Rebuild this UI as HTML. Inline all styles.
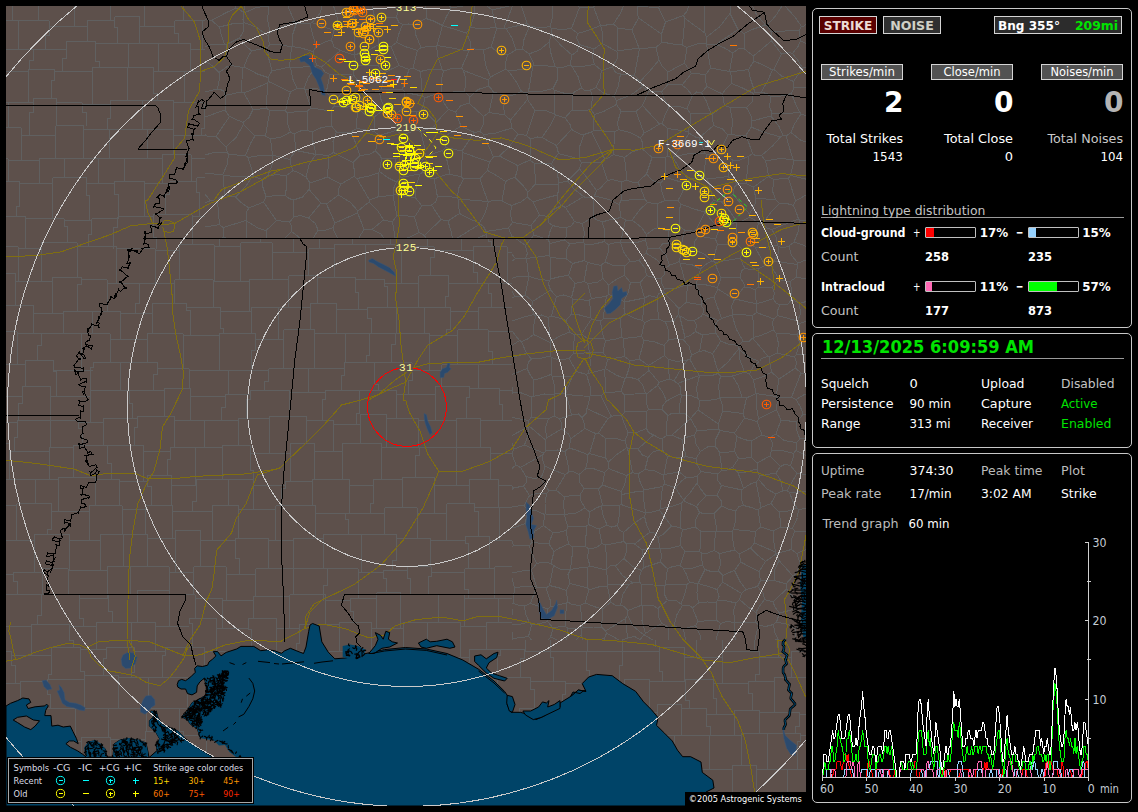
<!DOCTYPE html><html lang="en"><head><meta charset="utf-8"><title>Lightning Monitor</title><style>

html,body{margin:0;padding:0;background:#000;}
body{width:1138px;height:812px;position:relative;overflow:hidden;font-family:"DejaVu Sans","Liberation Sans",sans-serif;}
.map{position:absolute;left:6px;top:6px;display:block;}
.panel{position:absolute;border:1px solid #c8c8c8;border-radius:5px;box-sizing:content-box;}
.box{position:absolute;border:1px solid #d4d4d4;}
.bar{position:absolute;width:49px;height:9px;border:1px solid #c0c0c0;border-radius:1px;background:#000;}
.bar i{display:block;height:9px;}
.rule{position:absolute;height:1px;background:#9a9a9a;}
.legend{position:absolute;left:8px;top:758px;width:243px;height:43px;background:#000;border:1px solid #a8a8a8;box-shadow:0 0 0 1px #000;}
svg.txt{position:absolute;left:0;top:0;pointer-events:none;}
text{font-family:"DejaVu Sans","Liberation Sans",sans-serif;font-size:13px;}
text.r{font-size:13px;}
text.b{font-family:"DejaVu Sans Condensed","DejaVu Sans","Liberation Sans",sans-serif;font-weight:bold;font-size:13px;}
text.big{font-family:"DejaVu Sans Condensed","DejaVu Sans",sans-serif;font-weight:bold;font-size:28px;}
text.date{font-family:"DejaVu Sans Condensed","DejaVu Sans",sans-serif;font-weight:bold;font-size:17px;}
text.sm{font-size:9.5px;}
text.mono{font-family:"Liberation Mono","DejaVu Sans Mono",monospace;font-size:11px;}

</style></head><body>
<svg class="map" width="800" height="800" viewBox="6 6 800 800" fill="#fff"><rect x="6" y="6" width="800" height="800" fill="#5d504b"/><path d="M243.5,12L245,6M243.5,12L236,8M236,8L235,6M205,18.5L205,19.5M236,8L225.5,13L211.5,20.5M211.5,20.5L205,19.5M800,220L798,232L794,242M800,220L806,220.5M794,242L803,245L806,246.5M800,220L798.5,219M789,246L794,242M789,246L783,248L778.5,246.5M798.5,219L772,229.5M772,229.5L776,237L777.5,245.5M778.5,246.5L777.5,245.5M689,133L681,147L673.5,157M689,133L695.5,137L699,138M699,138L705,153M673.5,157L691,153L705,153M796.5,354L799.5,344.5L798.5,337.5M796.5,354L806,354M798.5,337.5L806,337.5M757,303.5L755,296L755,290M757,303.5L765,301.5L773,298.5M755,290L758.5,287M758.5,287L764,288L772.5,287M772.5,287L774.5,293.5L773,298.5M797,334.5L798.5,337.5M797,334.5L800,329.5L799,323.5M806,321.5L805.5,321.5L799,323.5M554.5,416L559.5,419M554.5,416L548.5,418.5M546.5,438L545.5,428L548.5,418.5M546.5,438L561.5,429M561.5,429L562,424L559.5,419M806,474.5L797,473.5M806,491.5L789.5,492.5M789.5,492.5L787,490.5M787,490.5L797,473.5M243.5,12L244,13M268.5,6L256.5,7.5L244,13M205,61L212,65.5L219,72.5M205,92L217.5,89M219,72.5L219,81L217.5,89M219.5,27L221.5,36L224.5,44M219.5,27L233.5,23.5L243,23.5M243,23.5L243,32L239.5,38M239.5,38L231.5,42L226.5,44.5M224.5,44L226.5,44.5M205,47L211,44.5L224.5,44M211.5,20.5L219.5,27M244,13L243,19.5L244,22.5M244,22.5L243,23.5M231.5,65.5L226.5,67L219,72.5M231.5,65.5L227,56L226.5,44.5M229.5,116.5L243,122.5M229.5,116.5L216,136.5M216,136.5L226,147M243,122.5L243.5,124.5M243.5,124.5L236,137.5L226,147M306,177L309.5,163.5L316,154.5M306,177L298,172.5L293,170.5M293,170.5L290.5,163.5L290,159.5M316,154.5L296,150.5M290,159.5L291,157L296,150.5M758.5,287L758,279L759,268.5M759,268.5L765,265.5M765,265.5L771,265.5M772.5,287L775.5,282.5L779,279.5M779,279.5L771,265.5M765,265.5L755,247M755,247L765.5,247.5L777.5,245.5M778.5,246.5L778.5,253L774,261M774,261L771,265.5M806,278.5L796,277.5M796,277.5L797.5,264.5M806,260L798,263M798,263L797.5,264.5M790,281.5L786,281L779,279.5M790,281.5L796,277.5M774,261L797.5,264.5M789,246L791.5,255.5L798,263M744,48.5L739,48.5L733,53M744,48.5L745,40.5L744,33.5M738,29.5L744,33.5M738,29.5L716,44.5M716,44.5L723.5,47.5L733,53M774,319L756.5,312.5M774,319L772.5,322.5L773.5,330M773.5,330L761,335.5L753,337.5M756.5,312.5L752.5,315.5M753,337.5L754,328.5L752.5,315.5M798.5,219L796.5,213L793.5,205.5M762.5,223.5L767,228L772,229.5M762.5,223.5L771.5,211.5L779.5,203.5M793.5,205.5L788.5,204L779.5,203.5M729.5,71.5L733,53M729.5,71.5L730.5,72M744,48.5L748,52L753.5,56M754,61L753.5,56M754,61L748.5,69.5M730.5,72L737.5,71L748.5,69.5M754,61L764,65.5L772.5,70M772.5,70L768,80L761.5,92M748.5,69.5L750.5,79L755,92.5M761.5,92L755,92.5M730.5,72L731.5,77.5L731.5,83.5M731.5,83.5L741.5,87.5L753.5,93.5M755,92.5L753.5,93.5M699,138L713.5,125.5M720.5,150.5L728,135M720.5,150.5L714.5,154.5L707,155M707,155L705,153M728,135L722.5,129L713.5,125.5M792,299L788,304L780,305M792,299L799.5,303.5M799.5,303.5L800.5,314L797.5,321M797.5,321L777.5,315.5M777.5,315.5L778,309.5L780,305M773,298.5L776.5,303.5L780,305M790,281.5L791.5,289.5L792,299M806,301.5L803,302.5L799.5,303.5M799,323.5L797.5,321M774,319L777.5,315.5M773.5,330L776,333M776,333L797,334.5M757,303.5L757,304M757,304L756.5,312.5M289.5,222L294,217M289.5,222L292,227L291.5,231.5M318,230L315.5,223.5L308.5,218M318,230L314,237L312.5,238.5M294,217L300,215.5L308.5,218M291.5,231.5L300,238L301,238.5M660.5,548.5L661.5,557L660.5,562M660.5,548.5L671.5,548L680.5,545.5M680.5,545.5L685,551.5M660.5,562L665,566.5L667.5,568.5M667.5,568.5L673,566.5L680,565.5M685,551.5L680,565.5M698,583.5L705,569.5M698,583.5L689.5,582.5M689.5,582.5L686,573.5L683,568M705,569.5L702.5,565M683,568L691.5,568.5L702.5,565M687,584.5L665.5,584.5M687,584.5L684.5,595L681,604M681,604L676,600.5L667.5,600.5M667.5,600.5L664.5,594.5L665,585.5M665,585.5L665.5,584.5M689.5,582.5L687,584.5M667.5,568.5L665.5,584.5M680,565.5L683,568M640,582L641.5,584.5M640,582L639,578L641.5,570.5M641.5,584.5L665,585.5M641.5,570.5L644,567.5M644,567.5L660.5,562M634.5,544L642,549.5M634.5,544L650,532M642,549.5L660,548M650,532L655.5,533.5L658,537.5M658,537.5L660,548M660.5,548.5L660,548M644,567.5L643,560L642,549.5M641.5,570.5L632,566L624,558.5M634.5,544L626,543.5M624,558.5L626.5,552L626,543.5M806,455.5L796,450.5M797,473.5L790.5,465.5M796,450.5L793.5,453.5M790.5,465.5L793,458L793.5,453.5M680.5,545.5L681,537.5L682.5,529.5M682.5,529.5L680,527.5M658,537.5L663.5,534L671.5,526M671.5,526L680,527.5M487,6L492,10M509,6L492,10M414,25L408.5,24L402.5,24.5M414,25L426,18.5M426,18.5L426.5,9.5L425,6M398.5,6L398.5,9L396.5,17.5M396.5,17.5L399,22.5L402.5,24.5M372,6L373,10L375.5,21M353,6L354,13.5L357,26M357,26L363.5,24L372.5,24.5M372.5,24.5L375.5,21M225,110L226,102L225,95.5M225,110L205,117M217.5,89L223.5,90.5L225,95.5M229.5,116.5L225,110M216,136.5L207,136L205,134.5M205,155L212,153L227.5,152.5M227.5,152.5L226,147M286,176L277.5,174.5L267.5,176M286,176L293,170.5M267.5,176L272,165.5L272.5,155.5M290,159.5L272.5,155M243.5,124.5L249.5,130.5L255,136M227.5,152.5L228.5,154.5M255,136L250.5,143.5L245.5,155.5M228.5,154.5L245.5,155.5M205,173L222.5,175M228.5,154.5L227,165L222.5,175M255,136L260,135L265.5,136M272.5,155.5L259.5,155.5L248,157.5M272.5,155L270.5,139M270.5,139L265.5,136M248,157.5L245.5,155.5M296,150.5L294,134M270.5,139L281,137L290.5,132M294,134L290.5,132M205,194.5L210.5,200.5M210.5,200.5L217.5,201.5M223,175L223.5,183L225,194.5M217.5,201.5L219.5,197.5L225,194.5M210.5,200.5L205,203M217.5,201.5L219.5,224.5M219.5,224.5L205,227M573,93.5L572,110M573,93.5L575,91.5L581.5,88M572,110L581,111L591,109.5M581.5,88L584.5,90.5L590.5,90M591,109.5L592.5,97.5L590.5,90M572,66.5L585.5,66L594.5,64.5M572,66.5L578,76.5L581.5,88M601.5,70.5L594.5,64.5M601.5,70.5L600,79L596,87.5M596,87.5L590.5,90M765.5,25L753.5,29L744,33.5M765.5,25L756.5,14.5L752.5,6M738,29.5L730,13.5M730,13.5L730,6M704,6L704.5,19.5L705,33M730,13.5L719.5,27L706.5,37M706.5,37L705,33M753.5,56L771.5,41M772.5,70L774,69.5M774,69.5L781.5,54M781.5,54L771.5,41M795.5,201L788.5,178M795.5,201L806,195M806,179L805.5,179L790.5,175.5M790.5,175.5L788.5,178M793.5,205.5L795.5,201M775.5,199.5L772.5,191L774,179.5M775.5,199.5L756,198.5M756,198.5L755,194.5L753.5,187M753.5,187L768.5,176.5M768.5,176.5L774,179.5M779.5,203.5L775.5,199.5M788.5,178L774,179.5M794,87.5L791.5,93.5M794,87.5L806,87.5M791.5,93.5L794.5,101.5L799.5,112M806,115L805.5,115.5L801,114M801,114L799.5,112M793.5,81.5L781.5,76L774,69.5M793.5,81.5L794,87.5M771,97L767.5,94L761.5,92M771,97L781.5,96L791.5,93.5M772,113L769.5,106.5L771,97M772,113L787.5,114L799.5,112M746.5,107.5L751,116L752,121M746.5,107.5L730,107.5M730,107.5L732.5,121L731.5,134M752,121L751,127M751,127L750,129L746,135M731.5,134L738,136L746,135M771,116L772,113M771,116L752,121M753.5,93.5L752,102L746.5,107.5M720.5,150.5L733,160.5M733,160.5L740,160L749,156M749,156L752.5,153.5M728,135L731.5,134M752.5,153.5L746,135M762.5,223.5L758.5,223M755,247L753,245.5M753,245.5L758.5,223M749.5,214L755,204.5L756,198.5M749.5,214L749.5,217M758.5,223L756,221L749.5,217M755,290L749,287L744,287M757,304L735,299M744,287L735,299M752.5,315.5L733,314M733,314L731.5,306L734.5,299.5M734.5,299.5L735,299M436.5,46L437,45.5M436.5,46L429,46.5L421,47.5M421,47.5L416,35.5L414,25M426,18.5L433.5,21L442.5,25.5M437,45.5L439.5,36.5L442.5,25.5M286,176L287,186L285,195M285,195L289,198.5L293.5,200M306,177L310,183M293.5,200L302.5,197L309,189.5M310,183L309,189.5M294,217L293.5,200M308.5,218L321,203M309,189.5L321,203M605.5,458L589.5,453.5M605.5,458L605,438M598.5,433L605,438M598.5,433L595.5,433.5M589.5,453.5L595.5,433.5M561.5,429L568,433.5L571,438.5M559.5,419L563.5,417.5L571.5,415M582,417.5L578.5,414L571.5,415M582,417.5L584.5,424.5L585,428.5M571,438.5L585,428.5M587,408.5L586.5,413L582,417.5M587,408.5L608,418.5M598.5,433L608,418.5M595.5,433.5L585,428.5M587,408.5L589,401L589,396.5M571.5,415L566.5,394.5M589,396.5L566.5,394.5M685,551.5L699.5,551.5M702.5,565L701.5,557.5L702,553.5M699.5,551.5L702,553.5M650,532L646.5,524.5L644.5,516.5M671.5,526L666,519L659.5,510M645.5,512.5L652.5,512L659.5,510M645.5,513L644.5,516.5M626,543.5L624,541.5M644.5,516.5L634.5,523L623.5,532.5M624,541.5L623.5,532.5M643.5,491.5L644,502L645.5,512.5M643.5,491.5L634.5,492L622,494.5M645.5,513L621,504.5M622,494.5L621,504.5M617.5,525.5L619.5,530L623.5,532.5M617.5,525.5L619,517L619.5,505.5M621,504.5L619.5,505.5M787,490.5L782.5,491M780.5,466.5L784.5,464.5L790.5,465.5M780.5,466.5L776,473M776,473L781.5,482L782.5,491M776,473L759.5,476M782.5,491L776,494M776,494L767,489L758.5,479.5M759.5,476L758.5,479.5M806,394L803.5,395L796,399.5M796,399.5L791.5,397.5M791.5,397.5L801,373M806,374.5L806,374.5L801,373M806,414.5L803,414M803,414L800.5,407L796,399.5M794.5,357L777,353M794.5,357L796.5,362L795.5,368M795.5,368L779,379M777,353L769,357M769,357L770,363L771.5,372M779,379L771.5,372M796.5,354L794.5,357M776,333L778.5,343.5L777,353M801,373L795.5,368M769,357L768,356.5M768,356.5L762,349L752.5,338M733,314L732,315M732,315L736.5,329.5L743,341M752.5,338L749.5,341L743,341M718,371L728,362L739,348.5M718,371L712.5,353.5M712.5,353.5L716,349L720.5,341M720.5,341L728,344L738.5,345.5M739,348.5L738.5,345.5M396.5,17.5L386,17L375.5,21M550.5,637L551.5,634L553,628M550.5,637L557,640M553,628L558,627L565,626.5M566.5,640L567.5,635.5L568,628M565,626.5L568,628M681,604L682.5,605.5M667.5,600.5L662,605L658,608.5M669,627.5L662,623.5M669,627.5L674,626M682.5,605.5L677,614.5L674,626M658,608.5L658,616.5L662,623.5M581,629L568,628M581,629L581,635M576,640L581,635M223,175L237,177L252.5,176M225,194.5L232,196.5L235.5,197M235.5,197L246,186L252.5,176M267.5,176L262.5,179.5M285,195L266,196.5M266,196.5L263,187.5L262.5,179.5M248,157.5L251.5,168.5L253.5,176M262.5,179.5L256.5,177.5L253.5,176M253.5,176L252.5,176M221,238.5L224,237M219.5,224.5L223,227.5M223,227.5L224,237M223.5,238.5L224,237M224,237L226.5,238.5M636,111.5L642.5,105.5M636,111.5L639.5,121L644,133M642.5,105.5L659.5,124M644,133L650,130L659.5,124M729.5,71.5L710.5,68M716,44.5L706.5,44M710.5,68L706.5,44M706.5,37L706,44M591,109.5L594.5,114.5M594.5,114.5L604.5,111L616.5,104.5M596,87.5L603.5,93L614,96.5M616.5,104.5L616.5,100.5M614,96.5L616.5,100.5M601.5,70.5L612.5,67M612.5,67L615.5,72.5L620.5,74M614,96.5L618,87L620.5,74M594.5,64.5L592.5,57L594,49M612.5,67L617,59L617,51.5M617,51.5L602,43.5M594,49L602,43.5M593.5,7L594.5,6M593.5,7L585,8L579.5,7.5M579.5,7.5L578.5,6M639.5,48.5L634.5,75.5M639.5,48.5L639,48M620.5,74L634.5,75.5M639,48L617,51M555,66.5L551,53.5L549,42M555,66.5L533.5,65M533.5,65L533,61.5L529,54M549,42L540.5,49.5L529,54M685,18.5L705,33M685,18.5L683.5,15.5M683.5,15.5L687.5,10.5L688.5,6M683.5,15.5L665.5,22M665.5,22L658.5,7.5M658.5,7.5L659.5,6M749,156L746,183.5M746,183.5L753.5,187M752.5,153.5L756,156L761.5,155.5M768.5,176.5L767.5,169L765.5,161M765.5,161L761.5,155.5M751,127L763.5,132L780.5,137M761.5,155.5L772.5,146L780.5,137M771,116L779,126.5L783,135.5M783,135.5L780.5,137M793.5,81.5L802.5,68M781.5,54L789,52.5L792.5,53.5M802.5,68L798,60.5L792.5,53.5M720,398L718.5,386.5L720.5,376M720,398L742,397M742,397L738,385L732.5,376M720.5,376L732.5,376M718,371L718,373.5M712.5,353.5L704,350.5L699.5,351.5M718,373.5L710.5,376L699.5,375.5M690,359.5L694,367L699.5,375.5M690,359.5L691.5,355M699.5,351.5L691.5,355M623.5,338.5L641.5,336.5M623.5,338.5L624.5,356.5M630,360.5L624.5,356.5M630,360.5L635.5,360L639,359M639,359L644,340.5M641.5,336.5L644,340.5M638,379.5L642.5,384.5L645.5,393.5M638,379.5L649,370.5M645.5,393.5L646.5,394M646.5,394L657.5,385.5M657.5,385.5L659,382.5M659,382.5L649,370.5M630,360.5L629,368.5L626,377.5M638,379.5L632.5,378L626,377.5M639,359L648.5,365.5M649,370.5L648.5,365.5M664,345.5L653.5,341.5L644,340.5M664,345.5L664.5,355.5M648.5,365.5L664.5,355.5M749.5,214L733,194.5M746,183.5L737.5,184M733,194.5L734.5,187L737.5,184M733,160.5L730,168L728,176.5M728,176.5L737.5,184M715,262.5L717,268.5L721,278M715,262.5L740.5,258M721,278L740,277M740,277L741.5,271L745,268M745,268L743,265L740.5,258M759,268.5L751,270L745,268M744,287L744,284L740,277M753,245.5L742.5,249.5M742.5,249.5L740.5,258M374.5,131.5L356.5,128.5M374.5,131.5L374.5,126.5L374,117M374,117L365,114.5L357.5,108M356.5,128.5L357.5,108M351,132L355,141.5L360,155.5M351,132L356.5,128.5M360,155.5L369,154.5L375.5,151M379,135.5L375.5,151M379,135.5L374.5,131.5M357,106L367,90.5M357,106L357.5,108M383.5,105.5L381,112L374,117M383.5,105.5L381,99.5L379,91M367,90.5L372,93L379,91M421,47.5L417.5,50.5M402.5,24.5L399,33.5L396.5,42.5M396.5,42.5L406.5,47L417.5,50.5M436.5,46L438,57L442.5,70M442.5,70L431,69L420.5,71.5M417.5,50.5L413,68M420.5,71.5L413,68M378.5,66L379,57L383,46.5M378.5,66L380.5,70L384.5,73M384.5,73L390.5,69.5L399,65.5M399,65.5L391,46.5M383,46.5L391,46.5M379,44.5L383,46.5M379,44.5L368,50.5L354.5,55M355.5,65.5L355.5,61.5L354.5,55M355.5,65.5L378.5,66M367,90.5L360,83.5L353.5,75M379,91L381.5,89M355.5,65.5L353,74M381.5,89L384.5,73M353.5,75L353,74M381.5,89L402.5,89M402.5,89L409,69.5M409,69.5L399,65.5M396.5,42.5L391,46.5M413,68L409,69.5M372.5,24.5L377.5,35L379,44.5M327.5,177L341,184M327.5,177L329,155M341,184L354,176.5M329,155L333.5,152.5M333.5,152.5L353,162.5M354,176.5L354.5,171.5L353,162.5M316,154.5L323,155L329,155M310,183L327.5,177M336.5,132L351,132M336.5,132L333,141.5L333.5,152.5M360,155.5L353,162.5M326.5,204L338.5,195M326.5,204L335,223M338.5,195L350.5,202.5L358,211M335,223L347.5,217.5L357.5,213M357.5,213L358,211M321,203L326.5,204M341,184L338.5,189.5L338.5,195M333,227.5L325,230.5L318,230M333,227.5L335,223M357,178.5L354,176.5M357,178.5L369.5,200M358,211L363.5,206.5L369,202M369.5,200L369,202M624.5,356.5L607.5,359.5M626,377.5L625,378.5M625,378.5L616,375L605.5,368.5M607.5,359.5L605.5,368.5M660,509L662.5,486.5M660,509L673,506L681.5,503M681.5,503L683.5,500.5M675.5,488L664.5,484M675.5,488L680,495L683.5,500M662.5,486.5L664.5,484M643.5,491.5L644,490M644,490L662.5,486.5M659.5,510L660,509M680,527.5L681.5,503M697,476.5L697,483M697,476.5L691.5,477.5L686,477.5M697,483L689.5,493.5L683.5,500M686,477.5L681.5,481L675.5,488M696.5,506.5L688,503L683.5,500.5M696.5,506.5L699,503L706,496M706,496L700,488L697,483M638,474L640,481.5L644,490M638,474L645,469.5M645,469.5L655,471L663.5,475M663.5,475L664.5,484M608,418.5L611.5,416.5M590,396L589,396.5M590,396L601,395.5M611.5,416.5L606.5,407L601,395.5M586.5,374.5L590,386L590,396M586.5,374.5L588,373.5M588,373.5L596,371.5L604.5,369.5M604.5,369.5L606,392M601,395.5L606,392M625,378.5L621,391M604.5,369.5L605.5,368.5M606,392L615,392L621,391M645.5,393.5L624,394.5M624,394.5L621,391M646.5,394L646.5,404L648.5,409.5M648.5,409.5L647,411M624,394.5L625,411.5M647,411L625,411.5M611.5,416.5L615,415.5L621.5,416M625,411.5L621.5,416M699.5,512.5L696,519L695,527M699.5,512.5L705.5,514L714,513.5M714,513.5L717,531M695,527L700.5,531M700.5,531L706,531.5L715.5,531.5M717,531L715.5,531.5M682.5,529.5L687,529L695,527M696.5,506.5L699.5,512.5M721.5,506L714,513.5M721.5,506L721,500.5L717,495M717,495L706,496M699.5,551.5L701,543.5L700.5,531M714,550.5L708,553L702,553.5M714,550.5L715.5,531.5M640,582L633,583M624,558.5L615.5,566M615.5,566L622.5,575.5L633,583M624,541.5L616.5,543L605,545M615.5,566L610.5,565.5L606.5,569.5M605,545L606.5,555.5L606.5,569.5M608,584.5L607.5,577.5L606,570M608,584.5L629,584.5M633,583L629,584.5M606.5,569.5L606,570M638,474L632.5,472.5M632.5,472.5L626.5,475.5M622,494.5L621.5,491.5M626.5,475.5L625,483.5L621.5,491.5M701,640L700.5,636L695.5,625.5M695.5,625.5L683.5,629M683.5,629L685.5,639L685.5,640M669,627.5L668,638L668.5,640M674,626L683.5,629M698,621.5L695,614L692.5,608M698,621.5L716.5,620M716.5,620L716,602.5M716,602.5L707.5,602L698.5,603M698.5,603L692.5,608M695.5,625.5L698,621.5M682.5,605.5L689,605L692.5,608M698,583.5L708.5,586.5L717,589.5M698,583.5L697,592.5L698.5,603M717,589.5L719,596.5L717.5,600.5M717.5,600.5L716,602.5M806,599.5L804.5,601M804.5,601L806,601.5M721.5,506L728,509L735.5,511M732,531L733.5,529.5M732,531L717,531M733.5,529.5L735.5,521L735.5,511M792.5,528.5L786,527L781,527M792.5,528.5L797.5,517.5L798.5,509.5M781,527L780.5,521L779,512M779,512L787,511.5L797,508M797,508L798.5,509.5M795,531L792.5,528.5M795,531L806,532M806,508.5L798.5,509.5M789.5,492.5L793,502L797,508M776,494L771,503.5M771,503.5L776,509L779,512M776,434L781,420M776,434L784,440.5L796.5,442.5M781,420L789.5,421L797,421M797,421L796.5,430L800,439M800,439L796.5,442.5M806,438L800,439M803,414L801.5,416.5L797,421M796,450.5L796.5,442.5M793.5,453.5L784,451L771.5,450.5M776,434L770,437.5M770,437.5L772.5,443L771.5,450.5M780.5,466.5L774.5,460.5L770,456M770,456L771.5,450.5M759.5,476L757,469M757,469L757,463M770,456L757,463M722.5,411L722,403.5L720,398.5M722.5,411L743,413.5M720,398.5L720,398M742,397L746.5,398M743,413.5L746.5,398M739.5,350L749.5,357.5L759.5,361.5M739.5,350L740,360L744.5,372M759.5,361.5L754,365.5L749.5,374M744.5,372L749.5,374M768,356.5L761.5,358.5L759.5,361.5M743,341L738.5,345.5M739,348.5L739.5,350M718,373.5L720.5,376M732.5,376L738,374.5L744.5,372M753.5,380L749.5,374M753.5,380L763.5,376.5L771.5,372M496,27L497,28M496,27L483.5,29L470.5,27.5M497,28L491,47M491,47L483.5,50M483.5,50L471,48.5M471,48.5L470,41L466.5,33M470.5,27.5L466.5,33M512.5,6L504,28M492,10L496,27M504,28L497,28M490.5,77L506,69M490.5,77L485.5,65L483.5,50M506,69L505.5,63.5L507.5,55M507.5,55L499,53L491,47M469,51L471,48.5M469,51L437,45.5M442.5,25.5L466.5,33M451,8L463,6M451,8L449.5,6M442.5,25.5L446.5,16.5L451,8M470.5,27.5L474,15.5L474,6M331.5,40L334,30.5M331.5,40L334,47L340.5,50.5M354,28L339,26M354,28L355,40L354.5,55M339,26L334,30.5M354.5,55L340.5,50.5M316,47L310,24M316,47L323.5,42.5L331.5,40M310,24L312,22.5M312,22.5L321.5,26L334,30.5M357,26L354,28M333.5,6L336.5,14.5L339,26M312,22.5L320,13.5L322,6M269,6L267.5,19.5L270,32.5M244,22.5L256,27L268,35.5M268,35.5L270,32.5M288,6L290.5,12.5L294.5,21M270,32.5L294.5,21M316,47L313,51.5M310,24L302.5,23L296.5,23M313,51.5L301,48L292,46.5M292,46.5L292,36.5L296.5,23M294.5,21L296.5,23M231.5,65.5L243,67.5M225,95.5L241,92M243,67.5L241,92M253,109.5L249,117.5L243,122.5M253,109.5L244,93M244,93L241,92M253,109.5L266.5,108.5M244,93L267.5,83M267.5,83L266.5,108.5M265.5,136L267.5,124L270,110.5M266.5,108.5L270,110.5M353,74L330,74.5M340.5,50.5L321.5,67M321.5,67L325,72L330,74.5M313,51.5L316.5,65M321.5,67L316.5,65M547.5,621.5L553,628M547.5,621.5L547.5,614L548,609M565,626.5L566.5,603M548,609L550,607M566.5,603L550,607M548,609L538,606L530.5,603.5M536.5,587L546,588M546,588L550,599.5L550,607M530.5,603.5L536.5,587M641.5,584.5L642,605M658,608.5L652,605L642.5,605.5M642,605L642.5,605.5M662,623.5L654.5,627.5L645.5,633.5M642.5,605.5L642,620.5L645.5,633.5M653,640L644.5,635M644.5,635L645.5,633.5M550.5,637L548.5,640M581,635L582.5,640M604,640L604.5,638M604.5,638L600,640M249,208L263.5,202M249,208L246,213L246,220.5M246.5,221L246,220.5M246.5,221L258,228L266,230.5M263.5,202L276.5,220.5M276.5,220.5L272,225L266,230.5M235.5,197L241,202.5L249,208M266,196.5L263.5,202M223,227.5L246,220.5M247,238.5L246.5,221M266,238.5L266,230.5M289.5,222L276.5,220.5M291.5,231.5L286,237L285.5,238.5M685,18.5L683.5,32.5L682.5,45M706,44L698,43.5L687,47.5M682.5,45L687,47.5M661.5,34L665.5,22M661.5,34L662,42M682.5,45L673,44L662,42M713.5,125.5L712,114M730,107.5L724.5,105.5M712,114L724.5,105.5M731.5,83.5L725,90L722.5,94M724.5,105.5L722.5,94M572,55L561,45.5L551.5,35M572,55L577.5,51L579.5,44.5M579.5,44.5L576.5,38L577.5,33.5M577.5,33.5L571.5,28.5M571.5,28.5L562,29.5L551.5,28.5M551.5,28.5L551.5,35M570,65L572,55M570,65L563,67.5L557.5,68M557.5,68L555,66.5M549,42L551.5,35M572,66.5L570,65M594,49L579.5,44.5M602,43.5L603,34L600.5,25.5M600.5,25.5L588,30.5L577.5,33.5M600.5,25L593.5,7M579.5,7.5L571.5,28.5M551.5,28.5L550,26.5M552.5,6L552.5,17L550,26.5M506,28.5L512,38L516,50M506,28.5L527,23.5M527,23.5L529.5,26M529.5,26L524,39.5L522.5,49M516,50L522.5,49M504,28L506,28.5M507.5,55L516,50M521.5,6L527,23.5M550,26.5L540,28L529.5,26M529,54L522.5,49M508.5,71L506,69M508.5,71L521.5,69.5L533,66M533,66L533.5,65M661.5,34L638.5,18M658.5,7.5L638,6.5M638,6.5L637.5,13L638.5,18M639.5,48.5L656,47.5M639,48L632,30M662,42L656,47.5M638.5,18L632,30M617,51L618,28M632,30L618,28M600.5,25L606.5,25L613.5,24M613.5,24L618,28M613.5,24L620,14L623.5,6M794,160.5L793,159.5M794,160.5L805,160L806,160M793,159.5L786,136M806,142L801,140.5L791,132.5M791,132.5L786,136M790.5,175.5L794,160.5M765.5,161L779.5,158.5L793,159.5M783,135.5L786,136M801,114L794.5,124L791,132.5M765.5,25L767,25.5M771.5,41L771.5,37L771,31.5M767,25.5L771,31.5M767,25.5L775.5,16L782,6M802.5,68L806,67.5M792.5,53.5L798,46.5L800.5,41M800.5,41L806,43.5M771,31.5L799,30.5M800.5,41L799,30.5M785,6L795,17L801.5,26.5M799,30.5L801.5,26.5M801.5,26.5L804,26L806,24.5M716,333L715,324.5L718.5,320.5M716,333L702.5,335M718.5,320.5L702.5,314M702.5,335L695.5,331.5M695.5,331.5L696.5,325L694.5,320.5M694.5,320.5L701,316.5L702.5,314M720.5,341L716,333M732,315L721.5,318.5M721.5,318.5L718.5,320.5M699.5,351.5L702.5,335M702,304L707.5,298.5L714,297M702,304L700,293.5L696,284.5M696,284.5L706.5,285L717.5,287.5M714,297L718,289M718,289L717.5,287.5M721.5,318.5L714,297M701,305L702,304M701,305L704,310L702.5,314M686,302.5L686.5,293.5L688,285.5M686,302.5L693.5,303.5L701,305M688,285.5L696,284.5M734.5,299.5L718,289M721,278L717.5,287.5M722.5,411L718.5,424M720,398.5L708.5,400.5L700,401M718.5,424L698,410M700,401L699,407L698,410M699.5,375.5L696.5,388L698,398.5M700,401L698,398.5M665.5,322L669,331.5L668.5,340M665.5,322L674,320.5L678.5,314.5M678.5,314.5L679.5,315.5M679.5,315.5L685,337.5M668.5,340L677,338.5L683.5,340M683.5,340L685,337.5M658.5,319L651.5,319.5L644.5,322.5M658.5,319L665.5,322M664,345.5L668.5,340M644.5,322.5L641.5,336.5M686,302.5L679,308.5M679,308.5L678.5,314.5M694.5,320.5L687,320L679.5,315.5M695.5,331.5L690,335.5L685,337.5M691.5,355L689,346L683.5,340M674,381L679.5,371.5L687.5,360M674,381L670,379M670,379L668,369.5L668,359M687.5,360L676.5,361.5L668,359M690,359.5L687.5,360M677.5,383.5L699.5,375.5M677.5,383.5L674,381M659,382.5L664.5,380.5L670,379M664.5,355.5L668,359M565,118L555.5,115M565,118L570,124.5L571.5,129.5M555.5,115L550.5,125L542,137.5M542,137.5L556.5,145.5M556.5,145.5L571.5,129.5M572,110L565,118M591.5,132L594,130M591.5,132L584,134.5M594,130L593.5,122.5L594.5,114.5M584,134.5L580,134L571.5,129.5M621,217.5L625.5,220M621,217.5L611,219.5L602,222M625.5,220L620.5,242.5M602,222L605,231.5L604.5,241.5M620.5,242.5L615.5,242.5L608,244.5M608,244.5L604.5,241.5M625,266L613.5,265.5L605,262M625,266L630,261M620.5,242.5L624,252.5L630,261M608,244.5L608.5,252L605,262M593.5,217L582,223.5M593.5,217L596,219.5L602,222M582,223.5L584.5,233L583,242M583,242L585,244.5M604.5,241.5L594.5,244L585,244.5M679,308.5L663.5,292M686,285L688,285.5M686,285L675,288.5L664.5,288.5M664.5,288.5L663.5,292M658.5,319L657,297.5M663.5,292L658.5,293.5L657,297.5M642.5,320.5L644.5,322.5M642.5,320.5L644.5,298M657,297.5L649.5,295.5L644.5,298M621,111L630.5,111.5L636,111.5M621,111L617.5,122.5L618.5,129.5M644,133L640.5,138M640.5,138L630,132.5L618.5,129.5M591.5,132L604.5,158.5M594,130L614.5,132M604.5,158.5L608.5,158L613.5,154.5M613.5,154.5L614,145L614.5,132M621,111L616.5,104.5M618.5,129.5L614.5,132M742.5,249.5L738,245M713.5,261L714.5,254.5L717.5,244.5M713.5,261L715,262.5M738,245L717.5,244.5M665,200.5L678,200.5M665,200.5L662,192L660.5,183M660.5,183L665.5,177.5M665.5,177.5L686,183.5M678,200.5L681.5,194L686,183.5M667.5,156.5L666,157M667.5,156.5L673,157.5M673,157.5L679.5,168.5L689,180M666,157L665.5,177.5M689,180L686,183.5M707,155L705,165L704.5,176.5M689,180L698.5,177L704.5,176.5M728,176.5L707.5,179M704.5,176.5L707.5,179M686,285L680,263M696,284.5L700.5,269M700.5,269L692.5,265L680,263M713.5,261L712,261M700.5,269L705.5,264.5L712,261M698,236L715.5,239M698,236L694.5,242L694,249.5M717.5,244.5L715.5,239M712,261L705,254.5L694,249.5M402.5,89L405,92.5M420.5,71.5L422.5,96M422.5,96L405,92.5M364,229.5L372,229.5M364,229.5L360,236L359,238.5M372,229.5L381,234L384,238.5M357.5,213L360.5,220L364,229.5M369,202L378,211L383.5,220M383.5,220L372,229.5M338,238.5L334.5,232.5L333,227.5M383.5,220L390,221.5L392.5,221.5M392.5,221.5L395,237.5M395,237.5L393.5,238.5M357,178.5L369.5,176L378,173M369.5,200L379,196.5M379,196.5L378,173M381.5,158.5L380,155.5L375.5,151M381.5,158.5L380.5,165.5L379.5,171.5M379.5,171.5L378,173M392.5,221.5L397,215.5M379,196.5L393,195.5M397,215.5L393,195.5M442,92.5L464.5,91.5M442,92.5L441,81L443.5,71M464.5,91.5L466,80L463.5,70.5M443.5,71L452,68.5L461.5,68M461.5,68L463.5,70.5M489,86L488.5,80M489,86L478,89.5L470,97M488.5,80L463.5,70.5M470,97L464.5,91.5M442.5,70L443.5,71M469,51L461.5,68M490.5,77L488.5,80M450,174L455,175.5L461,176.5M450,174L447,160.5L442.5,150.5M461,176.5L462.5,152.5M442.5,150.5L445.5,147.5M445.5,147.5L462,151M462.5,152.5L462,151M554.5,416L555,407L554,395M565.5,394L566.5,394.5M565.5,394L562.5,393L555,394M554,395L555,394M569,358.5L559,360L551.5,357.5M569,358.5L576.5,371.5M572.5,376L576.5,371.5M572.5,376L552,376M551.5,357.5L551,374.5M552,376L551,374.5M586.5,374.5L576.5,371.5M565.5,394L569.5,383.5L572.5,376M555,394L554.5,385.5L552,376M585,244.5L584.5,260.5M605,262L601,265.5M584.5,260.5L587.5,262.5M601,265.5L587.5,262.5M738.5,458.5L743.5,458.5L751,457M738.5,458.5L732.5,467.5M757,469L746,472L738,472.5M757,463L751,457M732.5,467.5L738,472.5M717,495L721.5,485.5M697,476.5L701,471.5M721.5,485.5L717.5,480L718,474M701,471.5L718,474M679.5,472L664,474.5M679.5,472L681.5,458M664,474.5L667.5,456.5M681.5,458L667.5,456.5M663.5,475L664,474.5M686,477.5L679.5,472M686,456.5L693,458L696,458.5M686,456.5L681.5,458M701,471.5L697,464.5L696,458.5M647,411L646.5,428.5M621.5,416L628,433M646.5,428.5L638,432L628,433M605,438L616,438.5L625,441M628,433L625,441M605.5,458L608.5,462M608.5,462L615.5,455.5L627,447.5M625,441L627,447.5M608.5,462L608.5,468.5M632.5,472.5L627.5,448M626.5,475.5L608.5,468.5M627.5,448L627,447.5M793,576L779,560.5M793,576L786,584M779,560.5L774.5,570L774.5,580.5M774.5,580.5L786,584M705,569.5L711,571.5L718.5,571M714,550.5L719.5,553.5M718.5,571L720.5,564.5L719.5,553.5M732,531L733,540.5L734.5,550M719.5,553.5L728.5,551.5L734.5,550M739.5,554L740.5,562M739.5,554L744,551.5L750.5,548M765.5,561.5L757,554.5L750.5,548M765.5,561.5L759,571.5M759,571.5L740.5,562M779,560.5L776,554M774.5,580.5L767.5,581L760.5,580.5M765.5,561.5L776,554M759,571.5L760.5,580.5M621.5,491.5L602.5,485M608.5,468.5L604.5,472.5M604.5,472.5L602.5,485M569,472L573,471.5L579,474.5M569,472L567.5,461.5L565,451.5M587.5,454.5L576,450L569,448M587.5,454.5L587.5,461L585.5,469M585.5,469L579,474.5M569,448L565,451.5M589.5,453.5L587.5,454.5M571,438.5L569,448M604.5,472.5L593,468.5L585.5,469M619.5,505.5L602.5,505M602.5,485L598.5,489M602.5,505L598.5,489M579,474.5L579.5,482L584,488.5M598.5,489L584,488.5M512,527.5L516,527L525,523.5M525,523.5L527,515.5L528,511M528,511L524,505.5M512,506.5L524,505.5M525,523.5L534.5,531.5M528,511L536,510.5L544.5,514.5M544.5,514.5L543.5,525.5M534.5,531.5L543.5,525.5M795.5,640L796,629M802,620.5L798.5,626L796,629M802,620.5L806,621.5M806,549.5L797,553.5M806,565.5L800.5,565.5M797,553.5L800.5,565.5M791.5,549.5L791.5,539.5L795,531M791.5,549.5L797,553.5M794.5,575.5L798.5,568.5L800.5,565.5M794.5,575.5L806,582.5M794.5,575.5L793,576M791.5,549.5L776,553.5M776,554L776,553.5M761,507.5L758,510M761,507.5L756,482M758,510L751.5,507.5L743.5,505.5M743.5,505.5L741.5,499.5L742,490M756,482L750.5,484L743.5,488.5M742,490L743.5,488.5M771,503.5L761,507.5M758.5,479.5L756,482M735.5,511L739,506.5L743.5,505.5M721.5,485.5L742,490M738,472.5L743.5,488.5M732.5,467.5L727,470L722,470M722,470L718,474M770,437.5L762,435M751,457L751.5,441M751.5,441L759,436.5L762,435M776.5,410L767,414.5L758.5,419M776.5,410L777.5,398M758.5,419L756.5,406.5L756,393.5M776,396.5L777.5,398M776,396.5L756,393.5M781,420L776.5,410M762,435L757,421.5M757,421.5L758.5,419M791.5,397.5L777.5,398M743,413.5L744.5,418M746.5,398L756,393.5M757,421.5L744.5,418M779,379L776,396.5M753.5,380L756,393.5M268,35.5L269.5,45M269.5,45L280.5,44.5L291.5,47M353.5,75L334,104M330,74.5L326.5,91M326.5,91L334,104M357,106L343.5,107.5L334,106M334,106L334,104M536.5,587L531.5,570M531.5,570L522,571L512,573M514.5,587.5L525,586.5L536.5,587M514.5,587.5L513,582L512,578.5M602,543.5L605,545M602,543.5L596.5,547.5L589,549M606,570L590,566M590,566L587.5,557L589,549M514.5,587.5L513,603.5M512,604L513,603.5M530.5,603.5L524.5,606M513,603.5L518,605L524.5,606M640,639.5L644,635M701.5,92.5L707,86.5M701.5,92.5L696.5,92L692.5,95.5M682,85L687,89L692.5,95.5M682,85L691.5,73.5M691.5,73.5L700,74L705.5,75M705.5,75L705,79L707,86.5M712,114L711,114M711,114L706.5,101.5L701.5,92.5M722.5,94L707,86.5M710.5,68L705.5,75M684.5,63L687,47.5M684.5,63L691.5,73.5M669,107L678,106L687,109M669,107L665.5,114L662,123.5M667.5,128.5L662,123.5M667.5,128.5L688,131.5M688,131.5L690,124L690.5,113.5M690.5,113.5L687,109M689,133L688,131.5M667.5,156.5L667.5,128.5M711,114L690.5,113.5M692.5,95.5L690,101L687,109M668,84.5L661.5,92M668,84.5L667.5,80L668,72M668,72L662,66L659,60M659,60L649.5,71.5L640,81.5M661.5,92L648.5,91.5M648.5,91.5L642.5,86.5M642.5,86.5L640,81.5M682,85L668,84.5M669,107L665.5,101L661.5,92M684.5,63L668,72M656,47.5L659,60M634.5,75.5L640,81.5M642.5,105.5L648.5,91.5M659.5,124L662,123.5M616.5,100.5L631,95L642.5,86.5M530.5,139L526.5,135.5M530.5,139L530.5,148.5L530,160M530,160L517.5,165.5M499.5,156L517.5,165.5M499.5,156L509.5,146.5L518,134M518,134L526.5,135.5M499.5,156L493.5,157M493.5,157L483.5,134.5M518,134L512,128M483.5,134.5L496,133L512,128M528.5,91.5L539.5,92L553,88.5M528.5,91.5L526.5,93M526.5,93L527.5,99.5M527.5,99.5L535,110.5M535,110.5L546,110.5L555,114.5M555,114.5L554,103L554,90M554,90L553,88.5M557.5,68L557.5,79.5L553,88.5M533,66L531,77L528.5,91.5M508.5,71L516,81.5L521.5,91.5M521.5,91.5L526.5,93M526.5,135.5L530,125L535,110.5M512,128L510.5,120M510.5,120L527.5,99.5M555.5,115L555,114.5M542,137.5L537.5,137L530.5,139M573,93.5L565,93.5L554,90M657.5,385.5L662.5,391.5L666.5,401M648.5,409.5L653.5,409.5L662.5,410M662.5,410L662.5,406L666.5,401M677.5,383.5L680.5,387L680,394M666.5,401L680,394M698,398.5L690.5,395.5L681.5,395M680,394L681.5,395M718.5,424L719,429.5M698,410L690.5,418.5M719,429.5L707,430L697,430M690.5,418.5L697,430M686,456.5L682,439.5M696,458.5L700.5,451.5M700.5,451.5L696,444L694.5,435M694.5,435L687.5,437L682,439.5M720,430.5L715.5,439.5L715,446M720,430.5L734.5,433M734.5,451L737,436.5M734.5,451L729,452L719.5,452M719.5,452L715,446M734.5,433L737,436.5M719,429.5L720,430.5M700.5,451.5L707.5,447L715,446M694.5,435L697,430M744.5,418L734.5,433M738.5,458.5L734.5,451M751.5,441L744,439.5L737,436.5M722,470L719.5,452M556.5,145.5L558.5,153.5M584,134.5L579.5,147L579,159M558.5,153.5L579,159M530,160L534.5,163.5M534.5,163.5L551.5,164M558.5,153.5L555.5,157L551.5,164M604.5,158.5L601.5,162M601.5,162L592,162.5L581.5,162.5M579,159L581.5,162.5M535.5,184L548.5,185L558.5,184M535.5,184L528,192M528,192L527.5,197M557.5,195L547.5,197.5L533,202M557.5,195L558.5,190L558.5,184M527.5,197L533,202M534.5,163.5L535.5,184M551.5,164L557,172L559,183M559,183L558.5,184M515,177.5L517,171.5L517.5,165.5M515,177.5L523,185.5L528,192M647.5,202.5L640.5,209L632,220M647.5,202.5L657,204M632,220L641.5,227.5L646.5,234.5M657,204L658,227.5M658,227.5L653,229.5L646.5,234.5M632,220L625.5,220M620.5,242.5L635,243L645.5,240M646.5,234.5L645.5,240M640,282.5L644.5,298M640,282.5L646.5,275.5M664.5,288.5L662,284L661,278M661,278L655,278L646.5,275.5M624.5,275.5L625,266M624.5,275.5L630.5,282.5M630.5,282.5L640,282.5M630,261L635,261.5L639,260M646.5,275.5L645,268L639,260M638,182L632,182L626,180M638,182L646.5,174M626,180L626,171L624.5,157.5M646.5,174L652,157.5M624.5,157.5L632,152L642,148.5M642,148.5L652,157.5M647.5,202.5L645,199M657,204L665,200.5M645,199L638,182M660.5,183L652.5,180.5L646.5,174M666,157L652,157.5M640.5,138L642.5,142.5L642,148.5M613.5,154.5L624.5,157.5M645,199L621,200.5M626,180L621.5,182M621.5,182L621,200.5M601.5,162L607.5,180.5M621.5,182L612.5,179.5L607.5,180.5M621,217.5L619,204.5M619,204.5L621,200.5M720,227.5L727.5,226L736,222M720,227.5L713,222L705,212.5M736.5,221.5L730.5,212L721.5,202M721.5,202L713.5,200.5M713.5,200.5L704.5,212M705,212.5L704.5,212M738,245L736,222M715.5,239L720,227.5M698,236L695,231.5M695,231.5L705,212.5M749.5,217L742.5,221L736.5,221.5M733,194.5L721.5,202M707.5,179L710,187.5L713.5,200.5M678,200.5L680.5,204M680.5,204L694,209L704.5,212M512,298L515,296.5M515,296.5L512,291.5M529,276.5L528.5,276M529,276.5L525,295.5M525,295.5L522,296.5L515,296.5M512,278.5L517.5,276.5L528.5,276M512,254.5L515.5,258.5M515.5,258.5L512,261M477,238.5L486,234.5M486,234.5L486.5,238.5M511.5,235.5L508.5,228M511.5,235.5L510.5,238.5M508.5,228L486,231.5M486,231.5L486,234.5M511.5,235.5L525.5,245.5M525.5,245.5L527.5,253.5L525.5,258M525.5,258L515.5,258.5M528.5,276L526.5,258.5M525.5,258L526.5,258.5M486,231.5L483.5,226.5L480,224M480,224L456.5,238.5M395,237.5L398,238.5M379,135.5L396,130.5M381.5,158.5L395.5,159M395.5,159L403.5,152.5M403.5,152.5L400.5,133.5M396,130.5L400.5,133.5M383.5,105.5L388.5,108.5L396,113.5M396,130.5L396.5,122L396,113.5M405,92.5L401.5,109.5M396,113.5L401.5,109.5M422.5,160L425.5,156.5M422.5,160L420.5,164L423,172M425.5,156.5L442.5,150.5M450,174L443,175.5L434,179M423,172L428,177.5L434,179M461,176.5L463.5,179M463.5,179L458.5,188.5L457.5,197.5M457.5,197.5L445.5,196.5L437.5,197M434,179L437.5,197M414.5,217L419.5,209.5L421.5,206M414.5,217L419,232.5M419,232.5L424.5,235.5M424.5,235.5L441,219.5M441,219.5L431.5,205M431.5,205L421.5,206M397,215.5L404.5,215.5L414.5,217M405,238.5L409,237.5L419,232.5M426,238.5L424.5,235.5M452.5,238.5L451.5,233L448,221M448,221L441,219.5M396.5,182L394,187.5L393.5,194.5M396.5,182L400.5,177.5M393.5,194.5L415,197.5M400.5,177.5L420,174M420,174L416.5,185L415,197.5M379.5,171.5L387.5,177.5L396.5,182M393,195.5L393.5,194.5M395.5,159L396.5,166L400.5,177.5M421.5,206L419.5,202.5L415,197.5M403.5,152.5L413,158L422.5,160M423,172L420,174M437.5,197L435.5,202L431.5,205M515,177.5L511,178.5L505.5,181.5M493.5,157L489.5,162M489.5,162L487.5,170.5M487.5,170.5L498,176.5L505.5,181.5M463.5,179L480,178.5M489.5,162L462.5,152.5M487.5,170.5L480,178.5M511.5,205.5L521,202L527.5,197M511.5,205.5L502,201M505.5,181.5L502,201M459.5,213.5L470,219L479.5,223M459.5,213.5L458,199M458,199L488,201.5M479.5,223L485,213.5L488.5,201.5M480,224L479.5,223M448,221L459.5,213.5M457.5,197.5L458,199M480,178.5L483.5,189.5L488,201.5M508.5,228L512.5,222.5M511.5,205.5L510.5,215L512.5,222.5M502,201L493.5,200.5L488.5,201.5M461,126L455.5,112M461,126L474.5,132.5M483.5,116.5L483,125L480,131.5M483.5,116.5L469,103M469,103L460.5,106L455.5,112M474.5,132.5L480,131.5M445.5,147.5L447,141L444.5,136.5M444.5,136.5L461,126M462,151L474.5,132.5M483.5,134.5L480,131.5M570,244L583,242M570,244L567,249L566,258.5M584.5,260.5L572.5,263.5M566,258.5L572.5,263.5M648,457.5L653.5,451.5L662.5,450M648,457.5L642.5,455L638,449M638,449L653.5,435M662.5,450L662.5,438.5M662.5,438.5L660,438.5L653.5,435M645,469.5L646,465.5L648,457.5M667.5,456.5L662.5,450M627.5,448L638,449M646.5,428.5L648.5,432.5L653.5,435M512,453.5L514,449M512,443.5L514,449M526,476.5L520.5,467.5M526,476.5L534.5,478.5L541.5,477M520.5,467.5L533.5,460L543,454.5M541.5,477L543.5,471.5L545,466M545,466L542.5,460L543,454.5M773,531L760.5,527M773,531L773.5,540.5L775.5,552M775.5,552L754.5,543M754.5,543L755.5,531.5M755.5,531.5L760.5,527M781,527L773,531M758,510L759.5,519.5L760.5,527M776,553.5L775.5,552M750.5,548L754.5,543M733.5,529.5L755.5,531.5M734.5,550L739.5,554M741.5,593.5L746,589.5M741.5,593.5L722.5,582M746,589.5L740,581.5L734.5,570.5M734.5,570.5L728,573L723,575.5M722.5,582L723,575.5M760.5,580.5L757.5,586.5M757.5,586.5L753.5,587.5L746,589.5M740.5,562L734.5,570.5M718.5,571L723,575.5M717,589.5L722.5,582M716.5,620L720.5,623.5M720.5,623.5L716,640M739.5,599.5L747.5,606.5L756,612.5M739.5,599.5L736,603M736,603L733.5,610.5L735,622.5M756,612.5L756.5,618L755.5,622M755.5,622L735,622.5M764.5,599.5L763,593L757.5,586.5M764.5,599.5L759,607L756,612.5M741.5,593.5L739.5,599.5M717.5,600.5L727,601L736,603M720.5,623.5L727,621.5L735,622.5M773,602L786.5,589M773,602L775.5,608L779.5,613M779.5,613L789.5,610.5L797.5,608M786.5,589L799,604M799,604L797.5,608M764.5,599.5L773,602M786,584L786.5,589M776.5,622L788,624.5L796,629M776.5,622L779.5,613M802,620.5L797.5,608M804.5,601L799,604M617.5,525.5L611.5,527L607,525M602.5,505L601.5,506M601.5,506L602.5,514L607,525M602,543.5L599,529M599,529L607,525M524,505.5L529.5,495.5M529.5,495.5L539,493L546.5,493.5M545,514L545,503.5L546.5,493.5M565.5,474.5L556,490M565.5,474.5L553,470L545,466M541.5,477L543,482L549,491M556,490L549,491M523.5,486L529.5,495.5M523.5,486L526,483L526,476.5M549,491L546.5,493.5M513.5,488L512,490M513.5,488L512,486M523.5,486L513.5,488M516,465L520.5,467.5M516,465L512,468.5M516,465L512,454.5M529,546L536.5,563.5M529,546L532,542.5M532,542.5L549,544M536.5,563.5L544,562L551,563.5M551,563.5L554,551.5M554,551.5L549,544M531.5,570L536.5,563.5M512,547L513.5,545.5M513.5,545.5L520,545.5L529,546M512,541L513.5,545.5M534.5,531.5L531.5,537L532,542.5M553,532.5L550,540L549,544M553,532.5L543.5,525.5M546,588L549.5,585.5M553.5,565.5L549.5,585.5M553.5,565.5L551,563.5M512,608.5L512.5,613L512,614.5M239.5,38L245,45L251.5,51M243,67.5L244,67M244,67L247.5,58L251.5,51M269.5,45L267.5,47.5M251.5,51L260.5,49L267.5,47.5M336.5,132L331.5,126M334,106L331,111M331.5,126L331,111M316,154.5L313,141.5L312,132M331.5,126L321.5,127.5L312,132M294,134L300.5,131L308,130.5M312,132L308,130.5M244,67L257.5,74L268,77.5M267.5,47.5L268.5,57.5L272,71M272,71L268,77.5M291.5,47L289.5,67M272,71L289.5,67M316.5,65L316,66M316,66L303.5,67L290.5,67.5M289.5,67L290.5,67.5M267.5,83L268.5,81.5M268.5,81.5L268,77.5M305,89.5L311,108M305,89.5L304,88.5M304,88.5L297,88.5M297,88.5L290.5,92M290.5,92L287.5,101.5L285.5,111M287,112.5L307.5,111M287,112.5L285.5,111M307.5,111L311,108M326.5,91L316,88.5L305,89.5M331,111L311,108M316,66L308,78L304,88.5M290.5,67.5L293,79.5L297,88.5M268.5,81.5L290.5,92M270,110.5L285.5,111M290.5,132L287.5,124L287,112.5M308,130.5L307.5,111M553,532.5L558,532.5L566,530.5M554,551.5L559.5,548L568.5,544M566,530.5L568.5,544M553.5,565.5L560,569L570.5,569M570.5,569L572,556.5L572,546.5M568.5,544L572,546.5M590,566L587,567.5M589,549L585.5,546.5M585.5,546.5L572,546.5M587,567.5L579,568L570.5,569.5M642,605L628,610.5M644,635L633.5,626.5L627.5,615M628,610.5L627.5,615M629,584.5L623,594L620.5,605M628,610.5L624,606.5L620.5,605M608,584.5L607.5,586M607.5,586L610.5,602M620.5,605L615,605L610.5,602M489,112.5L505,115M489,112.5L493.5,92M505,115L503.5,107L506.5,95.5M493.5,92L498,93.5L506.5,95.5M510.5,120L505,115M483.5,116.5L489,112.5M489,86L493.5,92M470,97L469,103M521.5,91.5L512,95.5L506.5,95.5M679.5,413L672,413L668,415.5M679.5,413L685.5,414L690.5,418.5M690.5,418.5L672,435M668,415.5L666,427L667,435M667,435L672,435M662.5,410L668,415.5M681.5,395L679.5,406L679.5,413M682,439.5L676,437L672,435M662.5,438.5L667,435M512.5,222.5L531,225.5M533,202L539.5,215M539.5,215L534.5,221L531,225.5M525.5,245.5L534,235M534,235L531,225.5M567.5,181L579.5,169M567.5,181L574,189L583.5,196.5M579.5,169L587,177.5L596.5,190.5M583.5,196.5L586.5,198L593.5,197.5M596.5,190.5L594.5,196M593.5,197.5L594.5,196M559,183L567.5,181M581.5,162.5L579.5,169M607.5,180.5L600.5,188L596.5,190.5M619,204.5L609,199.5L594.5,196M593.5,217L593.5,197.5M694,249.5L689.5,251L681,254M680,263L679,261.5M679,261.5L681,254M512,374.5L518.5,372L527,368.5M512,387.5L513,392.5M527,368.5L530.5,375.5L534,380M534,380L533,396.5M513,392.5L521.5,393L532,397M532,397L533,396.5M531.5,359L528.5,362L527,368.5M531.5,359L526.5,353.5M512,357.5L516.5,356L526.5,353.5M512,393.5L513,392.5M550,356L551.5,357.5M550,356L542.5,358L531.5,359M551,374.5L541.5,378L534,380M554,395L544.5,394L533,396.5M531.5,417L528.5,420.5M531.5,417L532,397M512,417.5L528.5,420.5M531.5,417L539.5,418.5L548.5,418.5M400.5,133.5L408,133L417,130M401.5,109.5L407,111L416,112M416,112L417,130M425.5,156.5L424,144.5L420.5,131.5M444.5,136.5L434.5,126.5M434.5,126.5L420.5,131.5M420.5,131.5L417,130M550,257L550.5,279M550,257L558.5,258.5L566,258.5M572.5,263.5L568.5,275.5M568.5,275.5L560.5,276.5L550.5,279M529,276.5L539.5,279.5L549.5,280.5M525,295.5L527.5,297L532.5,301.5M532.5,301.5L550.5,290M550.5,290L548.5,284L549.5,280.5M549,255.5L526.5,258.5M549,255.5L550,257M549.5,280.5L550.5,279M524.5,445L528.5,433.5L528.5,426.5M524.5,445L543.5,453M545.5,440L529,426M545.5,440L546,451M546,451L543.5,453M512,435.5L528.5,426.5M514,449L524.5,445M543,454.5L543.5,453M546.5,438L545.5,440M528.5,420.5L529,426M565,451.5L557.5,450L546,451M565.5,474.5L569,472M776.5,622L773.5,624.5M755.5,622L758.5,625M758.5,625L765.5,626.5L773.5,624.5M513,638.5L512,632M513,638.5L528.5,636.5M512,624.5L521.5,624L529,622M528.5,636.5L531.5,625M531.5,625L529,622M512,640L513,638.5M531.5,640L528.5,636.5M524.5,606L525.5,613.5L529,622M547.5,621.5L540.5,623.5L531.5,625M773.5,624.5L774.5,631.5L778,639M778,639L779,640M601.5,506L597,507.5L589.5,512M599,529L595,527.5L588.5,524.5M589.5,512L588.5,524.5M585.5,546.5L586,535.5L586,526M566,530.5L568,527M568,527L577.5,526.5L586,526M545,514L564.5,514.5M568,527L565.5,519L564.5,514.5M588.5,524.5L586,526M566,590.5L570,583.5M566,590.5L568,602M570,583.5L587.5,588M568,602L572,604.5L580.5,605.5M580.5,605.5L585,603M585,603L589,590M589,590L587.5,588M549.5,585.5L559.5,588L566,590.5M570.5,569.5L568,574.5L570,583.5M566.5,603L568,602M587,567.5L588,577L587.5,588M582.5,627.5L581,629M582.5,627.5L581.5,618.5L580.5,605.5M582.5,627.5L593.5,627L601.5,627M603,609L601.5,627M603,609L595.5,607L585,603M607.5,586L598.5,587L589,590M603,609L610.5,602M625.5,618.5L605.5,631M625.5,618.5L627.5,638M622.5,640L627.5,638M618.5,640L611.5,635.5L606.5,633.5M606.5,633.5L605.5,631M627.5,615L625.5,618.5M601.5,627L605.5,631M640,639.5L634.5,636.5L627.5,638M604.5,638L606.5,633.5M557.5,195L558,201.5L561.5,205.5M539.5,215L548,216.5M548,216.5L553.5,209.5L561.5,205.5M582,223.5L574.5,221.5M583.5,196.5L565.5,207.5M574.5,221.5L565.5,207.5M565.5,207.5L561.5,205.5M680,252.5L675.5,246L669,243M680,252.5L684.5,230M669,243L668.5,237L668,231M668,231L679,226M684.5,230L679,226M695,231.5L684.5,230M681,254L680,252.5M680.5,204L679,215L679,226M658,227.5L668,231M665.5,268.5L657,260L646,253M665.5,268.5L669.5,265M669.5,265L666,255L659.5,248M659.5,248L647.5,248M647.5,248L646,253M661,278L664.5,274.5L665.5,268.5M639,260L646,253M679,261.5L675,263.5L669.5,265M669,243L662.5,244L659.5,248M645.5,240L647.5,248M534,314.5L535.5,316M534,314.5L522.5,317.5L512,321M535.5,316L533.5,327L533.5,334.5M533.5,334.5L527.5,339L521.5,341.5M521.5,341.5L519.5,340.5M519.5,340.5L512,331M532.5,301.5L531.5,309L534,314.5M548,317.5L550.5,341.5M548,317.5L541.5,315L535.5,316M550,342.5L550.5,341.5M550,342.5L533.5,334.5M550,356L550,350L550,342.5M526.5,353.5L521.5,341.5M512,345.5L519.5,340.5M425,98L423,105.5M425,98L434,94.5L441,94.5M423,105.5L429,115.5L436,122.5M441,94.5L444,103L448.5,109.5M448.5,109.5L436,122.5M422.5,96L425,98M416,112L421,110.5L423,105.5M442,92.5L441,94.5M434.5,126.5L436,122.5M455.5,112L448.5,109.5M548,317.5L551.5,316M550.5,290L556.5,296.5M551.5,316L556.5,296.5M735,622.5L734.5,635.5L736,640M758.5,625L756,635L755.5,640M778,639L775.5,640M580,495L581,501L585,508M580,495L571.5,495.5L564.5,497M585,508L576.5,513L564.5,514.5M564.5,497L563.5,504L564.5,514.5M584,488.5L580,495M589.5,512L585,508M556,490L564.5,497M552.5,225.5L558.5,227L566.5,227.5M552.5,225.5L550,231.5L548,239.5M550,243.5L548,239.5M550,243.5L564.5,240M564.5,240L567,235L566.5,227.5M548,216.5L549,223L552.5,225.5M574.5,221.5L571,226L566.5,227.5M534,235L548,239.5M549,255.5L550,243.5M570,244L564.5,240M623.5,338.5L622,337M607.5,359.5L603,352M622,337L615,339.5L605.5,340.5M605.5,340.5L604,347.5L603,352M588,373.5L590.5,364L589.5,353M603,352L589.5,353M569,358.5L573,354M573,354L589.5,352.5M550.5,341.5L561,335.5L569.5,332M551.5,316L559,318L566,320.5M566,320.5L568,326L569.5,332M573,354L574.5,335M569.5,332L574.5,335M568.5,275.5L575,283.5M556.5,296.5L563.5,295L571.5,297.5M571.5,297.5L575,283.5M587.5,262.5L584,281.5M584,281.5L575,283.5M605.5,340.5L604,338M589.5,352.5L587,338M604,338L587,338M574.5,335L581.5,334M587,338L581.5,334M566,320.5L571.5,314M571.5,297.5L572.5,299M571.5,314L572.5,299M601,265.5L603,278.5M584,281.5L587.5,283.5M587.5,283.5L597,282.5L603,278.5M624.5,275.5L617.5,278.5L608.5,285M608.5,285L603,278.5M571.5,314L579.5,315L591,318M572.5,299L589,300.5M589,300.5L590.5,309L591,318M587.5,283.5L591.5,298.5M589,300.5L591.5,298.5M604,338L601.5,329.5L600.5,321M581.5,334L591.5,319M600.5,321L591.5,319M591.5,319L591,318M608.5,294.5L606.5,296M608.5,294.5L616,296.5L624,301.5M606.5,296L603,319M624.5,302L624,301.5M624.5,302L624,308.5L625,313.5M603,319L620,318.5M625,313.5L620,318.5M608.5,285L608.5,294.5M591.5,298.5L599.5,297.5L606.5,296M630.5,282.5L628,293L624,301.5M600.5,321L603,319M644.5,298L624.5,302M642.5,320.5L635,318.5L625,313.5M622,337L620,318.5M12.5,6L12.5,20.5M38,6L38,20.5M74.5,6L74.5,26.5M110,6L110,20.5M144,6L144,26.5M183.5,6L183.5,20.5M6,20.5L18,20.5M18,20.5L49,20.5M18,20.5L18,49.5M49,26.5L87,26.5M49,20.5L49,35.5L45,35.5L45,49.5M87,20.5L114.5,20.5M87,20.5L87,41.5M114.5,16.5L139.5,16.5M114.5,16.5L114.5,27.5L117.5,27.5L117.5,43.5M139.5,26.5L174.5,26.5M139.5,16.5L139.5,43.5M174.5,20.5L202.5,20.5M174.5,20.5L174.5,33L178.5,33L178.5,43.5M202.5,20.5L205,20.5M202.5,20.5L202.5,49.5M6,49.5L33.5,49.5M33.5,49.5L66,49.5M33.5,49.5L33.5,60L29.5,60L29.5,69M66,41.5L95.5,41.5M66,41.5L66,58.5L62,58.5L62,71M95.5,43.5L128,43.5M95.5,41.5L95.5,61L99.5,61L99.5,67M128,43.5L158,43.5M128,43.5L128,67M158,43.5L190.5,43.5M158,43.5L158,71M190.5,49.5L205,49.5M190.5,43.5L190.5,71M6,71L28.5,71M28.5,69L54,69M28.5,69L28.5,102.5M54,71L92,71M54,69L54,80L51,80L51,98.5M92,67L127.5,67M92,67L92,104.5M127.5,67L153,67M127.5,67L127.5,100.5M153,71L184.5,71M153,67L153,93.5L157,93.5L157,100.5M184.5,71L205,71M184.5,71L184.5,102.5M6,102.5L8,102.5M8,102.5L33,102.5M8,102.5L8,127.5M33,98.5L56.5,98.5M33,98.5L33,112L29,112L29,135.5M56.5,102.5L82,102.5M56.5,98.5L56.5,125.5M82,104.5L110,104.5M82,102.5L82,112.5L86,112.5L86,125.5M110,100.5L142.5,100.5M110,100.5L110,118.5L107,118.5L107,129.5M142.5,100.5L173.5,100.5M142.5,100.5L142.5,129.5M173.5,102.5L204,102.5M173.5,100.5L173.5,135.5M204,104.5L205,104.5M204,102.5L204,128L201,128L201,135.5M6,127.5L21,127.5M21,135.5L55.5,135.5M21,127.5L21,160.5M55.5,125.5L83.5,125.5M55.5,125.5L55.5,158.5M83.5,129.5L109.5,129.5M83.5,125.5L83.5,158.5M109.5,129.5L147.5,129.5M109.5,129.5L109.5,158.5M147.5,129.5L173.5,129.5M147.5,129.5L147.5,158.5M173.5,135.5L205,135.5M173.5,129.5L173.5,154.5M6,158.5L8,158.5M8,160.5L39,160.5M8,158.5L8,181.5M39,158.5L64,158.5M39,158.5L39,183.5M64,158.5L98.5,158.5M64,158.5L64,177.5M98.5,158.5L124,158.5M98.5,158.5L98.5,183.5M124,158.5L162,158.5M124,158.5L124,181.5M162,154.5L191,154.5M162,154.5L162,183.5M191,158.5L205,158.5M191,154.5L191,181.5M6,181.5L19.5,181.5M19.5,183.5L52.5,183.5M19.5,181.5L19.5,206.5L16.5,206.5L16.5,216.5M52.5,177.5L86.5,177.5M52.5,177.5L52.5,218.5M86.5,183.5L114,183.5M86.5,177.5L86.5,195.5L89.5,195.5L89.5,220.5M114,181.5L144.5,181.5M114,181.5L114,194.5L118,194.5L118,218.5M144.5,183.5L169.5,183.5M144.5,181.5L144.5,216.5M169.5,181.5L196.5,181.5M169.5,181.5L169.5,194L165.5,194L165.5,214.5M196.5,177.5L205,177.5M196.5,177.5L196.5,192L199.5,192L199.5,216.5M6,216.5L25.5,216.5M25.5,218.5L64,218.5M25.5,216.5L25.5,248.5M64,220.5L91.5,220.5M64,218.5L64,226.5L67,226.5L67,242.5M91.5,218.5L117.5,218.5M91.5,218.5L91.5,234.5L88.5,234.5L88.5,246.5M117.5,216.5L153,216.5M117.5,216.5L117.5,227.5L113.5,227.5L113.5,248.5M153,214.5L192,214.5M153,214.5L153,237.5L156,237.5L156,248.5M192,216.5L205,216.5M192,214.5L192,244.5M219.5,238.5L219.5,246.5M260,238.5L260,242.5M293,238.5L293,252.5M319.5,238.5L319.5,248.5M352,238.5L352,244.5M390.5,238.5L390.5,244.5M427,238.5L427,246.5M461.5,238.5L461.5,250.5M488.5,238.5L488.5,241.5L491.5,241.5L491.5,246.5M6,246.5L18,246.5M18,248.5L41,248.5M18,246.5L18,281.5M41,242.5L77,242.5M41,242.5L41,281.5M77,246.5L116.5,246.5M77,242.5L77,277.5M116.5,248.5L155,248.5M116.5,246.5L116.5,283.5M155,250.5L179.5,250.5M155,248.5L155,283.5M179.5,244.5L214,244.5M179.5,244.5L179.5,279.5M214,246.5L240.5,246.5M214,244.5L214,281.5M240.5,242.5L272,242.5M240.5,242.5L240.5,281.5M272,252.5L308.5,252.5M272,242.5L272,279.5M308.5,248.5L334,248.5M308.5,248.5L308.5,275.5M334,244.5L365.5,244.5M334,244.5L334,277.5M365.5,244.5L401.5,244.5M365.5,244.5L365.5,279.5M401.5,246.5L434,246.5M401.5,244.5L401.5,283.5M434,250.5L473,250.5M434,246.5L434,257.5L430,257.5L430,275.5M473,246.5L507,246.5M473,246.5L473,272.5L477,272.5L477,283.5M507,252.5L512,252.5M507,246.5L507,283.5M6,273.5L15.5,273.5M15.5,281.5L52,281.5M15.5,273.5L15.5,305M52,277.5L81.5,277.5M52,277.5L52,313M81.5,279.5L107,279.5M81.5,277.5L81.5,284.5L77.5,284.5L77.5,311M107,283.5L139,283.5M107,279.5L107,311M139,283.5L174.5,283.5M139,283.5L139,303L135,303L135,313M174.5,279.5L213,279.5M174.5,279.5L174.5,303M213,281.5L249,281.5M213,279.5L213,307M249,279.5L288.5,279.5M249,279.5L249,311M288.5,275.5L317.5,275.5M288.5,275.5L288.5,307M317.5,277.5L355.5,277.5M317.5,275.5L317.5,303M355.5,279.5L384.5,279.5M355.5,277.5L355.5,292.5L358.5,292.5L358.5,309M384.5,283.5L418.5,283.5M384.5,279.5L384.5,286.5L387.5,286.5L387.5,307M418.5,275.5L448.5,275.5M418.5,275.5L418.5,307M448.5,283.5L488,283.5M448.5,275.5L448.5,296L445.5,296L445.5,307M488,283.5L512,283.5M488,283.5L488,293.5L491,293.5L491,307M6,305L33.5,305M33.5,313L63,313M33.5,305L33.5,333.5M63,311L92.5,311M63,311L63,333.5M92.5,311L120.5,311M92.5,311L92.5,333.5M120.5,313L152.5,313M120.5,311L120.5,339.5M152.5,303L186.5,303M152.5,303L152.5,333.5M186.5,307L220,307M186.5,303L186.5,310.5L190.5,310.5L190.5,335.5M220,311L251,311M220,307L220,328L223,328L223,333.5M251,307L278,307M251,307L251,333.5M278,307L310,307M278,307L278,339.5M310,303L336.5,303M310,303L310,329.5M336.5,309L367,309M336.5,303L336.5,333.5M367,307L396,307M367,307L367,318L371,318L371,333.5M396,307L424.5,307M396,307L396,333.5M424.5,307L450,307M424.5,307L424.5,333.5M450,311L478.5,311M450,307L450,329.5L446,329.5L446,335.5M478.5,307L512,307M478.5,307L478.5,329.5M6,331.5L17,331.5M17,333.5L41.5,333.5M17,331.5L17,364.5M41.5,333.5L81.5,333.5M41.5,333.5L41.5,345.5L37.5,345.5L37.5,360.5M81.5,333.5L110,333.5M81.5,333.5L81.5,370.5M110,339.5L147,339.5M110,333.5L110,362.5M147,333.5L183,333.5M147,333.5L147,362.5M183,335.5L219,335.5M183,333.5L183,368.5M219,333.5L255.5,333.5M219,333.5L219,370.5M255.5,339.5L283.5,339.5M255.5,333.5L255.5,350L251.5,350L251.5,370.5M283.5,329.5L314.5,329.5M283.5,329.5L283.5,368.5M314.5,333.5L345,333.5M314.5,329.5L314.5,368.5M345,333.5L369,333.5M345,333.5L345,362.5M369,333.5L395,333.5M369,333.5L369,355L366,355L366,362.5M395,333.5L429.5,333.5M395,333.5L395,344.5L391,344.5L391,362.5M429.5,335.5L457.5,335.5M429.5,333.5L429.5,370.5M457.5,329.5L488,329.5M457.5,329.5L457.5,364.5M488,331.5L512,331.5M488,329.5L488,351L492,351L492,364.5M6,364.5L25,364.5M25,360.5L53.5,360.5M25,360.5L25,386M53.5,370.5L93,370.5M53.5,360.5L53.5,371L56.5,371L56.5,396M93,362.5L120.5,362.5M93,362.5L93,367.5L90,367.5L90,390M120.5,362.5L157.5,362.5M120.5,362.5L120.5,390M157.5,368.5L189,368.5M157.5,362.5L157.5,374L153.5,374L153.5,390M189,370.5L228.5,370.5M189,368.5L189,388M228.5,370.5L268.5,370.5M228.5,370.5L228.5,394M268.5,368.5L308,368.5M268.5,368.5L268.5,381L264.5,381L264.5,390M308,368.5L344,368.5M308,368.5L308,392M344,362.5L374.5,362.5M344,362.5L344,375L341,375L341,390M374.5,362.5L412,362.5M374.5,362.5L374.5,384L378.5,384L378.5,390M412,370.5L441.5,370.5M412,362.5L412,380L408,380L408,394M441.5,364.5L478.5,364.5M441.5,364.5L441.5,386M478.5,364.5L512,364.5M478.5,364.5L478.5,388M6,396L22,396M22,386L50,386M22,386L22,403L18,403L18,420M50,396L90,396M50,386L50,420M90,390L129.5,390M90,390L90,422M129.5,390L164,390M129.5,390L129.5,403.5L132.5,403.5L132.5,418M164,388L190.5,388M164,388L164,416M190.5,396L225,396M190.5,388L190.5,420M225,394L250.5,394M225,394L225,407.5L221,407.5L221,420M250.5,390L289.5,390M250.5,390L250.5,399L246.5,399L246.5,418M289.5,392L325.5,392M289.5,390L289.5,416M325.5,390L359,390M325.5,390L325.5,399.5L322.5,399.5L322.5,420M359,390L396,390M359,390L359,413.5L356,413.5L356,424M396,394L435.5,394M396,390L396,418M435.5,386L469,386M435.5,386L435.5,420M469,388L499,388M469,386L469,397.5L466,397.5L466,418M499,390L512,390M499,388L499,404.5L502,404.5L502,420M6,422L17.5,422M17.5,420L50,420M17.5,420L17.5,437.5L14.5,437.5L14.5,451M50,420L78.5,420M50,420L50,447M78.5,422L103.5,422M78.5,420L78.5,428L82.5,428L82.5,445M103.5,418L137,418M103.5,418L103.5,445M137,416L174.5,416M137,416L137,427L134,427L134,445M174.5,420L204.5,420M174.5,416L174.5,447M204.5,420L238,420M204.5,420L204.5,447M238,418L269.5,418M238,418L238,445M269.5,416L306,416M269.5,416L269.5,453M306,420L333.5,420M306,416L306,443M333.5,424L360.5,424M333.5,420L333.5,451M360.5,414L386.5,414M360.5,414L360.5,443M386.5,418L418,418M386.5,414L386.5,447M418,420L456.5,420M418,418L418,447M456.5,418L480,418M456.5,418L456.5,447M480,420L512,420M480,418L480,447M6,443L9.5,443M9.5,451L49,451M9.5,443L9.5,479M49,447L73,447M49,447L49,479M73,445L107,445M73,445L73,477M107,445L143,445M107,445L107,463L111,463L111,479M143,451L170.5,451M143,445L143,481M170.5,447L195,447M170.5,447L170.5,459.5L167.5,459.5L167.5,475M195,447L222.5,447M195,447L195,485M222.5,445L250,445M222.5,445L222.5,479M250,453L290,453M250,445L250,470L253,470L253,479M290,443L314,443M290,443L290,481M314,451L342,451M314,443L314,479M342,443L381.5,443M342,443L342,479M381.5,447L419.5,447M381.5,443L381.5,479M419.5,447L456.5,447M419.5,447L419.5,455.5L415.5,455.5L415.5,477M456.5,447L490.5,447M456.5,447L456.5,485M490.5,453L512,453M490.5,447L490.5,479M6,479L35,479M35,479L58,479M35,479L35,503.5M58,477L95.5,477M58,477L58,511.5M95.5,479L119,479M95.5,477L95.5,505.5M119,481L147.5,481M119,479L119,505.5M147.5,475L171.5,475M147.5,475L147.5,486.5L151.5,486.5L151.5,505.5M171.5,485L196,485M171.5,475L171.5,505.5M196,479L228,479M196,479L196,501.5L192,501.5L192,511.5M228,479L253.5,479M228,479L228,505.5M253.5,485L285.5,485M253.5,479L253.5,509.5M285.5,481L312.5,481M285.5,481L285.5,488.5L281.5,488.5L281.5,505.5M312.5,479L349.5,479M312.5,479L312.5,505.5M349.5,485L373.5,485M349.5,479L349.5,513.5M373.5,479L402.5,479M373.5,479L373.5,503.5L370.5,503.5L370.5,513.5M402.5,477L434.5,477M402.5,477L402.5,507.5M434.5,485L469,485M434.5,477L434.5,513.5M469,479L498.5,479M469,479L469,503.5M498.5,485L512,485M498.5,479L498.5,507.5M6,505.5L16.5,505.5M16.5,503.5L51.5,503.5M16.5,503.5L16.5,540M51.5,511.5L89,511.5M51.5,503.5L51.5,529L47.5,529L47.5,534M89,505.5L122,505.5M89,505.5L89,540M122,509.5L145,509.5M122,505.5L122,534M145,505.5L172.5,505.5M145,505.5L145,534M172.5,511.5L212,511.5M172.5,505.5L172.5,538M212,505.5L238.5,505.5M212,505.5L212,540M238.5,509.5L275.5,509.5M238.5,505.5L238.5,538M275.5,505.5L315.5,505.5M275.5,505.5L275.5,540M315.5,513.5L345.5,513.5M315.5,505.5L315.5,538M345.5,513.5L384.5,513.5M345.5,513.5L345.5,519L348.5,519L348.5,534M384.5,507.5L417,507.5M384.5,507.5L384.5,534M417,513.5L446.5,513.5M417,507.5L417,538M446.5,503.5L474.5,503.5M446.5,503.5L446.5,540M474.5,507.5L499.5,507.5M474.5,503.5L474.5,511L478.5,511L478.5,536M499.5,507.5L512,507.5M499.5,507.5L499.5,540M6,540L34,540M34,534L69,534M34,534L34,572.5M69,540L100,540M69,534L69,570.5M100,534L123,534M100,534L100,570.5M123,534L147,534M123,534L123,566.5M147,538L175.5,538M147,534L147,566.5M175.5,530L200.5,530M175.5,530L175.5,572.5M200.5,540L235,540M200.5,530L200.5,566.5M235,538L268,538M235,538L235,558L239,558L239,574.5M268,540L293.5,540M268,538L268,568.5M293.5,538L323.5,538M293.5,538L293.5,568.5M323.5,534L361.5,534M323.5,534L323.5,568.5M361.5,534L396.5,534M361.5,534L361.5,572.5M396.5,538L430,538M396.5,534L396.5,560.5L392.5,560.5L392.5,570.5M430,540L465.5,540M430,538L430,566.5M465.5,536L489.5,536M465.5,536L465.5,543.5L468.5,543.5L468.5,568.5M489.5,540L512,540M489.5,536L489.5,568.5M6,574.5L13,574.5M13,572.5L42,572.5M13,572.5L13,581.5L17,581.5L17,594.5M42,568.5L68,568.5M42,568.5L42,594.5M68,570.5L107,570.5M68,568.5L68,594.5M107,566.5L130,566.5M107,566.5L107,598.5M130,566.5L169,566.5M130,566.5L130,594.5M169,572.5L193.5,572.5M169,566.5L169,594.5M193.5,566.5L226,566.5M193.5,566.5L193.5,594.5M226,574.5L255.5,574.5M226,566.5L226,600.5M255.5,568.5L293.5,568.5M255.5,568.5L255.5,596.5M293.5,568.5L327.5,568.5M293.5,568.5L293.5,594.5M327.5,568.5L358,568.5M327.5,568.5L327.5,585L323.5,585L323.5,600.5M358,572.5L383,572.5M358,568.5L358,598.5M383,570.5L407,570.5M383,570.5L383,578L386,578L386,592.5M407,566.5L431,566.5M407,566.5L407,578.5L410,578.5L410,594.5M431,572.5L464.5,572.5M431,566.5L431,576.5L428,576.5L428,594.5M464.5,568.5L494.5,568.5M464.5,568.5L464.5,589.5L468.5,589.5L468.5,598.5M494.5,566.5L512,566.5M494.5,566.5L494.5,598.5M6,594.5L41,594.5M41,594.5L79.5,594.5M41,594.5L41,615.5L37,615.5L37,624M79.5,598.5L108.5,598.5M79.5,594.5L79.5,618.5L83.5,618.5L83.5,626M108.5,594.5L137,594.5M108.5,594.5L108.5,611L112.5,611L112.5,622M137,590.5L169,590.5M137,590.5L137,622M169,594.5L195,594.5M169,590.5L169,626M195,598.5L222.5,598.5M195,594.5L195,618M222.5,600.5L253,600.5M222.5,598.5L222.5,628M253,596.5L289.5,596.5M253,596.5L253,618M289.5,594.5L325.5,594.5M289.5,594.5L289.5,628M325.5,600.5L350,600.5M325.5,594.5L325.5,624M350,598.5L376.5,598.5M350,598.5L350,611L353,611L353,622M376.5,592.5L400.5,592.5M376.5,592.5L376.5,628M400.5,594.5L438.5,594.5M400.5,592.5L400.5,628M438.5,594.5L464,594.5M438.5,594.5L438.5,622M464,598.5L498,598.5M464,594.5L464,626M498,598.5L512,598.5M498,598.5L498,622M6,626L31,626M31,624L69.5,624M31,624L31,655M69.5,626L96,626M69.5,624L69.5,640.5L73.5,640.5L73.5,647M96,622L131,622M96,622L96,649M131,622L155.5,622M131,622L131,647M155.5,626L189,626M155.5,622L155.5,651M189,618L216.5,618M189,618L189,623L192,623L192,647M216.5,628L248,628M216.5,618L216.5,651M248,618L276,618M248,618L248,629.5L251,629.5L251,646.5M276,628L299,628M276,618L276,651.5M299,624L312,624M313.5,624L339,624M299,624L299,643.5L296,643.5L296,650.5M339,622L371.5,622M339,622L339,651M371.5,628L403.5,628M371.5,622L371.5,652M403.5,622L427.5,622M403.5,622L403.5,647.5M427.5,622L460,622M427.5,622L427.5,649M460,626L486.5,626M460,622L460,657M486.5,622L512,622M486.5,622L486.5,649M525.5,640L525.5,651M550,640L550,651M587.5,640L587.5,651M622.5,640L622.5,651M655.5,640L655.5,647M696,640L696,657M722.5,640L722.5,657M754,640L754,651M778,640L778,657M6,651L11.5,651M11.5,655L51,655M11.5,651L11.5,665L15.5,665L15.5,683M51,647L80,647M51,647L51,674L48,674L48,679M80,649L106,649M80,647L80,671.5L84,671.5L84,679M106,647L134.5,647M106,647L106,658L103,658L103,675M134.5,651L165,651M134.5,647L134.5,672L131.5,672L131.5,677M165,647L204.5,647M165,647L165,655.5L162,655.5L162,677M204.5,651L231,651M204.5,647L204.5,666M204.5,678.5L204.5,679M276,651L284.5,651M296.5,651L304.5,651M327.5,651L344.5,651M344.5,653L368.5,653M344.5,651L344.5,658M378,649L391.5,649M378,649L378,651M455,657L469,657M469,649L500.5,649M469,649L469,662.5L467,662.5M500.5,649L524,649M500.5,649L500.5,655.5L497.5,655.5L497.5,677M524,651L550,651M524,649L524,658.5L520,658.5L520,677M550,651L586,651M550,651L550,657L553,657L553,681M586,651L622.5,651M586,651L586,670.5L589,670.5L589,677M622.5,651L659.5,651M622.5,651L622.5,665L619.5,665L619.5,681.5M659.5,647L684,647M659.5,647L659.5,671.5L662.5,671.5L662.5,681M684,657L722.5,657M684,647L684,681M722.5,651L759.5,651M722.5,651L722.5,683M759.5,657L791,657M759.5,651L759.5,674.5L755.5,674.5L755.5,681M791,651L806,651M791,651L791,677M6,683L20.5,683M20.5,681L47.5,681M20.5,681L20.5,699M47.5,679L84,679M47.5,679L47.5,694.5L50.5,694.5L50.5,708M84,675L118.5,675M84,675L84,708M118.5,677L148,677M118.5,675L118.5,708M148,677L187,677M148,677L148,702L151,702L151,708M187,679L187.5,679M203,679L204.5,679M187,677L187,679.5M187,692L187,708M491.5,679L497,679M497,677L530,677M497,677L497,684M530,681L565.5,681M530,677L530,689L534,689L534,708M565.5,683L582.5,683M565.5,681L565.5,694.5L562.5,694.5L562.5,701.5M624,679L649,679M624,679L624,684.5M649,681L685,681M649,679L649,707.5M685,679L713.5,679M685,679L685,700.5L689,700.5L689,708M713.5,683L748.5,683M713.5,679L713.5,698L716.5,698L716.5,714M748.5,681L774,681M748.5,681L748.5,693.5L752.5,693.5L752.5,710M774,677L806,677M774,677L774,712M28,708L30,708M47,708L75.5,708M45.5,712.5L45.5,715.5M75.5,708L108.5,708M75.5,708L75.5,737M108.5,708L146,708M108.5,708L108.5,737M146,708L179,708M146,708L146,731M179,708L189,708M179,708L179,731M209,738L209,739M511,712L519.5,712M519.5,708L557,708M519.5,708L519.5,712.5M557,708L558,708M653.5,712L657,712M657,704L681,704M657,704L657,716.5M657,722L657,726M681,708L706,708M681,704L681,735M706,714L734,714M706,708L706,726.5L710,726.5L710,735M734,710L759.5,710M734,710L734,735M759.5,712L799.5,712M759.5,710L759.5,733M799.5,714L806,714M799.5,712L799.5,726L795.5,726L795.5,733M69,741L74,741M77.5,741L81.5,741M81.5,737L110.5,737M81.5,737L81.5,753.5M110.5,739L124,739M133,739L145,739M110.5,737L110.5,757M145,731L154.5,731M178,731L183.5,731M145,731L145,742.5M183.5,735L199.5,735M183.5,731L183.5,736.5M206.5,739L215.5,739M206.5,737.5L206.5,753M237.5,755.5L237.5,758M666.5,735L674,735M674,735L709,735M674,735L674,744M709,735L741.5,735M709,735L709,769M741.5,733L767,733M741.5,733L741.5,765M767,733L800.5,733M767,733L767,769M800.5,735L806,735M800.5,733L800.5,741.5L797.5,741.5L797.5,769M702,769L732,769M732,765L756.5,765M732,765L732,802M756.5,769L787,769M756.5,765L756.5,806M787,769L806,769M787,769L787,806M704.5,802L718,802M718,802L750.5,802M718,802L718,806M750.5,802L750.5,806M790,802L806,802M790,802L790,806" fill="none" stroke="#606060" stroke-width="1" shape-rendering="crispEdges"/><path d="M299.2,58.6 303.4,55.2 309.1,56.1 312.0,60.3 314.5,67.0 321.4,70.2 323.8,73.4 320.9,78.3 323.3,85.0 325.3,95.5 321.9,94.8 318.9,86.2 316.0,79.3 312.5,73.9 310.0,66.0 304.6,61.6 300.7,62.1Z" fill="#2b4a6e" stroke="#3a5676" stroke-width="0.5"/><path d="M368.6,260.3 372.3,258.4 377.3,261.6 383.4,264.5 389.6,267.7 394.5,272.6 395.7,276.3 390.8,273.4 384.7,270.2 378.5,267.0 373.6,263.5 369.1,262.1Z" fill="#2b4a6e" stroke="#3a5676" stroke-width="0.5"/><path d="M440.1,372.4 442.5,368.7 446.2,367.4 447.9,363.0 449.9,363.8 449.4,367.4 451.1,368.7 447.4,372.4 444.5,373.6 443.8,377.3 440.1,377.8Z" fill="#2b4a6e" stroke="#3a5676" stroke-width="0.5"/><path d="M424.1,413.5 426.5,414.8 427.7,420.9 430.7,427.1 432.2,433.2 429.7,434.5 427.3,429.1 425.3,423.4 424.3,418.5Z" fill="#2b4a6e" stroke="#3a5676" stroke-width="0.5"/><path d="M526.2,502.2 529.2,504.7 531.2,512.0 533.6,518.2 531.2,524.4 536.6,525.6 533.6,530.5 533.6,537.9 529.9,539.1 528.2,531.7 525.8,524.4 527.0,517.0 526.2,509.6Z" fill="#2b4a6e" stroke="#3a5676" stroke-width="0.5"/><path d="M604.3,308.3 609.2,303.4 612.9,298.5 612.2,292.3 613.7,286.2 617.1,285.7 617.9,291.1 621.6,287.4 622.8,292.3 626.5,291.6 627.0,294.8 621.6,298.5 620.3,304.7 615.4,309.6 610.5,313.3 606.8,313.8Z" fill="#2b4a6e" stroke="#3a5676" stroke-width="0.5"/><path d="M121.3,659.3 123.0,654.9 128.3,652.0 134.4,653.2 137.1,657.6 135.3,663.7 130.9,668.1 125.7,668.5 122.1,665.5Z" fill="#2b4a6e" stroke="#3a5676" stroke-width="0.5"/><path d="M42.2,680.8 46.0,680.1 50.1,684.8 51.8,688.9 47.5,690.1 43.9,686.6Z" fill="#2b4a6e" stroke="#3a5676" stroke-width="0.5"/><path d="M57.1,691.0 59.8,690.1 58.9,684.8 61.5,687.5 64.1,692.7 65.0,699.8 69.4,702.4 75.6,703.3 80.8,705.0 85.2,707.7 84.4,710.7 79.1,709.9 73.8,707.7 66.8,706.4 62.4,703.3 59.8,697.1Z" fill="#2b4a6e" stroke="#3a5676" stroke-width="0.5"/><path d="M140.6,706.8 143.2,699.8 145.9,695.9 151.1,695.4 154.7,699.8 155.0,705.0 151.1,707.7 148.5,711.2 145.0,714.2 140.6,712.1Z" fill="#2b4a6e" stroke="#3a5676" stroke-width="0.5"/><path d="M538.6,600.0 542.5,607.8 546.4,614.4 551.6,610.4 555.5,603.9 556.8,600.0 557.4,607.8 554.2,615.7 547.7,619.6 541.2,618.3 539.1,610.4Z" fill="#2b4a6e" stroke="#3a5676" stroke-width="0.5"/><path d="M782.5,727.0 785.3,735.5 789.6,739.7 796.7,745.4 795.2,755.3 791.0,754.7 786.7,748.2 783.9,738.3Z" fill="#2b4a6e" stroke="#3a5676" stroke-width="0.5"/><path d="M560.0,609.9 563.9,609.9 563.9,613.6 560.0,613.6Z" fill="#2b4a6e" stroke="#3a5676" stroke-width="0.5"/><path d="M181.0,6.0 194.5,22.0 200.7,42.0 200.7,71.4 199.5,91.0 188.4,110.8 184.7,138.0 174.8,150.0 174.8,157.6 162.5,177.3 147.7,200.0 145.3,200.0 147.7,212.0 152.7,223.4M200.7,71.4 214.2,66.5 224.1,57.9 227.8,46.8 229.0,22.2 232.7,14.8 241.3,6.2 248.7,19.7 256.1,27.1 263.5,41.9 264.7,51.7 270.9,59.1 280.0,60.3M214.2,200.0 221.6,189.6 246.2,179.8 270.9,171.1 280.0,169.4M280.0,60.3 294.8,59.1 309.5,52.9 324.3,61.6 339.1,73.9 353.9,81.3 368.6,103.4 373.6,118.2 366.2,133.0 353.9,147.7 329.2,157.6 304.6,162.5 280.0,169.9M366.2,133.0 383.4,137.9 403.1,133.0 417.9,147.7 427.7,162.5 440.1,177.3 452.4,192.1 462.2,200.0M472.1,6.2 469.6,29.5 462.2,49.2 437.6,59.1 430.2,73.9 422.8,93.6 417.9,103.4 427.7,108.3 435.1,118.2 437.6,133.0 427.7,147.7 417.9,160.1M437.6,133.0 452.4,137.9 477.0,140.4 501.6,137.9 526.2,145.3 560.0,160.1M403.1,133.0 398.2,147.7 400.7,167.4 398.2,187.1 398.7,200.0M588.3,6.2 587.0,22.0 597.0,37.0 604.3,49.0 603.0,71.4 604.3,93.6 589.5,110.8 597.0,123.0 609.2,140.4 614.0,149.0M560.0,160.0 584.6,157.6 614.0,149.0 633.9,150.2 658.5,145.3 683.0,130.5 707.7,115.7 732.4,101.0 757.0,86.2 781.6,78.8 806.0,71.4M614.0,149.0 592.0,162.5 574.8,182.2 560.0,200.0 541.0,224.6 523.8,237.0M712.7,187.0 732.4,182.2 757.0,177.3 781.6,173.6 806.0,176.0M668.3,147.7 675.7,167.4 688.0,177.3 707.7,187.1 717.6,200.0M6.0,257.0 37.0,255.4 61.6,251.7 86.2,243.0 110.8,234.5 130.5,225.9 152.7,223.4 162.5,224.6 174.8,223.4 192.0,213.5 209.3,203.7 219.0,200.0 240.0,192.0 280.0,170.0M162.5,224.6 164.0,221.0 168.7,220.4 173.5,222.5 174.8,226.6 173.0,231.5 168.7,232.8 164.0,231.0 162.5,226.6M163.7,230.8 167.4,249.0 170.0,273.9 172.4,298.5 172.4,310.8 176.0,335.4 181.0,357.6 183.5,372.4 182.2,389.6 177.3,400.0 170.0,414.8 162.5,427.0 160.0,449.2 153.9,471.4 147.7,481.3 137.9,503.4 133.0,530.5 129.3,560.0 128.0,600.0 127.0,640.0 130.0,660.0M398.2,200.0 399.4,224.6 397.0,239.4 393.3,256.6 397.0,273.9 395.7,298.5 399.4,323.0 400.7,342.8 403.0,360.0 404.4,372.4 405.6,382.2 403.0,400.0 405.6,400.0 409.3,412.3 420.4,432.0 427.7,454.0 438.8,471.4 433.9,483.7 422.8,508.3 403.0,540.4 381.0,565.0 353.9,584.7 321.9,600.0 310.0,612.0 305.0,628.0M368.6,400.0 388.3,389.6 405.6,382.2 417.9,360.0 427.7,345.3 452.4,330.5 464.7,315.7 477.0,293.6 489.3,273.9 496.7,261.6 501.6,244.3 505.3,238.2 523.8,237.0 541.0,224.6 560.0,207.4 575.0,190.0 600.0,165.0 614.0,149.0M405.6,370.0 427.7,363.7 452.4,362.5 477.0,362.5 501.6,357.6 526.2,354.0 560.0,350.2 584.6,350.2M414.2,367.4 395.0,380.0 378.5,394.5 361.3,400.0 341.6,405.0 324.3,424.6 304.6,444.3 280.0,467.7 257.3,475.0M461.0,200.0 472.0,214.8 484.4,232.0 505.3,238.2M522.5,237.0 536.0,256.6 543.5,283.7 553.3,303.4 560.0,315.7 572.3,330.0 584.6,342.8M584.6,347.7 609.2,323.0 633.9,310.8 658.5,298.5 683.0,283.7 707.7,269.0 732.4,254.2 757.0,241.9 781.6,229.5 806.0,222.0M584.6,352.7 609.2,357.6 633.9,365.0 658.5,367.4 683.0,370.0 707.7,372.4 732.4,372.4 757.0,370.0 781.6,357.6 801.3,342.8 806.0,338.0M584.6,357.6 592.0,372.4 601.9,387.0 606.8,400.0 608.0,400.0 626.5,419.7 633.9,432.0 630.0,449.2 629.0,473.9 630.0,498.5 633.9,520.7 646.2,542.8 651.0,562.5 656.0,587.0 658.5,600.0 659.2,600.0 669.7,621.0 682.7,639.2 701.0,657.5 711.5,673.0 722.0,696.6 737.6,720.0 745.4,741.0 750.7,767.0 754.6,792.0M584.6,357.6 574.8,372.4 565.0,387.0 560.0,394.5 548.4,400.0 546.0,409.8 526.2,427.0 511.5,449.2 489.3,461.6 462.2,471.4 438.8,471.4M584.6,342.8 577.2,323.0 572.3,305.9 584.6,293.6M576.0,350.0 578.0,343.0 584.6,340.0 591.0,343.0 593.5,350.0 591.0,357.0 584.6,359.5 578.0,357.0 576.0,350.0M587.0,342.0 592.0,325.0 600.0,310.0 612.0,296.0M739.8,259.0 769.3,278.8 794.0,298.5 806.0,308.3M761.0,200.0 764.0,225.0 770.0,250.0 775.0,290.0M6.0,460.3 37.0,463.5 73.9,469.0 91.0,475.8 103.4,473.9 135.4,473.4 147.7,478.8 172.4,478.8 197.0,476.3 246.2,473.9 280.0,468.5M257.3,475.0 246.2,503.4 236.4,518.2 231.5,533.0 216.7,550.2 214.2,572.4 211.8,589.6 206.8,600.0 200.0,625.0 190.0,640.0 183.0,655.0M633.9,432.0 646.2,441.9 670.8,456.6 707.7,466.5 757.0,472.6 794.0,486.2 806.0,494.8M806.0,535.4 798.9,572.4 789.0,592.0 784.0,600.0 784.6,600.0 787.2,626.0 784.6,652.2 795.0,673.0 805.5,696.6M6.2,661.1 17.6,659.3 35.1,652.3 52.7,647.0 66.8,643.5 79.1,644.4 87.9,648.8 91.4,657.6 98.4,664.6 109.0,670.8 123.0,673.4 135.3,676.0 145.9,682.2 159.9,685.7 168.7,678.7 175.7,669.9 184.5,657.6 186.3,650.5 191.6,643.5M87.9,647.0 98.4,641.8 123.0,640.0 149.4,641.8 167.0,648.8 184.5,655.8 200.0,654.9M128.3,640.0 133.6,648.8 135.3,655.8 131.8,666.4 131.8,673.4M10.5,622.4 8.8,631.2 11.4,640.0 13.2,650.5 15.8,659.3M200.0,655.0 225.0,645.0 250.0,640.0 280.0,641.8 304.8,628.7 321.8,624.0 345.3,628.7 368.8,637.9 384.5,635.3 394.9,626.0 415.8,619.6 441.9,617.0 462.8,620.9 478.5,616.2 502.0,617.0 528.0,622.2 560.0,630.0 586.0,639.2 612.2,640.5 651.4,644.4 677.5,652.2 703.6,660.0 729.8,662.7 755.9,657.5 782.0,653.5M304.8,628.7 306.0,615.7 314.0,604.0 322.0,600.0M777.0,640.0 779.0,655.0 786.0,662.0 790.0,650.0 785.0,640.0 777.0,640.0" fill="none" stroke="#806e10" stroke-width="1" stroke-linejoin="round" shape-rendering="crispEdges"/><path d="M6.0,706.0 10.5,703.3 17.6,700.6 22.8,698.0 29.0,698.9 30.8,702.4 26.4,705.0 28.1,708.5 35.1,706.8 44.8,705.9 46.6,704.1 48.3,705.9 45.7,710.3 44.8,715.6 51.0,715.6 51.8,726.1 58.0,725.2 63.3,727.0 70.3,726.1 72.9,731.4 76.4,738.4 78.2,743.7 73.8,741.0 69.4,741.0 65.9,743.7 70.3,747.2 77.3,750.7 82.6,754.2 86.1,756.9 87.9,741.9 94.9,741.0 105.4,749.0 107.0,757.0 113.0,757.0 114.0,744.0 120.0,740.0 128.0,738.5 138.0,740.0 146.0,743.0 148.0,752.0 149.0,757.6 157.1,750.5 155.9,744.0 159.7,738.9 155.9,732.4 149.4,725.9 149.4,720.8 153.3,716.9 150.7,711.0 156.5,711.7 157.8,716.9 162.3,724.6 168.8,727.2 177.8,731.0 184.3,737.6 192.0,744.0 202.4,750.5 212.7,757.0 214.0,758.2 241.2,758.2 239.9,755.7 233.4,754.4 229.5,750.5 227.0,742.7 220.5,744.0 215.3,738.9 207.6,737.6 199.8,736.3 197.2,728.5 190.8,724.6 186.9,719.5 181.7,716.9 186.9,711.7 192.0,702.7 199.8,698.8 206.3,694.9 206.3,685.9 204.3,678.1 199.8,682.0 197.2,685.9 196.6,692.3 192.0,694.9 187.5,693.6 185.6,689.0 181.0,689.0 177.8,687.1 177.2,684.6 178.5,680.7 181.7,679.4 185.6,680.7 190.8,676.8 195.3,672.3 194.6,668.4 197.2,665.8 202.4,666.5 207.6,665.2 209.0,661.9 212.4,659.3 215.9,655.9 213.3,651.6 217.6,651.6 221.0,655.9 226.2,652.4 236.6,649.0 240.9,646.4 253.8,646.4 260.7,650.7 267.6,649.8 274.5,650.7 281.4,653.3 284.8,650.7 290.4,648.3 297.0,651.0 303.5,653.5 306.0,647.0 308.7,631.3 310.0,625.0 312.6,623.5 319.2,626.0 321.8,641.8 328.3,652.2 334.8,658.8 345.3,658.0 358.3,655.4 371.4,652.2 384.5,649.6 405.4,647.5 426.3,649.0 447.0,653.5 462.8,660.0 478.5,669.2 494.0,681.0 504.6,691.4 509.8,699.2 507.2,704.5 511.0,712.3 520.3,712.3 530.7,715.0 536.0,719.6 543.8,716.2 551.6,711.0 560.0,707.0 560.0,703.0 570.4,696.6 578.3,690.0 586.0,691.4 582.2,683.6 588.7,677.0 596.6,674.4 612.2,675.7 622.7,683.6 635.7,691.4 643.6,701.9 651.4,709.7 658.0,717.5 656.6,725.4 664.5,733.2 672.3,741.0 677.5,750.2 682.7,756.7 690.6,756.7 701.0,762.0 702.3,772.4 712.8,780.2 714.0,788.0 706.0,792.0 704.0,806.0 6.0,806.0Z" fill="#004468" stroke="#000" stroke-width="1" stroke-linejoin="round"/><path d="M802.0,566.0 806.0,564.0 806.0,640.0 803.0,636.0 801.0,620.0 802.0,600.0 800.0,585.0Z" fill="#004468" stroke="none"/><path d="M368.8,653.5 375.3,645.7 378.0,639.2 375.3,632.6 380.5,635.3 383.2,639.2 385.8,631.3 389.7,632.6 388.4,639.2 392.3,641.8 397.5,643.0 389.7,647.0 381.9,648.3 374.0,653.5Z" fill="#004468" stroke="#000" stroke-width="1" stroke-linejoin="round"/><path d="M418.4,643.0 426.3,639.2 430.2,641.8 436.7,641.3 447.0,639.2 452.4,641.8 455.0,647.0 449.8,648.3 436.7,645.7 426.3,648.3 421.0,647.0Z" fill="#004468" stroke="#000" stroke-width="1" stroke-linejoin="round"/><path d="M474.6,656.0 481.0,654.8 486.3,658.8 494.0,653.5 498.0,652.2 496.8,657.5 489.0,662.7 486.3,668.0 491.5,673.0 499.4,675.7 507.2,678.3 504.6,681.0 494.0,678.3 486.3,673.0 478.5,665.3 474.6,661.4Z" fill="#004468" stroke="#000" stroke-width="1" stroke-linejoin="round"/><path d="M507.2,695.3 512.4,696.6 515.0,704.5 512.4,712.3 509.3,711.0 506.7,703.0Z" fill="#004468" stroke="#000" stroke-width="1" stroke-linejoin="round"/><path d="M522.9,711.0 530.7,711.0 538.6,707.0 542.5,701.9 546.4,703.0 549.0,700.6 547.7,707.0 554.2,704.5 560.0,700.6 560.0,708.4 541.0,717.5 533.3,719.6 525.5,715.0Z" fill="#004468" stroke="#000" stroke-width="1" stroke-linejoin="round"/><path d="M570.4,696.6 573.0,692.0 580.0,693.5 584.0,690.5 586.0,691.4 578.3,690.0Z" fill="#004468" stroke="#000" stroke-width="1" stroke-linejoin="round"/><path d="M13.2,720.0 17.6,717.3 26.4,716.0 33.4,720.0 39.5,720.8 35.1,726.1 30.8,729.6 24.6,727.0 17.6,722.6Z" fill="#5d504b" stroke="#000" stroke-width="1"/><path d="M204.3,678.1 210.1,679.4 215.3,674.2 221.8,671.6 228.2,669.7 227.0,679.4 226.3,688.4 223.0,698.8 220.5,706.5 212.7,707.8 207.6,714.3 202.4,717.5 201.0,724.6 197.2,728.5 190.8,724.6 186.9,719.5 181.7,716.9 186.9,711.7 192.0,702.7 199.8,698.8 206.3,694.9 206.3,685.9Z" fill="#004468" stroke="none"/><path d="M223.6,676.4L222.6,677.0L222.0,679.1M222.0,692.6L220.4,691.5L219.5,692.1M222.2,682.0L221.1,682.9L219.7,681.7M213.2,681.7L213.9,679.3L213.9,678.3L213.1,675.9L212.7,675.7M219.7,704.2L218.2,704.0L217.4,702.4L215.8,701.6L215.4,700.6M227.0,671.0L224.8,670.8L222.9,671.3L223.1,672.4M190.8,714.1L191.8,712.9L193.3,711.2L192.4,709.3M197.5,724.0L196.5,722.9L196.8,721.0L198.0,719.9M204.2,712.0L205.5,713.0L207.5,712.6L208.7,713.9L208.9,714.0M224.3,671.6L223.4,673.6L221.4,673.2M218.3,676.0L218.6,677.6L221.0,678.4M210.5,679.7L209.4,678.7L207.6,678.6L207.4,678.0M219.9,701.0L219.1,702.0L218.1,703.5L216.8,704.7M184.6,716.5L182.6,717.3L182.0,718.0M195.4,725.3L196.1,723.7L197.5,723.2L198.3,722.0L199.4,720.2M197.8,724.8L196.0,723.8L196.9,721.4M205.8,700.8L204.5,702.1L202.4,702.5L201.3,701.9M218.0,703.9L216.3,703.0L216.3,701.6L217.6,701.5M209.0,706.4L211.1,706.8L210.9,709.3L211.9,710.1M204.1,701.9L202.9,703.5L201.8,704.3L200.9,703.7M220.4,691.7L221.7,691.2L224.1,690.3L225.0,689.1L224.2,687.6M207.9,701.4L206.0,701.2L205.7,698.7M210.0,690.3L210.8,689.0L212.6,689.5M196.8,721.2L195.5,721.0L193.2,722.0L191.4,723.8M196.5,727.6L196.1,728.5L195.9,728.6M204.0,702.6L203.0,703.6L202.9,704.9L201.4,704.8M210.0,697.6L211.1,695.5L210.1,694.8L208.0,694.9L205.9,694.3M207.4,710.0L208.1,710.8L208.0,712.4L207.4,714.5L206.2,715.8M224.1,692.4L224.1,693.8L223.2,694.5L221.3,693.6L219.8,693.3M207.2,699.0L206.7,700.8L208.6,701.8M220.0,676.2L221.7,676.2L222.4,675.1L223.5,675.0M194.7,703.3L194.3,704.4L194.2,705.9L193.5,707.6M207.5,706.2L209.0,708.0L211.5,708.5L212.1,709.8M197.6,703.4L199.3,703.8L201.0,703.7M226.5,676.0L225.8,675.2L223.3,675.6L222.0,675.2L220.2,677.0M197.2,705.8L196.7,707.9L196.9,709.3L196.3,711.8M195.7,724.7L196.6,724.0L196.6,722.8L195.9,721.3M222.6,678.6L220.8,679.9L219.8,679.9L219.1,678.6M216.7,688.3L217.8,689.6L217.0,690.6M212.8,686.8L213.7,686.3L215.6,686.4L217.3,687.4L216.8,689.5M213.3,680.5L211.2,680.9L210.7,682.2M211.7,695.0L213.4,694.6L214.6,694.9M220.6,702.9L220.4,700.5L220.1,698.0L218.7,697.9L218.2,699.4M226.9,680.2L226.0,681.3L223.9,680.4L222.2,682.3M215.7,706.4L213.9,707.2L212.5,708.6L210.0,708.9M220.1,682.9L221.9,684.3L223.5,684.2L224.3,682.5M203.6,710.7L204.7,709.7L205.7,708.7L207.9,708.3L209.3,710.3M185.0,714.9L186.0,716.1L185.2,717.0L186.1,717.9L186.6,720.1M219.1,702.7L219.9,704.0L219.9,705.4L221.6,705.8M198.3,720.3L197.9,718.4L196.7,718.1L195.4,718.3L194.2,718.1M209.9,706.8L209.6,707.9L210.4,710.3L210.9,711.3M202.2,714.8L203.8,714.0L203.3,712.9L204.6,711.2L204.4,710.2M224.0,683.6L223.2,682.5L221.9,682.1L220.5,681.3M216.6,683.9L214.6,683.9L214.2,682.8M200.2,714.0L198.2,715.0L196.7,716.0M191.0,710.2L191.7,711.2L193.0,712.0L194.0,710.9L194.7,709.3M214.4,693.2L215.2,695.1L215.1,697.0L213.7,697.8L211.7,698.4M198.2,703.8L197.7,701.3L195.3,701.5L194.6,702.4L195.9,704.5M209.9,702.7L209.2,701.5L210.7,700.4M213.7,702.2L212.8,701.6L210.5,701.6L209.8,700.8M225.9,674.2L225.7,675.3L224.8,677.4M209.8,680.5L212.0,680.5L213.0,680.0L213.8,680.9L214.5,681.8M199.6,722.7L201.2,723.3L202.1,722.4L201.7,721.3L199.8,720.8M186.6,714.3L187.9,712.2L189.8,712.9M226.6,675.8L228.0,675.4L228.5,674.1M193.1,725.1L192.8,726.7M225.6,673.9L226.3,673.2L228.6,673.3M217.3,674.9L219.6,675.4L220.7,675.7L222.1,675.7M206.9,692.4L207.9,691.8L207.4,689.5M188.2,717.4L189.9,717.4L190.9,717.4L192.8,715.6L193.8,714.2M200.0,715.5L198.7,713.8L198.1,712.0L196.6,711.3L195.5,709.3M220.0,695.1L221.4,696.8L220.9,697.9M218.0,694.5L218.9,693.1L218.6,691.4L217.2,689.9M199.4,722.5L201.5,721.9L202.4,721.6M203.0,697.2L202.8,698.3L203.9,699.5L206.1,699.9M199.0,715.3L197.7,717.3L196.7,718.4L197.4,719.9L199.5,721.1M207.2,695.8L206.8,694.8L205.3,695.1L204.1,696.9L204.8,697.6M215.0,683.6L215.9,685.5L214.4,687.2L213.1,688.2L213.4,689.4M194.5,704.0L195.2,702.7L194.1,700.7M215.9,700.8L215.4,702.6L214.3,703.0L213.0,704.2L211.8,704.9M193.9,718.5L191.7,718.9L189.9,718.2L189.8,715.7M220.6,704.6L219.4,704.6L217.3,705.0L215.3,704.6L214.4,704.0M206.4,695.7L206.7,694.6L205.5,693.9M220.9,676.8L220.8,675.3L222.1,674.5L223.9,674.4M199.4,708.3L200.1,709.4L201.7,709.0L201.8,707.3M210.6,708.0L209.7,708.9L208.0,710.6M201.9,702.8L199.8,702.4L197.6,702.6M220.6,687.0L222.7,688.0L224.2,688.9L224.7,689.9M222.2,686.4L219.7,685.8L217.7,686.0M215.4,685.0L214.1,684.2L212.6,684.3L212.4,682.7M195.9,702.2L196.4,700.8L197.6,700.1L199.4,698.8L200.5,698.4M191.1,710.6L190.7,709.3L189.0,708.2M215.1,684.8L214.5,686.8L215.9,688.1L217.5,688.0L217.9,685.9M187.4,714.6L186.3,716.7L184.5,716.6L182.6,716.0L181.8,717.2M198.9,715.2L197.1,716.3L198.2,718.5M196.2,719.9L197.0,718.1L197.7,715.7L198.3,714.3M212.0,701.4L211.4,700.6L210.4,699.1L209.1,699.2M192.8,718.5L191.0,716.9L189.9,714.7L188.6,714.3M199.1,703.9L200.1,705.6L199.7,707.3M193.8,719.1L194.7,720.1L196.0,719.9M185.2,714.9L185.3,712.6L185.6,711.9M186.6,710.6L188.1,710.4L188.1,708.0M195.7,712.6L194.5,712.4L193.2,712.7M191.1,710.1L193.4,709.6L194.6,711.5L196.0,713.0M214.9,695.8L215.2,697.9L214.3,698.5L211.9,697.6M214.6,695.2L214.4,694.2L212.8,693.7L212.2,694.5L210.3,696.2M220.5,688.9L221.9,688.1L223.1,689.9M198.9,721.8L199.0,724.2L198.5,726.0L199.6,727.2M219.7,673.9L218.6,675.6L218.6,676.7M198.0,714.9L198.8,715.8L199.6,716.6L200.3,719.0L200.2,720.1M205.6,697.3L203.9,698.4L201.5,699.3M220.4,704.4L221.5,704.2L222.3,703.6M191.4,709.8L190.1,708.6L188.1,710.1M218.3,694.5L218.6,692.8L219.5,692.1M186.8,714.1L187.9,715.0L189.6,715.1M195.5,710.5L194.0,710.0L192.3,709.5L191.6,710.9L189.4,710.1M194.4,723.8L192.9,723.3L192.4,720.8L190.3,720.2L189.3,718.8M200.8,724.5L200.8,725.7L199.0,726.3L198.8,727.9M200.6,710.3L202.3,708.6L203.8,708.7L205.6,707.9L205.9,705.5M218.1,684.7L219.5,685.4L222.0,684.7L223.6,686.2M191.9,708.8L192.9,707.8L193.6,706.9L192.8,705.7M198.8,726.0L197.3,724.8L195.7,724.6L193.8,725.4L192.0,724.1M191.2,708.8L191.2,707.5L192.1,706.6L193.9,705.7M220.7,704.8L220.2,706.8L220.9,707.2M186.1,713.3L184.7,712.8M183.6,713.9L183.9,714.4M218.3,692.0L219.5,691.0L219.4,689.1L220.1,687.1L221.6,685.2M224.2,680.3L223.0,680.8L221.1,682.4M214.0,706.4L214.2,708.4M225.4,673.3L226.4,673.6L228.4,674.2L228.5,674.2M198.8,705.9L197.3,706.4L195.4,704.9L196.1,703.2L198.1,702.5M221.2,680.1L222.9,680.3L225.4,681.1L227.5,680.7M226.2,674.7L226.3,672.6L224.3,672.3L223.7,674.3L222.8,675.1M218.4,695.3L220.6,696.1L222.0,698.3L223.0,699.7L223.2,700.9M224.9,686.0L225.8,687.9L226.5,690.2L226.5,690.4M195.3,706.7L193.3,706.8L193.0,708.8M221.9,675.6L220.9,677.8L221.1,680.3M207.5,687.6L207.1,688.6L206.5,690.7L205.5,690.5M208.8,707.4L206.8,707.2L205.3,706.1L204.1,705.8M213.1,689.5L211.8,690.2L211.3,691.9L211.9,693.1M201.8,709.2L200.8,708.9L198.4,708.7M209.3,682.0L208.2,683.2L208.4,685.7M203.2,709.0L201.2,708.1L200.3,709.2L198.0,710.1L196.9,710.0M210.3,697.7L211.8,697.3L213.4,696.3L214.3,695.1M197.2,719.0L198.5,721.0L197.9,721.8L197.1,723.0M211.4,690.8L212.5,691.9L212.8,694.1L214.0,694.6M194.3,707.6L196.4,708.1L197.7,707.1M213.7,689.0L211.6,690.2L209.2,691.0M196.5,710.8L196.1,711.9L194.7,712.3L192.5,712.0M197.1,727.2L196.5,725.1L194.5,723.9L194.4,722.8M222.5,671.9L222.3,670.6M207.2,704.3L205.0,703.2L204.0,704.3M210.8,704.7L211.3,705.8L210.9,707.0M192.3,712.7L191.2,713.2L191.1,714.9L191.8,716.9L191.1,717.6M188.2,720.5L187.8,718.9L186.6,718.9M198.4,710.1L197.4,709.1L197.6,707.4L200.1,707.1M187.3,712.2L189.1,713.7L191.3,713.3L193.8,713.0L195.5,711.8M216.8,690.0L218.9,691.5L220.6,690.2L221.7,691.3M219.3,692.4L220.9,693.5L222.1,692.9L223.1,692.8M213.1,688.3L211.5,690.2L212.1,691.0L214.4,692.1L214.7,693.9M206.7,683.6L205.2,683.0L204.8,683.4M214.7,697.3L212.8,697.4L211.5,697.1L209.5,698.7M222.7,677.0L220.9,676.0L219.0,676.4L218.3,677.6L217.3,678.9M223.3,678.1L223.4,676.3L224.3,675.1L223.7,673.2M206.9,708.5L205.1,708.8L204.3,708.0L205.8,706.0M216.0,691.0L215.7,693.4L217.3,695.3L219.1,697.0M203.3,701.5L204.1,703.8L203.6,705.4L204.9,706.0L206.5,706.3M213.6,705.1L214.9,706.1L215.1,707.2L214.5,708.3M193.5,718.6L194.6,716.5L195.5,715.4L194.8,714.2M216.3,681.1L218.7,680.5L220.7,680.4L222.1,679.0L224.0,679.4M224.3,677.3L225.3,678.2L226.9,678.1L228.0,677.9M205.3,679.1L203.8,679.3M222.7,687.1L224.0,687.3L226.4,687.3L227.2,687.6M207.4,687.2L206.2,686.3L205.2,684.8M193.7,706.7L193.5,707.9L193.6,709.9M200.9,700.7L202.5,700.5L203.7,698.6M214.6,693.0L216.7,693.7L217.5,691.9L216.9,689.7L218.5,688.3M218.6,682.5L217.9,680.5L216.8,679.2L215.8,677.3M218.4,674.9L220.1,675.4L222.0,674.4L224.1,675.1M201.7,698.6L201.2,699.9L203.6,701.0L203.9,702.0M221.0,685.8L221.8,686.6L222.4,688.1L223.2,689.7L222.1,691.4M223.0,684.3L222.2,683.0L220.1,681.9L220.3,680.6M201.8,719.1L200.4,720.7L200.4,722.8L199.8,724.3M212.9,691.8L213.9,689.6L214.9,689.6L216.0,689.0M217.8,689.5L217.6,691.0L217.4,692.2M209.8,687.4L211.3,687.4L212.4,688.4M222.2,694.6L222.7,692.5L222.4,691.3M198.8,726.1L198.8,728.0M202.0,701.3L202.3,702.9L204.9,702.8L205.8,703.5L208.0,702.9M205.3,713.7L205.5,712.6L204.5,710.7M217.2,702.4L218.2,702.8L218.3,704.1L219.2,704.9L218.6,706.4M208.3,712.5L209.9,711.5L210.6,711.8M217.6,705.6L217.6,703.1L217.9,701.5L216.1,699.8L214.2,700.2M195.7,717.0L197.1,718.2L196.3,720.4L194.3,721.2M215.1,681.3L214.5,680.2L214.7,679.0L214.3,677.7M193.1,706.6L194.0,706.3L194.8,704.8L194.0,704.0L195.2,702.3M207.9,710.2L209.0,710.9L210.7,711.6M214.3,687.8L214.7,690.2L212.7,691.0M195.3,712.2L194.0,714.4L192.7,714.1L192.2,715.3L191.2,717.5M210.7,689.8L209.6,690.8L207.3,691.0L206.4,692.4L205.5,692.1M221.9,690.0L221.7,688.7L221.4,687.2M204.0,705.9L204.9,704.8L205.1,702.8L206.9,701.4L208.7,702.8M190.7,707.3L190.1,708.8L189.6,710.8L189.3,712.4L188.6,713.7M213.4,694.6L215.3,693.1L217.3,693.0L218.3,692.5M194.7,707.1L196.0,709.0L195.1,709.9L195.4,711.1M218.6,680.9L218.0,682.4L216.8,683.4M213.2,701.2L214.7,699.3L214.8,698.3L214.9,697.2L215.7,695.7M197.2,712.4L195.4,713.0L194.8,715.4M206.2,708.6L206.8,706.9L207.8,705.4M192.8,716.7L193.0,715.4L194.3,714.5M213.5,680.8L214.7,681.8L215.9,683.8M199.6,703.1L200.6,703.6L201.9,705.3L202.2,706.3L202.8,707.2M204.9,705.5L204.1,707.5L202.3,709.2L200.7,710.0L199.8,709.2M215.8,694.0L216.8,693.5L219.3,692.9M215.3,685.0L214.1,684.8L213.8,683.3L213.7,681.8M199.0,711.1L198.3,709.0L197.8,706.6L196.8,706.1M223.2,674.8L224.9,676.4L226.4,676.9L227.2,678.5L227.9,678.5M225.4,680.0L223.9,679.5L223.2,680.3L222.3,682.7M188.0,715.8L187.0,715.0L185.7,716.2L184.6,716.1M188.3,711.9L190.7,711.5L192.2,709.9M206.4,710.9L205.2,711.3L205.6,713.7L204.7,715.3L204.1,716.2M207.9,692.7L209.2,691.8L211.2,692.7M219.1,686.8L217.8,685.1L217.7,683.7M221.3,686.1L223.2,686.7L223.4,688.2L224.7,689.6M191.2,710.8L189.1,712.0L187.8,711.5M213.8,691.0L211.7,692.3L211.1,694.2M223.0,694.3L223.6,692.7L225.3,692.7M204.6,678.4L205.6,679.4L206.7,680.8M196.2,719.3L195.5,720.1L194.2,720.5L193.4,721.4M213.4,702.9L211.7,701.7L210.7,701.9L210.9,703.1M211.5,688.3L209.9,689.6L210.5,691.3L212.6,691.7M214.4,679.9L212.8,680.9L211.1,680.7L209.0,681.2L208.4,682.7M221.8,688.1L222.0,687.0L223.4,685.6M203.4,707.0L202.3,706.0L202.8,704.6M219.8,695.9L220.6,694.9L223.1,694.4L224.5,695.5L224.8,695.6M222.4,699.4L222.8,701.3L223.0,701.3M208.0,689.1L206.8,691.1L205.5,691.2M201.2,716.3L201.1,718.0L199.8,718.2M214.0,676.1L212.4,677.9L210.8,677.6L209.8,679.4M223.2,696.6L223.3,698.3L223.8,698.9M226.5,672.0L227.4,671.3L228.7,672.2M228.6,672.9L228.1,673.9L227.0,674.6M212.3,705.7L210.3,704.1L208.5,703.4L206.1,703.7M205.1,695.8L203.9,697.8L202.0,698.8M212.2,682.6L212.3,684.3L214.6,684.5L214.7,686.5L213.0,686.8M225.9,674.9L223.4,675.1L222.3,673.2L223.5,671.8L225.9,671.7M228.0,671.0L227.0,671.7L226.2,673.5L226.4,675.9L227.2,677.9M197.6,718.7L198.1,717.3L199.1,716.3M198.3,719.3L197.8,720.5L195.6,720.4M188.8,713.9L190.2,715.4L188.8,717.3L186.8,717.8M207.1,700.2L207.8,699.2L207.0,697.7M205.2,715.5L206.2,714.6L208.1,714.9M202.2,701.3L201.0,702.9L199.7,703.2L198.6,701.6M218.4,687.2L218.0,684.9L218.2,682.4M208.4,704.4L207.1,702.4L207.1,701.0L208.7,699.8L209.9,699.8M198.6,720.0L199.0,718.8L199.9,717.6M198.4,714.2L197.9,716.7L198.5,718.2L200.0,719.2L202.2,719.9M208.1,706.7L210.6,707.2L211.8,705.8L213.0,705.4L214.4,707.2M220.6,704.2L219.0,704.4L218.9,706.3M221.1,686.4L221.6,687.7L220.1,688.5L218.3,688.9M197.1,705.4L197.6,708.0L198.9,708.9L199.4,710.7L200.5,711.2M222.4,681.9L220.7,681.8L219.3,683.9L217.7,685.2L216.5,687.0M198.3,714.5L200.0,713.2L199.9,711.5L200.5,710.5L202.5,711.0M206.4,688.1L207.4,686.4L206.2,685.1L205.4,685.5" fill="none" stroke="#000" stroke-width="1.1" stroke-linecap="round"/><path d="M150.7,711.0 156.5,711.7 157.8,716.9 162.3,724.6 168.8,727.2 177.8,731.0 184.3,737.6 181.7,742.7 172.7,745.3 166.2,749.2 161.0,757.0 157.1,750.5 155.9,744.0 159.7,738.9 155.9,732.4 149.4,725.9 149.4,720.8 153.3,716.9Z" fill="#004468" stroke="none"/><path d="M153.3,715.2L154.3,714.1L155.2,713.6L156.2,712.0M165.9,730.0L164.9,729.5L162.7,728.8M155.6,727.0L155.8,729.0L155.4,730.7L153.8,730.7M154.0,719.9L155.3,720.5L154.9,721.5M152.8,718.5L154.0,719.6L154.8,719.0M167.5,728.0L165.3,727.9L162.8,727.3L161.9,726.4M154.3,717.7L155.0,719.4L155.6,721.4L157.2,721.6M153.2,713.2L151.5,713.6L151.5,714.7M156.5,713.5L155.5,712.5L154.5,711.4L154.3,710.6M160.5,726.3L159.1,725.1L157.8,723.8L157.6,722.0M176.9,737.0L178.9,738.5L178.0,740.3M175.7,735.1L176.1,736.0L176.0,737.4M171.8,730.1L173.3,731.6L175.4,733.0L174.9,734.6L174.5,736.4M174.3,732.9L173.0,731.2L173.9,729.3L174.2,728.6M180.1,740.5L182.2,740.2L183.4,740.6L184.1,739.8M162.4,731.1L162.8,729.9L163.6,727.7L162.6,726.7M168.8,746.8L170.6,747.5M181.3,738.4L181.9,740.5L183.7,740.5M174.8,739.9L175.6,737.8L176.7,736.5M156.1,715.9L155.6,714.9L154.8,714.1M169.2,735.6L168.4,736.4L166.9,737.1L164.8,738.1L163.4,737.5M167.8,740.5L166.2,740.1L165.0,737.8L166.3,735.7M161.5,739.0L163.1,739.7L165.2,738.7L166.2,740.0L167.0,741.2M173.9,739.5L174.5,738.4L174.8,737.2M156.7,744.2L157.4,741.9L156.8,741.4M170.4,739.7L171.4,741.4L173.8,742.0M168.4,738.9L170.3,737.5L171.1,736.8L172.4,736.8M155.0,713.0L154.1,712.3L154.1,710.6M164.1,752.2L164.9,750.5L163.7,748.7L165.2,746.7L164.3,744.9M166.7,746.0L167.9,744.2L170.4,744.4L171.3,745.4M153.4,711.7L155.1,712.5L156.3,711.2M153.4,719.6L153.0,720.6L151.6,721.2L152.1,723.5L152.9,724.4M169.1,727.9L168.6,726.3M172.4,739.1L173.1,740.7L172.2,741.2L170.6,741.1M167.0,744.4L166.7,747.0L167.8,748.6M156.5,727.4L154.9,726.1L154.2,724.1L152.1,722.9M170.7,734.1L169.1,734.3L168.5,732.5L167.6,731.4M171.3,741.1L172.8,740.0L172.9,737.5M157.7,717.0L155.2,716.7L153.4,717.0M157.1,749.4L158.0,750.2L157.9,752.0L157.9,753.4M170.3,743.4L169.4,742.3L169.1,741.3L169.0,739.8M169.5,744.2L170.6,744.8L171.8,743.5L171.2,741.2M163.7,749.4L163.8,747.7L163.3,746.8L163.2,744.4M163.6,731.7L164.9,732.1L165.6,734.1L164.8,736.2L165.8,737.8M158.8,746.4L159.7,744.5L157.8,743.3L158.2,741.2L157.9,740.0M156.8,746.4L156.1,745.6L155.3,745.3M178.0,735.9L177.7,738.0L179.7,739.4L180.1,740.7L181.6,742.2M171.2,737.8L171.0,736.5L171.1,734.5L172.9,733.7M177.4,743.6L177.7,742.4L176.5,741.5L174.9,739.9L172.7,739.0M161.1,725.9L161.8,728.3L162.4,730.4L164.8,731.1L165.5,730.0M164.2,745.3L165.9,744.4L167.3,743.9L168.2,745.0L168.1,747.6M163.9,739.6L165.9,740.4L167.5,740.9M158.7,745.8L157.8,743.9L156.2,742.8M171.2,740.6L171.9,739.0L173.4,739.0M173.2,742.3L174.8,742.4L175.1,741.4L173.8,739.6L172.1,738.9M170.9,734.0L172.6,732.8L174.5,731.2L176.2,732.3L176.4,733.6M175.2,743.2L174.9,741.2L176.6,740.3L177.7,740.0M162.3,745.3L162.2,746.7L162.9,748.1L162.7,749.7L164.5,751.4M170.3,729.8L172.0,728.9L172.0,727.7M173.8,739.9L172.8,741.4L172.0,743.7L172.7,745.3M177.3,743.6L177.2,744.8M174.1,735.2L174.0,734.2L171.8,733.2L170.3,734.8M165.6,731.2L164.8,730.2L163.9,729.0L165.2,727.2M153.9,715.1L154.8,716.0L154.9,717.6L154.7,719.7M163.4,735.3L164.1,734.5L165.4,735.3L167.7,735.4M168.3,741.5L169.8,741.4L171.8,742.5L172.2,744.2M173.0,742.1L171.8,743.8L170.7,743.7M153.9,724.0L154.3,725.0L152.8,726.3L152.0,727.4M158.9,747.9L160.1,750.2L159.7,751.6L157.5,752.3M160.9,724.1L160.4,725.0L159.7,726.0M153.8,728.5L153.6,729.9L156.1,730.5M154.9,718.1L155.5,719.5L155.5,720.7L154.1,721.0L153.3,721.9M172.1,734.1L171.6,735.3L172.7,736.6M153.4,724.8L153.6,722.6L155.9,721.4L156.4,719.3M176.2,738.5L177.0,736.3L175.4,735.3M160.7,747.9L161.7,747.5L162.3,746.4L164.0,745.2M155.3,731.2L154.2,731.8M175.9,732.5L175.2,731.2L175.7,729.9L174.4,728.7M156.4,744.4L155.3,745.0M160.1,751.5L162.3,750.2L162.0,749.0L160.7,748.6L159.3,749.3M167.8,737.4L167.0,738.8L165.2,740.6L164.3,742.5L163.8,744.5M168.1,731.5L166.7,732.5L165.3,732.4L165.0,733.8M154.5,717.5L153.9,718.8L153.5,720.8L151.6,721.2M164.7,745.8L162.2,746.6L160.7,746.2" fill="none" stroke="#000" stroke-width="1.1" stroke-linecap="round"/><path d="M86.1,757.0 84.0,748.0 87.9,741.9 94.9,740.0 101.0,744.0 105.4,749.0 107.0,757.6Z" fill="#004468" stroke="none"/><path d="M97.0,748.2L99.2,748.6L100.1,748.0M103.1,750.8L104.9,751.1L106.7,751.4M101.7,757.4L101.8,758.3M95.7,741.1L97.1,743.0L97.9,743.9M88.5,753.1L89.2,751.9L90.3,752.4L90.9,753.7L90.6,755.5M95.0,754.1L96.7,753.8L97.6,753.4L98.8,752.3L97.9,749.9M101.8,757.0L102.4,758.3M98.6,744.5L100.1,744.8L100.7,747.2L101.9,747.6L102.8,747.2M89.1,750.8L88.0,748.9L88.7,747.8M92.3,746.5L90.8,744.9L90.9,742.8M93.8,755.9L94.2,754.7L92.8,753.3L93.7,751.3M99.1,752.4L98.7,754.1L99.0,755.6M97.3,742.8L96.0,742.4L94.7,740.3M90.3,748.6L92.6,748.2L94.2,747.1L93.7,746.2M89.7,753.1L89.4,754.4L89.9,755.7L90.8,756.9M90.9,756.7L89.0,757.1L88.9,757.9M88.7,751.5L90.2,753.1L90.3,755.0L90.4,756.4M97.0,745.4L94.9,744.0L95.5,742.9L96.3,741.3L97.6,741.0M92.9,753.5L94.0,753.1L95.4,751.4L96.4,751.1L98.1,750.9M94.5,756.4L94.1,755.1L94.6,752.8M93.0,745.0L91.0,744.8L89.4,743.1M95.5,757.1L96.2,755.3L95.1,753.4L94.3,751.4M87.9,743.5L88.4,745.1L87.1,746.0L85.5,747.3L85.2,748.7M99.1,746.0L100.5,746.3L101.8,745.8L101.3,743.5M92.2,742.4L90.3,743.2L88.7,741.7L86.6,742.4M104.8,752.1L105.7,753.9L106.1,755.6M96.3,751.8L94.9,751.7L94.2,749.8L95.7,748.8L96.3,747.2M100.6,747.1L101.9,745.5L102.7,744.7M92.7,745.2L93.4,744.1L94.0,742.9L94.7,742.0M93.1,745.3L94.4,745.0L95.9,744.5L96.3,742.9L95.9,741.3M86.5,755.3L85.6,754.2L86.0,753.2L85.8,751.7M86.5,751.2L85.5,751.3L84.3,752.8M100.2,757.1L101.2,755.1L101.3,754.1L103.5,753.4M101.9,749.8L101.3,748.2L100.8,746.8L102.6,745.4M85.3,750.7L85.6,749.4L87.2,748.8L88.4,746.9M105.5,755.4L106.9,755.8L107.6,756.4M94.4,756.6L94.9,755.6L94.8,753.0M88.3,749.5L89.1,748.5L87.9,747.2" fill="none" stroke="#000" stroke-width="1.1" stroke-linecap="round"/><path d="M113.0,757.6 114.0,744.0 120.0,740.0 128.0,738.0 138.0,739.5 146.0,743.0 148.0,752.0 148.0,757.6Z" fill="#004468" stroke="none"/><path d="M142.2,752.9L141.7,754.3L141.5,755.5M145.4,745.1L145.2,744.0L146.8,743.0M123.8,739.1L124.4,741.0L123.5,741.5L122.6,740.5M120.5,751.6L121.5,752.9L121.1,754.7L121.8,755.7M140.8,750.5L140.5,752.9L139.1,754.4L139.4,755.3L141.1,755.3M123.1,757.4L124.8,757.2L126.3,758.4M136.7,739.9L137.0,738.7L137.8,738.7M137.9,750.5L138.5,749.4L139.8,747.9L140.0,746.8L141.1,746.9M134.4,754.7L134.2,753.1L136.0,752.7L137.9,752.0M121.0,746.7L123.2,747.0L123.4,748.8L124.0,751.1L124.7,752.6M123.0,750.4L123.9,751.1L125.7,750.8M138.3,744.7L137.3,742.9L135.3,742.7L134.5,741.2M114.4,751.2L115.3,751.8L116.0,754.1M134.1,755.3L131.9,754.4L130.7,754.3M130.9,755.8L132.6,757.4L134.3,756.1L135.5,756.9L136.6,758.4M126.4,756.0L125.9,757.9L127.1,758.4M138.8,747.7L140.1,747.0L141.9,746.9M132.0,743.3L131.3,744.8L129.6,745.3L128.5,744.3M120.4,744.6L121.0,743.4L122.7,742.5L123.1,740.4L125.2,740.4M122.8,745.1L124.9,745.8L126.0,743.6L124.5,741.7L123.6,741.2M117.4,751.5L116.6,752.2L115.2,754.3L116.2,755.8L116.9,757.2M135.7,748.7L135.9,747.6L134.7,747.3M120.9,749.2L119.6,750.6L118.0,751.7L116.3,752.2M116.6,745.1L114.6,745.4L113.1,745.0M136.5,740.2L137.6,741.9L137.9,743.5M130.3,741.7L129.9,743.1L130.1,744.9L129.7,747.1M145.4,743.1L144.1,744.6L145.0,745.7L145.6,746.7M135.8,743.0L136.4,745.5L138.0,746.3L139.8,748.1M143.5,744.8L143.6,743.3L142.1,742.3L140.2,741.2L139.9,739.4M142.0,755.2L143.0,755.9L144.2,757.5L144.0,758.4M113.2,757.3L112.5,756.0L112.4,755.3M117.5,747.9L115.5,747.7L114.5,748.5M127.7,749.5L128.1,748.0L127.9,746.7L128.0,745.2L129.6,744.4M130.9,740.2L131.4,738.8L131.3,737.7M137.1,754.6L137.9,753.6L137.9,751.9M146.4,756.7L144.1,756.9L142.1,756.8M127.9,755.0L127.6,752.9L126.5,751.0L126.6,748.8L125.9,747.6M127.4,741.7L125.2,741.1L123.1,740.6M113.6,750.1L112.8,749.0M123.3,751.1L123.9,752.6L123.6,754.8L125.3,756.6L125.1,758.4M125.9,749.0L127.2,746.8L127.6,745.6L128.2,744.7L127.7,742.8M125.9,739.6L127.0,738.5L126.9,737.5M136.7,752.0L136.7,750.2L138.9,749.6M130.7,740.8L132.0,742.6L131.7,745.1L130.2,746.3M132.0,750.0L132.0,752.3L133.1,752.7L133.2,753.7L133.0,755.4M143.0,745.1L143.7,744.0L145.7,743.7M142.3,747.9L140.8,749.7L139.8,750.3M114.0,747.5L112.9,748.5M123.6,752.3L122.6,750.0L122.1,748.6L121.1,748.7L120.6,747.7M115.1,754.6L116.3,755.5L117.4,756.0M128.4,757.1L126.3,757.3L125.2,758.4M119.7,757.3L118.9,755.3L117.0,755.4M140.0,753.4L138.1,753.3L136.7,755.4L136.9,757.6L137.3,758.4M129.6,748.5L131.3,749.4L132.5,749.3L132.4,746.8L131.7,744.9M131.7,750.5L132.6,749.6L133.9,747.5L135.3,748.2M122.1,741.7L123.0,742.4L124.9,743.3L125.7,742.0L127.7,742.2M130.8,742.7L130.1,740.3L130.7,739.1L132.8,739.0L135.0,740.0M117.6,753.0L117.9,752.0L119.1,752.2M133.0,749.0L132.0,749.2L130.4,749.2L129.5,747.1M126.6,743.2L126.7,745.0L126.6,746.0L126.4,747.3M135.7,750.0L136.8,751.8L138.0,752.7L139.9,753.4M138.5,747.8L136.0,747.3L134.6,747.8L134.7,748.9L133.9,750.5M114.5,752.2L114.1,749.8L114.8,749.0L115.9,748.9L117.7,747.9M137.5,755.3L135.2,754.9L134.0,753.0L133.5,751.1M145.3,753.8L143.8,754.5L141.7,755.3L141.5,757.0M131.7,750.2L132.7,749.9L133.8,749.1L135.3,750.6M127.5,754.3L128.4,755.7L129.5,757.2L129.6,758.4M121.5,745.2L119.6,744.5L119.5,743.4M130.1,748.6L128.3,750.0L128.0,752.4L128.9,753.3L128.1,755.2M139.9,746.7L142.0,747.6L141.8,748.9L140.6,749.4M136.2,743.3L135.4,742.6L133.8,741.3L131.3,741.2M116.7,756.3L117.2,758.4M137.8,752.7L138.9,750.9L139.9,750.0L139.6,747.7L140.4,746.6M119.9,754.4L118.6,754.7L116.4,753.6L116.4,751.8M116.0,750.7L118.1,751.8L119.1,754.0L120.3,753.9M126.1,743.2L126.1,742.1L124.5,740.5L123.1,740.2L121.5,739.8" fill="none" stroke="#000" stroke-width="1.1" stroke-linecap="round"/><path d="M197.2,728.5 201.0,726.0 203.0,735.0 215.3,737.0 221.5,742.0 227.0,741.0 231.0,750.0 241.0,755.0 241.2,758.2 236.0,757.0 229.5,752.0 225.0,745.0 219.0,745.5 214.0,740.5 199.8,738.0Z" fill="#004468" stroke="none"/><path d="M200.7,730.8L201.8,730.5L202.7,730.1M219.6,741.0L221.9,742.3L222.9,742.7L224.6,741.4M222.9,743.6L222.1,741.2L222.2,741.1M240.0,755.4L241.0,757.3L242.0,757.5M224.9,741.7L223.5,742.5L222.1,742.1L222.2,741.1M204.5,736.4L205.6,736.7L206.7,738.3L206.6,740.0M212.1,738.0L210.9,738.1L209.9,737.3M222.3,743.3L224.1,743.2L225.9,744.0L227.1,743.9M213.1,740.1L211.1,739.6L211.2,738.5M233.3,753.3L232.3,751.7L230.6,750.8L229.4,749.6L228.2,749.3M239.2,756.2L239.4,758.5L239.3,758.6M206.8,737.5L208.9,736.8L209.3,735.2M200.6,732.1L199.2,732.7L198.9,734.8L199.6,736.2M200.8,729.6L199.9,730.3L198.4,728.8M212.1,738.0L211.3,739.0L210.4,740.7M228.5,747.8L228.2,746.6L228.3,745.5M209.4,737.7L211.2,737.9L212.3,737.2L211.9,736.3M235.5,753.4L236.4,752.2L236.5,751.9M230.9,750.1L232.0,751.1L232.1,752.5M202.8,736.0L202.0,736.7L200.5,737.1L200.2,738.9M217.9,740.4L215.8,741.5L214.7,742.4M240.3,756.1L240.1,757.7L239.8,758.7" fill="none" stroke="#000" stroke-width="1.1" stroke-linecap="round"/><path d="M342.7,646.0 350.0,644.4 358.0,646.0 366.2,650.0 362.0,657.0 350.0,658.8 342.7,657.0Z" fill="#004468" stroke="none"/><path d="M355.5,645.5L356.3,646.4L355.9,647.5L356.9,648.8L356.3,650.4M345.8,651.5L346.0,653.6L347.1,653.9L348.6,654.7L349.7,655.3M363.5,652.2L361.6,650.6L360.6,650.9L358.9,652.1L358.1,653.4M356.2,655.8L357.4,654.3L356.9,653.4M347.5,652.6L346.0,653.2L346.4,655.5L347.6,655.5L349.8,655.9M361.8,656.0L363.6,655.4L364.2,654.3L364.9,653.7M358.8,655.4L359.0,657.4L357.5,658.3L357.5,658.5M348.7,653.1L348.3,651.5L348.0,649.9L349.4,648.9M352.8,647.7L354.2,648.6L355.2,648.2L355.5,646.2M357.7,657.4L356.5,658.6M362.1,656.6L362.1,654.4L362.0,652.2M357.5,654.9L356.4,656.3L356.8,657.5L355.6,658.0M365.7,650.4L364.6,650.2L362.6,651.2M354.7,654.1L357.1,654.1L359.1,654.9L360.0,657.1M352.3,653.6L351.1,651.6L349.1,650.9L346.8,651.5M349.5,645.8L348.5,645.0L348.7,643.9M361.0,649.7L362.4,647.8L362.9,647.5" fill="none" stroke="#000" stroke-width="1.1" stroke-linecap="round"/><path d="M802.2,629.2L804.3,628.0L805.5,627.2M801.8,599.1L803.4,600.8L804.6,602.3M801.0,627.6L802.4,627.9L803.7,628.8L804.7,629.3L805.0,630.3M801.0,585.5L802.5,583.4L803.2,581.1L802.3,579.7M794.7,582.4L795.7,580.2L797.2,578.9L798.3,577.0M798.9,615.9L799.3,614.2L801.2,614.1L802.3,614.2L804.7,613.1M795.9,598.8L796.0,596.5L793.5,595.9M796.9,625.3L799.2,626.3L801.7,626.3L803.4,625.7L804.5,626.5M799.8,565.3L798.5,567.1L799.5,568.1L800.5,569.7M805.0,652.2L803.9,650.3L801.9,649.6L800.4,650.8M799.1,624.6L800.1,624.3L800.0,623.1M793.8,600.5L794.9,601.1L796.6,600.2M800.4,629.8L801.3,630.3L801.4,632.3L800.9,633.8M797.7,618.9L799.0,621.0L799.8,622.2M795.9,637.9L794.8,639.0M792.4,605.0L792.9,602.9L794.7,601.9L794.7,600.1M797.3,614.5L796.8,615.6L798.5,616.8L797.8,619.2L797.3,620.7M802.3,573.7L802.4,575.6L802.4,576.9L803.0,578.6M803.4,639.4L804.2,641.8L806.5,642.6M796.0,639.6L795.7,640.6L796.0,641.6M800.9,638.5L799.6,639.8L799.9,641.3L798.9,641.6L798.2,640.4M801.7,597.6L801.6,595.8L800.4,595.7L798.9,596.6M805.9,650.5L806.1,651.6L806.8,651.7M804.9,582.5L805.3,580.2L803.9,579.1M804.5,564.1L802.6,562.9L802.4,561.3M794.8,600.1L794.9,602.5L796.0,604.6L796.2,606.0M802.7,656.3L803.8,656.5L804.8,655.9M797.3,632.6L799.7,631.8L801.2,631.2L800.6,629.0M793.3,614.2L795.3,612.8L796.7,612.2L798.3,611.6L799.1,612.4M805.8,595.4L804.1,596.4L802.3,596.4M794.3,600.9L795.2,601.9L795.4,604.2L795.5,605.4M795.9,625.5L797.8,625.2L798.9,625.4L800.3,624.5L802.3,625.2M803.9,643.2L803.5,641.0L802.7,638.7L804.3,637.5L805.1,638.3M805.3,610.3L803.7,610.0L803.8,609.0L804.6,607.4L805.9,605.9M792.6,590.1L791.1,591.5L789.9,592.3L788.3,591.4M804.1,597.3L804.9,599.6L806.2,599.6L806.8,599.8M800.9,629.2L803.1,628.7L804.1,628.1L805.3,627.0L806.2,627.6M790.7,595.6L791.9,597.7L793.2,597.4M794.1,627.2L792.3,625.5L791.1,625.5L790.0,627.0L789.9,627.0M802.5,621.9L802.9,620.7L801.5,620.1L800.0,621.1M792.5,619.4L793.7,619.8L794.4,620.7M795.2,586.5L794.0,586.9L792.9,585.1L792.0,583.0M802.3,565.1L800.5,567.0L799.6,568.8M795.2,579.7L796.7,578.8L796.1,577.3L794.7,577.4M801.2,562.9L802.7,561.5L804.5,561.2L804.9,560.2M801.0,593.7L802.7,592.0L804.8,591.7L805.5,590.9L804.1,589.6M803.0,569.6L805.0,568.8L806.1,568.4L806.8,567.8M794.0,634.8L792.9,634.4M791.7,631.5L792.4,630.4L793.8,629.6M803.5,584.4L801.8,586.0L802.7,587.5L801.3,588.9M796.1,598.1L795.3,598.9L794.3,600.1M802.4,592.9L804.1,593.4L804.4,595.3L806.1,597.2L806.7,598.0M801.3,581.1L802.3,580.7L803.9,581.3L804.6,583.3M804.9,618.8L805.6,620.9L806.8,621.5M796.0,628.0L798.5,628.6L799.4,626.4L800.3,624.3L802.3,624.2M802.3,617.0L800.5,615.9L798.5,615.7L797.6,617.2M798.0,598.1L798.1,599.5L799.8,600.8L800.5,601.8M793.6,609.7L793.7,608.7L793.6,607.5L793.9,605.2M798.5,637.8L798.4,636.0L797.8,634.0L798.7,632.3M798.6,566.8L800.4,566.3L802.6,566.7M796.7,599.3L796.9,598.3L798.5,597.1L799.7,598.4L800.8,599.6M799.9,621.8L798.2,623.3L796.9,622.8M798.0,588.3L796.8,588.4L794.6,588.2M797.1,594.2L797.0,592.9L794.9,591.9L795.3,590.7L796.0,589.3M791.1,624.6L792.0,625.6L791.4,627.5L790.4,628.0" fill="none" stroke="#000" stroke-width="1.1" stroke-linecap="round"/><path d="M806,562.0L803.1,561.7L800.3,563.1M806,564.4L803.4,565.0L800.8,564.3M802.9,564.4l-2.7,1.3M806,566.5L804.4,566.8L802.9,566.5M804.1,566.5l-2.6,2.9M806,569.6L802.4,569.2L798.9,570.7M806,572.4L800.6,571.0L795.2,572.6M799.5,572.4l-0.3,1.6M806,575.5L800.1,575.9L794.3,576.6M806,578.1L800.5,579.6L795.0,576.8M799.4,578.1l-1.6,0.2M806,581.4L803.7,580.4L801.5,580.3M803.3,581.4l-1.5,-1.0M806,584.2L802.0,582.8L797.9,583.2M801.1,584.2l-1.1,-1.6M806,586.5L799.4,585.8L792.9,584.4M806,590.0L799.0,590.2L792.1,589.8M806,593.1L798.5,593.2L790.9,593.0M806,596.1L802.0,595.7L797.9,597.9M801.2,596.1l0.9,-1.1M806,599.0L800.0,599.2L794.0,597.4M798.8,599.0l-1.9,0.4M806,602.1L800.2,601.1L794.3,601.9M799.0,602.1l-2.8,2.2M806,605.4L800.4,604.0L794.7,607.5M799.2,605.4l-2.2,-0.0M806,607.6L797.8,608.6L789.6,606.4M796.2,607.6l0.8,-0.8M806,609.5L799.4,608.7L792.8,611.8M806,612.5L800.6,613.2L795.1,610.5M799.5,612.5l-2.4,0.2M806,615.3L802.9,614.6L799.7,613.0M802.2,615.3l0.9,1.1M806,617.2L803.1,618.5L800.2,616.1M806,620.7L798.4,620.5L790.9,618.4M796.9,620.7l-2.0,0.3M806,623.3L800.4,623.6L794.9,621.3M799.3,623.3l-2.5,-2.0M806,625.2L800.4,625.6L794.8,625.2M799.3,625.2l-2.2,0.5M806,628.7L802.5,627.4L799.0,627.6M801.8,628.7l-2.2,-2.9M806,630.7L799.4,631.3L792.7,632.6M806,634.0L801.9,633.6L797.9,635.1M801.1,634.0l-1.8,2.8M806,637.0L804.0,638.3L801.9,637.9M806,639.9L799.3,640.1L792.6,638.8M797.9,639.9l-0.4,-0.2M806,642.2L800.7,641.6L795.4,640.9M806,645.4L804.3,644.3L802.6,643.8M806,648.2L802.3,648.7L798.6,648.3M806,651.5L801.4,650.6L796.9,649.2M800.5,651.5l-0.5,0.4M806,654.8L804.2,655.8L802.4,653.7M803.8,654.8l0.9,1.9" fill="none" stroke="#000" stroke-width="1.2" stroke-linecap="round"/><path d="M282.0,664.0 292.0,663.0 304.0,661.8M314.0,663.3 322.0,662.0 333.0,660.8M229.5,662.6 234.7,664.5M242.5,664.5 246.3,662.6M258.0,661.3 270.0,662.6M274.0,663.5 279.0,664.0M248.9,678.1 252.8,683.3 254.7,691.0 252.8,698.8 248.9,706.5 243.8,714.3 238.6,716.9M236.0,722.0 233.4,724.6M228.2,727.2 223.0,731.0M241.2,702.7 242.5,698.8M246.3,696.2 250.2,693.0M371.4,653.5 384.5,651.0 405.4,649.0 426.3,650.4 447.0,655.0M478.5,671.0 494.0,683.0 504.6,693.0" fill="none" stroke="#000" stroke-width="1"/><path d="M785.3,639.2 784.6,640.3 783.8,641.2 783.2,641.9 783.0,643.1 782.9,645.0 783.9,645.9 784.2,646.3 784.0,647.2 783.8,649.2 783.0,651.5 782.7,651.7 783.6,652.2 785.8,654.0 787.3,655.0 787.3,655.0 786.6,656.6 786.0,659.1 785.2,659.2 785.5,659.8 786.1,662.2 786.6,663.8 786.5,663.9 785.0,665.2 783.7,666.6 783.3,667.4 783.1,668.2 783.1,669.3 783.1,671.0 783.1,672.6 783.5,673.3 784.0,673.7 784.4,674.5 784.9,675.8 785.4,677.5 785.7,679.3 785.3,679.7 785.7,680.0 786.9,681.2 788.3,682.9 789.4,684.0 789.7,684.4 789.4,685.2 789.0,687.1 788.6,689.1 788.3,690.0 788.8,690.4 790.4,692.0 791.7,693.2 791.8,693.5 791.4,695.0 790.8,697.3 790.7,698.3 790.9,698.8 791.6,699.6 792.9,701.1 794.1,702.6 794.9,703.4 795.0,704.6 794.2,705.5 792.7,706.7 791.4,707.9 790.6,708.7 790.2,709.3 790.1,710.3 789.9,711.9 789.7,713.7 789.5,714.9 789.3,715.6 788.7,716.3 787.5,717.4 786.3,718.6 785.3,719.4 785.0,720.0 785.0,721.4 785.4,723.3 785.6,724.5 785.3,725.1 784.6,726.4 783.9,727.9 783.8,728.9 783.9,729.8" fill="none" stroke="#000" stroke-width="2.6" stroke-linejoin="round"/><path d="M785.3,639.2 784.6,640.3 783.8,641.2 783.2,641.9 783.0,643.1 782.9,645.0 783.9,645.9 784.2,646.3 784.0,647.2 783.8,649.2 783.0,651.5 782.7,651.7 783.6,652.2 785.8,654.0 787.3,655.0 787.3,655.0 786.6,656.6 786.0,659.1 785.2,659.2 785.5,659.8 786.1,662.2 786.6,663.8 786.5,663.9 785.0,665.2 783.7,666.6 783.3,667.4 783.1,668.2 783.1,669.3 783.1,671.0 783.1,672.6 783.5,673.3 784.0,673.7 784.4,674.5 784.9,675.8 785.4,677.5 785.7,679.3 785.3,679.7 785.7,680.0 786.9,681.2 788.3,682.9 789.4,684.0 789.7,684.4 789.4,685.2 789.0,687.1 788.6,689.1 788.3,690.0 788.8,690.4 790.4,692.0 791.7,693.2 791.8,693.5 791.4,695.0 790.8,697.3 790.7,698.3 790.9,698.8 791.6,699.6 792.9,701.1 794.1,702.6 794.9,703.4 795.0,704.6 794.2,705.5 792.7,706.7 791.4,707.9 790.6,708.7 790.2,709.3 790.1,710.3 789.9,711.9 789.7,713.7 789.5,714.9 789.3,715.6 788.7,716.3 787.5,717.4 786.3,718.6 785.3,719.4 785.0,720.0 785.0,721.4 785.4,723.3 785.6,724.5 785.3,725.1 784.6,726.4 783.9,727.9 783.8,728.9 783.9,729.8" fill="none" stroke="#005a8a" stroke-width="1.0" stroke-linejoin="round"/><path d="M6.0,105.1 155.0,105.1 158.0,108.0 161.0,115.7 160.0,123.0 152.0,132.0 145.0,141.0 138.0,149.0 187.0,149.0M202.0,6.0 204.4,12.3 208.0,19.7 208.0,27.0 202.0,32.0 204.4,39.4 209.3,46.8 213.0,56.6 219.0,60.3 222.8,56.6 226.5,56.6M304.6,6.0 305.0,7.1 305.3,8.3 305.7,9.4 306.0,10.6 306.4,11.7 306.7,12.9 307.1,14.0 307.4,15.2 307.8,16.3 307.5,17.2 306.4,17.6 305.3,18.0 304.2,18.5 303.1,18.9 301.9,19.3 300.8,19.8 299.7,20.2 298.6,20.6 297.5,21.1 296.3,21.5 295.2,21.9 294.1,22.2 292.9,22.4 291.7,22.6 290.5,22.8 289.3,23.0 288.1,23.2 287.0,23.4 285.8,23.6 284.6,23.8 283.4,24.0 282.2,24.2 281.0,24.4 279.9,24.7 279.5,25.8 279.0,26.9 278.6,28.1 278.1,29.2 277.7,30.3 277.2,31.4 277.2,32.5 277.6,33.7 278.0,34.8 278.4,35.9 278.8,37.1 279.2,38.2 279.6,39.3 279.9,40.5 280.6,41.5 281.3,42.5 281.9,43.5 282.5,44.5 282.1,45.6 281.8,46.8 281.5,47.9 281.1,49.1 280.8,50.2 280.5,51.4 280.1,52.5 279.3,52.9 278.1,52.7 276.9,52.6 275.7,52.4 274.5,52.2 273.3,52.0 272.2,51.9 271.0,51.7 269.9,51.2 268.8,50.7 267.7,50.1 266.7,49.6 265.6,49.1 264.5,48.5 263.4,48.0 262.4,47.5 261.3,46.9 260.2,46.4 259.1,45.9 258.0,45.4 256.9,45.0 255.8,44.5 254.7,44.1 253.5,43.7 252.4,43.3 251.3,42.9 250.2,42.4 249.0,42.0 248.0,41.5 246.9,41.0 245.8,40.4 244.8,39.9 243.7,39.4 242.5,39.8 241.4,40.2 240.3,40.6 239.1,41.0 238.0,41.4 236.9,41.7 235.9,42.4 235.0,43.2 234.2,44.1 233.3,44.9 232.5,45.8 231.6,46.6 230.8,47.5 229.9,48.3 229.1,49.1 228.6,50.3 228.3,51.4 227.9,52.5 227.5,53.7 227.1,54.8 226.7,56.0 226.8,57.0 227.5,58.0 228.1,59.0 228.8,60.0 229.5,61.0 230.1,62.0 230.8,63.0 231.5,64.0 230.8,65.0 230.2,66.0 229.5,67.0 228.8,68.0 228.1,69.0 227.5,70.0 226.8,70.9 226.8,72.0 227.3,73.1 227.9,74.1 228.4,75.2 228.9,76.3 229.5,77.4 230.0,78.4 229.9,79.5 229.3,80.6 228.8,81.7 228.3,82.7 227.8,83.8 227.5,85.0 227.2,86.2 227.0,87.3 226.7,88.5 226.5,89.7 226.2,90.8 225.9,92.0 225.7,93.2 225.4,94.4 224.7,95.2 223.7,96.0 222.8,96.7 221.8,97.4 220.9,98.1 220.0,98.1 219.1,97.2 218.3,96.4 217.4,95.5 216.6,94.7 215.7,93.8 214.9,93.0 214.1,92.5 213.3,93.4 212.6,94.4 211.8,95.3 211.1,96.3 210.3,97.2 209.6,98.1 209.0,99.2 206.5,100.7 205.7,101.0 205.9,101.0 206.4,102.2 206.9,104.6 205.7,107.1 205.1,108.4 205.2,108.7 201.8,108.7 202.1,106.4 203.2,103.8 204.1,101.9 204.7,101.4 204.5,101.4 201.9,99.7 200.7,100.2 199.0,102.1 198.4,103.0 198.9,102.7 198.4,100.3 197.8,102.7 196.8,106.1 195.7,107.8 195.1,107.6 195.5,107.1 198.4,106.5 198.7,110.0 198.9,113.3 199.6,114.7 200.1,114.3 199.4,113.8 196.9,114.4 193.6,116.0 192.8,119.1 191.9,119.5 192.1,118.8 193.8,119.3 196.8,121.4 199.5,123.1 197.4,126.8 197.9,126.4 196.8,125.6 193.5,125.0 190.1,124.4 188.7,123.5 189.4,123.1 187.3,127.2 190.8,128.3 194.1,129.4 195.2,128.9 194.6,128.5 193.9,130.3 193.7,134.0 191.6,134.8 192.0,132.7 192.6,134.7 192.5,138.9 193.3,140.3 193.3,139.5 190.1,139.9 187.0,140.5 186.0,141.3 186.1,141.7 186.8,142.8 187.7,145.2 188.6,147.7 189.3,148.9 189.4,148.5 188.6,148.2 188.2,150.3 187.6,153.7 186.7,156.1 185.9,156.3 187.6,151.9 188.0,153.5 187.6,156.9 187.1,160.4 187.4,162.3 188.1,162.2 187.2,157.7 186.3,160.0 185.7,163.4 185.0,165.9 184.3,164.1 186.2,163.2 185.0,165.8 183.5,168.6 183.5,169.8 183.7,169.4 181.7,168.7 178.2,168.2 176.4,167.5 176.6,167.1 176.4,168.3 175.4,171.4 174.5,174.2 174.9,175.0 174.8,174.5 172.4,174.2 169.0,174.2 169.3,177.9 169.0,178.3 169.3,178.1 170.8,178.3 173.4,179.1 176.1,180.0 177.4,182.2 175.9,183.9 175.5,183.6 173.7,183.6 171.0,183.9 168.4,183.8 168.6,183.4 168.5,185.4 168.4,188.3 169.8,186.7 169.2,187.4 168.9,191.4 166.5,192.3 167.3,187.5 168.2,187.8 167.4,190.1 165.1,193.6 163.6,196.4 164.1,197.4 164.8,196.8 163.1,195.5 159.5,194.8 157.8,197.2 156.9,197.2 157.5,196.9 159.2,198.7 159.4,202.0 159.3,204.0 159.8,203.9 158.8,203.3 155.6,203.2 154.2,206.6 153.7,207.7 153.4,207.0 155.5,206.8 159.3,207.8 162.3,208.1 163.1,208.0 163.0,210.1 160.5,211.3 157.4,213.6 155.3,214.1 155.7,213.2 157.2,215.2 159.7,218.1 161.5,217.8 160.8,217.2 159.7,219.8 158.9,223.9 158.0,225.1 157.7,224.5 161.6,222.6 159.5,225.5 157.7,228.0 157.9,229.0 158.3,228.5 156.4,227.3 153.2,226.2 150.9,225.7 150.6,226.1 151.1,227.9 151.1,231.3 151.7,232.7 151.6,232.3 149.3,232.9 145.1,234.0 144.4,232.0 145.6,231.8 145.5,234.9 144.3,239.4 144.9,241.4 145.5,235.4 144.2,237.4 144.3,241.8 143.8,244.1 143.1,243.7 144.6,243.2 148.3,244.4 148.3,247.8 149.2,247.8 148.2,247.1 144.8,247.9 142.2,248.6 141.6,248.4 142.7,248.7 141.5,250.9 139.8,253.1 139.7,253.9 139.5,253.4 137.2,252.7 133.7,250.9 137.9,250.0 137.1,251.3 132.4,250.3 129.2,250.3 130.0,251.5 132.6,248.3 128.7,249.8 127.5,250.0 127.6,249.7 128.1,250.7 128.3,253.4 128.5,256.4 128.9,258.0 129.5,255.8 128.8,255.9 128.4,258.1 128.0,261.5 127.2,263.8 126.5,263.8 127.0,263.3 130.4,262.8 128.7,266.1 127.8,268.4 128.3,269.0 128.4,268.3 126.1,267.5 122.3,266.8 120.3,270.5 119.4,270.6 119.5,269.9 121.0,270.4 123.6,272.8 126.3,275.3 128.1,276.2 128.5,276.5 127.7,276.5 125.7,277.9 122.9,280.6 120.0,282.5 119.3,281.5 120.6,281.2 122.7,284.5 125.0,288.2 126.5,288.5 126.2,287.3 123.6,288.6 120.4,291.3 118.7,289.5 118.5,288.9 118.8,289.2 118.3,290.7 116.7,293.3 115.1,295.9 114.6,297.4 116.2,296.6 115.8,293.7 114.9,295.5 114.0,298.6 111.7,297.5 110.8,296.9 111.1,296.7 110.9,297.8 109.6,300.1 107.8,302.7 107.0,304.5 107.3,304.9 107.5,304.3 105.7,304.0 102.7,304.0 100.0,303.8 99.6,303.2 99.9,303.8 99.1,306.3 100.7,307.4 101.8,307.2 101.5,307.2 101.3,309.3 101.5,312.5 101.6,314.2 101.0,313.6 102.3,311.6 101.7,313.2 100.4,315.5 99.3,317.5 99.1,318.6 99.6,317.6 98.8,316.4 98.4,318.7 97.7,321.9 96.0,323.5 96.0,322.1 99.2,323.0 97.9,327.1 99.2,327.4 98.1,325.9 93.5,324.9 91.5,324.3 91.4,323.8 91.9,324.3 91.0,326.2 89.1,328.9 87.9,331.0 88.0,331.8 89.0,328.2 87.5,328.4 87.7,331.5 88.1,333.7 88.0,334.9 88.1,335.0 89.0,335.1 90.5,335.5 90.0,338.0 89.9,339.7 90.0,340.1 89.5,340.2 88.0,340.7 85.9,342.1 86.0,344.8 85.5,344.9 86.6,344.6 89.8,345.5 92.4,345.9 92.6,345.5 91.4,349.2 88.7,347.2 86.8,345.8 86.8,345.3 86.5,346.0 84.4,347.5 82.0,349.1 85.0,348.1 84.8,348.0 83.9,349.7 83.0,352.8 81.7,354.3 81.8,353.6 84.4,355.1 85.7,358.6 83.7,358.9 83.5,357.6 80.5,354.2 79.0,352.1 79.4,351.3 80.0,351.8 78.5,353.0 76.4,355.9 78.6,358.7 80.1,359.6 80.4,358.9 79.5,358.7 77.6,360.7 75.5,363.7 74.0,365.5 74.4,367.4 74.7,367.2 76.5,367.2 79.7,367.8 82.4,368.2 83.3,367.8 83.4,372.0 82.0,371.6 78.9,371.7 74.8,371.2 74.7,369.9 75.9,370.6 75.3,374.9 78.7,372.9 78.3,371.6 77.4,372.8 79.4,376.7 81.1,379.7 80.7,380.7 80.3,380.1 82.4,378.9 86.4,378.8 86.2,382.3 87.0,382.1 86.2,381.5 83.2,382.4 80.3,383.8 78.9,384.6 79.9,385.6 83.2,386.7 85.6,387.1 85.3,386.6 84.8,389.0 84.1,393.4 83.4,394.3 82.7,391.2 83.8,391.9 85.4,394.7 87.1,397.9 88.4,399.4 88.9,399.0 88.4,399.4 85.8,401.0 82.3,401.2 79.7,401.2 78.9,400.7 79.3,400.6 79.4,402.0 78.7,405.1 81.7,406.1 83.5,406.2 83.7,405.8 83.2,406.1 83.1,408.3 83.2,411.5 80.2,410.9 80.0,410.1 80.7,410.6 80.5,413.8 80.1,417.4 80.6,418.6 80.9,418.0 78.7,417.8 75.5,419.3 77.2,421.5 77.1,422.1 77.3,421.9 78.8,421.6 81.6,421.6 84.2,421.5 85.4,421.2 85.4,421.0 85.4,421.9 86.7,424.7 84.1,426.1 82.3,426.6 82.1,426.3 82.6,427.0 82.8,429.8 82.9,432.7 83.3,433.9 83.4,433.6 81.9,433.9 80.5,435.4 81.0,437.4 81.1,438.3 81.3,438.4 82.5,438.5 84.8,439.2 87.0,439.8 87.3,442.4 87.0,442.8 86.1,442.9 84.0,443.6 80.6,444.5 78.4,444.4 78.5,443.4 79.4,444.0 79.3,448.4 83.3,447.3 85.2,446.0 84.7,445.3 84.1,446.1 85.5,448.9 87.7,451.9 87.9,454.0 87.2,453.1 90.7,451.5 92.4,454.8 93.3,454.1 90.9,454.1 86.3,455.9 84.6,455.8 85.0,455.0 86.0,456.1 86.7,459.7 87.3,463.3 88.3,464.5 87.6,460.0 85.5,460.6 87.4,463.8 88.9,466.0 89.2,467.0 89.1,466.8 90.5,466.2 93.4,465.5 95.8,464.9 97.3,467.3 96.9,467.4 95.3,468.7 92.8,471.3 90.2,472.7 89.9,471.6 91.0,475.5 95.0,473.4 97.3,470.2 96.7,469.1 96.0,470.0 99.3,471.6 97.9,474.0 96.7,474.8 96.4,474.9 96.6,475.4 97.0,477.1 96.9,479.6 95.9,481.5 95.6,482.5 95.5,482.5 94.5,482.3 92.3,482.3 89.7,482.5 88.2,482.0 88.6,482.1 87.8,484.5 86.5,487.2 86.8,487.7 85.9,487.1 82.5,486.5 80.4,485.3 81.3,485.2 80.2,488.2 83.2,488.9 83.3,487.9 82.4,489.5 82.4,494.3 81.3,496.0 80.9,494.7 84.7,494.8 89.2,496.0 89.0,498.8 88.1,497.7 83.9,498.8 81.8,499.7 81.0,499.7 81.2,499.9 81.4,501.5 82.1,503.7 84.3,504.0 85.1,503.9 84.9,504.2 86.1,506.5 83.3,507.4 80.8,507.0 80.4,506.5 80.7,506.9 79.9,509.1 78.5,512.0 78.0,513.8 78.4,513.8 77.9,512.8 75.2,513.6 72.5,514.4 71.3,514.4 71.6,514.3 71.8,516.0 71.2,519.0 70.0,520.9 70.1,521.4 69.7,520.9 67.3,520.3 64.4,519.7 64.4,523.2 64.5,522.7 67.2,522.9 70.3,523.4 70.9,522.9 70.4,523.6 70.9,526.9 68.9,524.5 69.3,523.5 69.8,524.4 67.6,527.0 64.9,529.9 64.9,531.2 65.6,530.7 64.1,528.0 61.4,529.8 60.2,530.8 60.0,530.8 60.5,531.6 61.2,533.9 62.0,536.4 62.5,537.3 62.5,537.4 60.7,538.8 57.7,538.3 54.7,537.2 54.2,536.2 55.0,536.2 52.0,539.9 55.8,541.2 59.2,541.1 60.2,540.3 59.4,539.9 59.1,541.6 60.0,545.2 57.1,545.2 55.7,544.7 56.1,544.1 56.6,545.2 56.1,548.3 55.3,551.9 55.4,553.9 56.1,553.9 55.6,553.2 53.0,553.1 49.5,553.5 47.3,552.9 46.9,556.2 50.4,556.0 53.9,555.7 53.6,554.8 53.2,556.9 54.1,561.6 52.6,562.4 55.3,557.3 53.2,561.3 52.0,564.5 53.3,564.3 51.3,562.6 46.8,560.8 44.8,564.0 45.6,563.9 49.2,564.7 53.1,565.7 53.7,564.6 52.5,565.2 51.9,569.4 50.6,572.2 52.5,566.5 52.3,567.9 49.1,570.6 46.9,572.9 47.8,573.5 47.5,572.0 44.4,569.6 43.3,572.1 43.0,572.3 43.9,572.5 46.2,574.1 48.2,575.4 48.7,575.3 48.2,575.9 47.7,578.5 46.9,581.3 46.2,581.9 46.6,581.4 48.6,582.0 48.1,585.3 48.3,586.7 48.6,586.4 46.2,584.8 46.6,588.1 47.0,590.1 46.8,590.8 46.9,590.6 48.3,590.7 49.9,591.0 48.6,593.1 47.9,593.9 47.4,593.8 46.2,593.6 44.7,593.9 44.3,594.0M206.8,105.1 310.8,105.1 309.5,89.5 324.0,92.3 420.0,92.0 500.0,93.3 560.0,94.8 636.0,96.0 786.5,94.8 806.0,98.0M142.8,238.2 588.3,239.0M786.5,94.8 782.8,103.4 784.0,110.8 779.0,115.7 781.6,119.4 771.8,120.7 764.4,130.5 759.5,139.0 749.6,139.0 742.2,136.7 732.4,140.4 727.4,147.7 717.6,145.3 712.7,151.4 702.8,150.2 694.2,155.0 691.7,162.5 680.7,170.0 670.8,173.6 658.5,179.8 651.0,186.0 633.9,188.4 624.0,190.8 613.0,200.0 609.2,211.0 597.0,214.8 589.5,218.5 588.3,239.0M588.3,239.0 669.6,237.4 695.4,232.0 717.6,224.6 732.4,221.0 806.0,223.4M669.6,237.4 669.4,238.6 669.0,239.8 668.9,240.8 669.0,242.1 669.3,243.7 669.4,244.7 669.1,245.5 668.5,246.9 667.5,248.3 666.7,248.6 666.6,249.4 666.3,251.4 666.1,252.9 665.9,253.3 664.6,254.1 662.6,255.1 661.7,255.4 661.8,256.0 661.6,258.2 661.9,259.9 662.4,260.1 661.8,261.0 660.7,263.0 660.0,264.5 660.8,265.0 663.0,265.6 664.5,265.9 664.6,266.4 665.1,268.5 665.6,270.0 665.9,270.3 667.5,270.8 669.4,271.4 670.0,271.6 670.3,272.7 671.2,274.8 671.3,275.8 672.7,275.6 675.1,275.6 675.3,275.6 676.2,277.7 677.0,278.9 677.5,279.4 678.5,279.7 680.2,280.0 681.8,280.4 682.6,280.6 683.1,281.3 684.1,282.7 684.9,284.7 685.7,284.9 687.4,283.7 689.2,282.5 689.3,282.5 691.0,283.6 692.5,284.2 693.2,284.3 694.6,284.1 695.6,285.0 695.7,285.8 695.7,288.1 695.4,288.7 696.8,289.4 698.8,290.5 698.8,290.7 698.6,293.0 698.7,294.4 698.9,295.0 699.9,295.8 701.5,296.9 702.5,297.6 702.8,298.1 703.0,299.7 703.5,301.3 703.8,302.2 704.5,302.9 705.6,304.0 706.3,305.2 706.5,306.0 706.4,307.3 706.1,309.2 705.9,310.1 706.4,310.7 707.5,312.2 708.6,313.4 709.0,313.6 709.2,314.8 709.6,316.8 709.7,317.9 710.3,318.3 711.9,319.3 713.2,320.1 713.6,320.5 713.8,322.0 714.2,323.8 714.4,324.6 715.3,325.2 716.9,326.3 717.7,326.8 717.9,327.6 718.7,329.4 719.0,330.4 720.2,330.6 722.3,331.0 722.6,331.2 723.3,333.1 723.8,334.6 724.2,334.6 726.5,335.0 727.9,335.1 728.0,335.8 728.9,338.0 729.3,339.3 729.7,339.5 731.1,339.8 733.2,340.3 734.4,340.5 734.7,340.8 735.4,342.3 736.4,343.9 736.9,344.7 737.8,345.0 739.6,345.4 740.8,345.7 741.3,346.3 742.1,347.8 742.2,349.4 742.5,349.8 744.0,350.7 745.6,351.7 745.9,352.1 746.0,353.6 746.0,355.9 745.9,356.4 746.8,356.8 748.9,358.0 750.3,358.7 750.1,358.8 750.5,360.5 751.4,362.3 751.6,362.8 753.3,363.0 755.1,363.3 755.3,363.7 756.1,365.8 756.5,367.1 757.0,367.1 759.1,367.5 760.9,367.8 761.2,368.0 761.7,369.4 762.1,371.6 762.1,372.5 762.7,372.8 764.4,373.7 766.1,374.7 766.8,375.1 766.9,375.8 766.8,377.8 765.6,379.4 765.2,379.9 765.5,380.8 766.2,382.9 766.8,384.3 766.5,383.9 766.6,385.4 767.3,387.5 767.5,388.3 768.2,388.4 770.3,389.1 772.0,389.5 772.3,389.6 772.7,390.9 773.5,393.0 773.9,394.1 774.4,394.3 776.2,394.7 778.1,395.2 778.8,395.3 779.7,396.5 777.9,398.0 776.3,398.4 776.0,399.1 777.9,400.8 779.3,401.1 779.2,401.7 779.5,404.1 779.7,405.3 780.3,405.6 782.4,406.0 783.8,405.8 784.2,406.1 785.5,407.7 786.7,409.2 787.0,409.6 787.9,409.4 790.2,409.2 791.9,408.9 792.3,408.9 793.0,409.9 794.1,411.5 794.4,412.8 794.8,413.6 795.5,414.4 796.7,415.5 797.7,416.5 798.2,417.2 798.5,418.2 798.8,419.7 798.4,421.2 798.5,421.8 799.5,423.2 800.4,424.6 800.4,425.1 799.9,426.8 800.5,428.3 800.9,428.8 802.3,429.4 803.8,430.1 804.4,430.5 805.0,431.7 804.7,433.4 804.6,434.3 805.0,435.2 805.7,436.8 806.0,437.9 806.0,438.9 805.8,440.2 805.9,441.5 806.0,441.9M299.7,238.2 303.4,244.3 307.0,246.8 305.9,261.6 303.4,286.2 299.7,323.0 294.8,360.0 291.0,400.0 287.4,437.0 283.7,473.9 281.2,510.8 281.2,547.7 283.7,600.0 284.7,641.8M493.0,239.4 496.7,261.6 501.6,286.2 506.5,318.2 511.5,347.7 516.4,377.3 520.0,400.0 525.0,427.0 528.7,437.0 533.6,449.2 539.8,466.5 537.3,476.3 546.0,481.3 541.0,486.2 533.6,491.0 532.4,503.4 530.0,523.0 533.6,542.8 531.2,560.0 530.0,577.3 536.0,592.0 538.6,600.0 541.0,619.6M536.0,594.5 344.5,594.5 341.4,605.0 348.0,613.0 353.0,621.0 358.3,626.0 359.7,632.6 355.7,636.6 357.0,643.0 361.0,647.0M541.0,619.6 560.0,620.4 742.8,631.9 745.4,639.2 746.7,649.6 757.2,651.0 759.8,634.0 757.2,615.7 766.3,610.4 776.8,614.4 789.8,618.3 795.0,619.6M636.0,95.5 653.6,87.4 675.7,78.8 683.0,72.6 695.4,66.5 698.0,59.0 707.7,50.5 720.0,43.0 732.4,37.0 747.0,24.6 759.5,16.0 764.4,12.3 757.0,11.0 752.0,10.0 749.6,6.0M764.4,12.3 767.0,24.6 774.0,32.0 784.0,40.6 796.4,39.4 806.0,34.5M6.0,415.3 78.8,415.3M44.3,594.0 186.0,594.0 185.4,600.0 180.2,610.4 177.6,623.5 182.8,636.6 190.6,644.4 193.3,656.0 195.9,665.3" fill="none" stroke="#000" stroke-width="1" stroke-linejoin="round" shape-rendering="crispEdges"/><circle cx="407" cy="407" r="159.5" fill="none" stroke="#cacaca" stroke-width="1" shape-rendering="crispEdges"/><circle cx="407" cy="407" r="279.5" fill="none" stroke="#cacaca" stroke-width="1" shape-rendering="crispEdges"/><circle cx="407" cy="407" r="399.5" fill="none" stroke="#cacaca" stroke-width="1" shape-rendering="crispEdges"/><circle cx="407" cy="407" r="519.5" fill="none" stroke="#cacaca" stroke-width="1" shape-rendering="crispEdges"/><circle cx="407" cy="407" r="39.5" fill="none" stroke="#ff0000" stroke-width="1" shape-rendering="crispEdges"/><path d="M356,84L396,124" stroke="#e0e0e0" stroke-width="1" fill="none"/><path d="M668,148L728,200" stroke="#e0e0e0" stroke-width="1" fill="none"/><path d="M711.5,205L729.5,191L747.5,207L729.5,225Z" stroke="#20e020" stroke-width="1" fill="none" stroke-dasharray="4 3"/><path d="M418,128L430,140L436,148L428,156" stroke="#ffff00" stroke-width="1" fill="none" stroke-dasharray="4 4"/><g fill="none" stroke-width="1" shape-rendering="crispEdges"><path d="M336.0,27.5h7" stroke="#ff7800"/><path d="M334.0,24.5h7" stroke="#ffb400"/><path d="M334.0,26.5h7" stroke="#ffb400"/><path d="M348.0,26.5h7" stroke="#ffb400"/><path d="M343.0,21.5h7" stroke="#ffb400"/><path d="M343.0,17.5h7" stroke="#ffb400"/><path d="M367.0,26.5h7M370.5,23.0v7" stroke="#ffb400"/><path d="M376.0,26.5h7" stroke="#ffb400"/><path d="M368.0,18.5h7" stroke="#ff7800"/><path d="M364.0,25.5h7" stroke="#ff7800"/><circle cx="417.5" cy="24.5" r="4.3" fill="none" stroke="#ff9600" stroke-width="1.1" shape-rendering="geometricPrecision"/><path d="M415.0,24.5h5" stroke="#ff9600"/><path d="M352.0,29.5h7" stroke="#ffb400"/><path d="M384.0,29.5h7M387.5,26.0v7" stroke="#ffb400"/><circle cx="370.5" cy="19.5" r="4.3" fill="none" stroke="#ffb400" stroke-width="1.1" shape-rendering="geometricPrecision"/><path d="M368.0,19.5h5M370.5,17.0v5" stroke="#ffb400"/><circle cx="369.5" cy="39.5" r="4.3" fill="none" stroke="#ff7800" stroke-width="1.1" shape-rendering="geometricPrecision"/><path d="M367.0,39.5h5M369.5,37.0v5" stroke="#ff7800"/><path d="M338.0,32.5h7M341.5,29.0v7" stroke="#ffb400"/><path d="M347.0,23.5h7" stroke="#ff9600"/><path d="M370.0,28.5h7M373.5,25.0v7" stroke="#ffb400"/><circle cx="378.5" cy="32.5" r="4.3" fill="none" stroke="#ffb400" stroke-width="1.1" shape-rendering="geometricPrecision"/><path d="M376.0,32.5h5M378.5,30.0v5" stroke="#ffb400"/><path d="M338.0,26.5h7" stroke="#ff9600"/><path d="M346.0,26.5h7" stroke="#ff7800"/><path d="M352.0,22.5h7M355.5,19.0v7" stroke="#ff9600"/><path d="M391.0,25.5h7" stroke="#ffb400"/><circle cx="364.5" cy="31.5" r="4.3" fill="none" stroke="#ffb400" stroke-width="1.1" shape-rendering="geometricPrecision"/><path d="M362.0,31.5h5" stroke="#ffb400"/><path d="M369.0,24.5h7" stroke="#ffb400"/><path d="M359.0,19.5h7" stroke="#ff7800"/><path d="M364.0,26.5h7M367.5,23.0v7" stroke="#ffb400"/><path d="M344.0,21.5h7" stroke="#ff9600"/><path d="M376.0,23.5h7" stroke="#ff7800"/><path d="M361.0,28.5h7M364.5,25.0v7" stroke="#ffb400"/><path d="M357.0,29.5h7" stroke="#ff9600"/><path d="M350.0,19.5h7" stroke="#ffb400"/><circle cx="365.5" cy="26.5" r="4.3" fill="none" stroke="#ffb400" stroke-width="1.1" shape-rendering="geometricPrecision"/><path d="M363.0,26.5h5" stroke="#ffb400"/><path d="M344.0,24.5h7M347.5,21.0v7" stroke="#ff9600"/><path d="M324.0,32.5h7" stroke="#ff9600"/><circle cx="321.5" cy="23.5" r="4.3" fill="none" stroke="#ff9600" stroke-width="1.1" shape-rendering="geometricPrecision"/><path d="M319.0,23.5h5" stroke="#ff9600"/><circle cx="363.5" cy="33.5" r="4.3" fill="none" stroke="#ff9600" stroke-width="1.1" shape-rendering="geometricPrecision"/><path d="M361.0,33.5h5" stroke="#ff9600"/><circle cx="369.5" cy="39.5" r="4.3" fill="none" stroke="#ffb400" stroke-width="1.1" shape-rendering="geometricPrecision"/><path d="M367.0,39.5h5M369.5,37.0v5" stroke="#ffb400"/><circle cx="358.5" cy="32.5" r="4.3" fill="none" stroke="#ffb400" stroke-width="1.1" shape-rendering="geometricPrecision"/><path d="M356.0,32.5h5M358.5,30.0v5" stroke="#ffb400"/><path d="M364.0,30.5h7" stroke="#ffb400"/><path d="M334.0,35.5h7" stroke="#ffb400"/><circle cx="352.5" cy="23.5" r="4.3" fill="none" stroke="#ffb400" stroke-width="1.1" shape-rendering="geometricPrecision"/><path d="M350.0,23.5h5M352.5,21.0v5" stroke="#ffb400"/><path d="M341.0,26.5h7" stroke="#ffb400"/><path d="M381.0,26.5h7" stroke="#ffb400"/><circle cx="353.5" cy="9.5" r="4.3" fill="none" stroke="#ff9600" stroke-width="1.1" shape-rendering="geometricPrecision"/><path d="M351.0,9.5h5M353.5,7.0v5" stroke="#ff9600"/><circle cx="346.5" cy="12.5" r="4.3" fill="none" stroke="#ffb400" stroke-width="1.1" shape-rendering="geometricPrecision"/><path d="M344.0,12.5h5M346.5,10.0v5" stroke="#ffb400"/><circle cx="354.5" cy="10.5" r="4.3" fill="none" stroke="#ff7800" stroke-width="1.1" shape-rendering="geometricPrecision"/><path d="M352.0,10.5h5" stroke="#ff7800"/><circle cx="362.5" cy="12.5" r="4.3" fill="none" stroke="#ff7800" stroke-width="1.1" shape-rendering="geometricPrecision"/><path d="M360.0,12.5h5M362.5,10.0v5" stroke="#ff7800"/><path d="M353.0,11.5h7" stroke="#ffb400"/><path d="M384.0,57.5h7" stroke="#ffff00"/><path d="M362.0,53.5h7" stroke="#ffd800"/><path d="M380.0,46.5h7" stroke="#ffb400"/><path d="M344.0,61.5h7" stroke="#ffff00"/><path d="M364.0,59.5h7" stroke="#ffff00"/><path d="M371.0,54.5h7" stroke="#ffd800"/><path d="M375.0,50.5h7" stroke="#ffff00"/><path d="M342.0,80.5h7" stroke="#ffd800"/><path d="M359.0,81.5h7" stroke="#ff7800"/><path d="M379.0,86.5h7" stroke="#ff9600"/><path d="M355.0,86.5h7" stroke="#ff9600"/><path d="M387.0,86.5h7" stroke="#ffb400"/><path d="M387.0,80.5h7" stroke="#ffb400"/><path d="M359.0,82.5h7" stroke="#ffd800"/><path d="M356.0,85.5h7" stroke="#ff7800"/><path d="M366.0,72.5h7M369.5,69.0v7" stroke="#ffd800"/><path d="M358.0,90.5h7" stroke="#ff9600"/><path d="M401.0,83.5h7M404.5,80.0v7" stroke="#ff7800"/><path d="M361.0,89.5h7" stroke="#ff9600"/><path d="M363.0,83.5h7" stroke="#ff9600"/><path d="M379.0,73.5h7" stroke="#ffb400"/><path d="M348.0,84.5h7" stroke="#ff7800"/><path d="M400.0,79.5h7" stroke="#ffd800"/><path d="M372.0,89.5h7" stroke="#ff9600"/><path d="M370.0,78.5h7" stroke="#ff7800"/><path d="M330.0,78.5h7M333.5,75.0v7" stroke="#ff9600"/><path d="M384.0,81.5h7" stroke="#ff9600"/><path d="M410.0,87.5h7" stroke="#ffd800"/><path d="M387.0,85.5h7" stroke="#ffb400"/><path d="M356.0,86.5h7M359.5,83.0v7" stroke="#ff7800"/><path d="M347.0,83.5h7" stroke="#ffb400"/><path d="M367.0,72.5h7" stroke="#ffb400"/><path d="M382.0,92.5h7" stroke="#ff7800"/><path d="M341.0,79.5h7" stroke="#ff7800"/><path d="M404.0,76.5h7" stroke="#ff9600"/><path d="M390.0,84.5h7M393.5,81.0v7" stroke="#ffd800"/><path d="M375.0,76.5h7" stroke="#ff9600"/><path d="M375.0,80.5h7" stroke="#ff9600"/><path d="M346.0,80.5h7" stroke="#ffd800"/><path d="M386.0,86.5h7" stroke="#ff9600"/><path d="M388.0,75.5h7" stroke="#ff9600"/><circle cx="367.5" cy="100.5" r="4.3" fill="none" stroke="#ffb400" stroke-width="1.1" shape-rendering="geometricPrecision"/><path d="M365.0,100.5h5M367.5,98.0v5" stroke="#ffb400"/><path d="M346.0,100.5h7M349.5,97.0v7" stroke="#ffff00"/><circle cx="333.5" cy="99.5" r="4.3" fill="none" stroke="#ffd800" stroke-width="1.1" shape-rendering="geometricPrecision"/><path d="M331.0,99.5h5" stroke="#ffd800"/><circle cx="356.5" cy="107.5" r="4.3" fill="none" stroke="#ffff00" stroke-width="1.1" shape-rendering="geometricPrecision"/><path d="M354.0,107.5h5" stroke="#ffff00"/><circle cx="359.5" cy="105.5" r="4.3" fill="none" stroke="#ffd800" stroke-width="1.1" shape-rendering="geometricPrecision"/><path d="M357.0,105.5h5" stroke="#ffd800"/><circle cx="352.5" cy="99.5" r="4.3" fill="none" stroke="#ffff00" stroke-width="1.1" shape-rendering="geometricPrecision"/><path d="M350.0,99.5h5" stroke="#ffff00"/><path d="M338.0,101.5h7" stroke="#ffff00"/><circle cx="346.5" cy="100.5" r="4.3" fill="none" stroke="#ffff00" stroke-width="1.1" shape-rendering="geometricPrecision"/><path d="M344.0,100.5h5" stroke="#ffff00"/><path d="M336.0,102.5h7" stroke="#ffb400"/><path d="M327.0,110.5h7" stroke="#ffd800"/><path d="M359.0,109.5h7" stroke="#ffb400"/><path d="M386.0,92.5h7" stroke="#ffd800"/><path d="M370.0,105.5h7" stroke="#ffd800"/><path d="M376.0,110.5h7" stroke="#ffff00"/><path d="M362.0,106.5h7M365.5,103.0v7" stroke="#ffd800"/><circle cx="355.5" cy="107.5" r="4.3" fill="none" stroke="#ffb400" stroke-width="1.1" shape-rendering="geometricPrecision"/><path d="M353.0,107.5h5" stroke="#ffb400"/><path d="M409.0,115.5h7" stroke="#ff9600"/><path d="M389.0,98.5h7" stroke="#ffd800"/><circle cx="387.5" cy="113.5" r="4.3" fill="none" stroke="#ffb400" stroke-width="1.1" shape-rendering="geometricPrecision"/><path d="M385.0,113.5h5M387.5,111.0v5" stroke="#ffb400"/><circle cx="406.5" cy="102.5" r="4.3" fill="none" stroke="#ffb400" stroke-width="1.1" shape-rendering="geometricPrecision"/><path d="M404.0,102.5h5M406.5,100.0v5" stroke="#ffb400"/><circle cx="406.5" cy="101.5" r="4.3" fill="none" stroke="#ffb400" stroke-width="1.1" shape-rendering="geometricPrecision"/><path d="M404.0,101.5h5M406.5,99.0v5" stroke="#ffb400"/><path d="M408.0,103.5h7" stroke="#ffb400"/><circle cx="391.5" cy="114.5" r="4.3" fill="none" stroke="#ffb400" stroke-width="1.1" shape-rendering="geometricPrecision"/><path d="M389.0,114.5h5M391.5,112.0v5" stroke="#ffb400"/><path d="M394.0,104.5h7" stroke="#ffb400"/><path d="M410.0,153.5h7" stroke="#ffff00"/><circle cx="399.5" cy="166.5" r="4.3" fill="none" stroke="#ffd800" stroke-width="1.1" shape-rendering="geometricPrecision"/><path d="M397.0,166.5h5" stroke="#ffd800"/><circle cx="409.5" cy="151.5" r="4.3" fill="none" stroke="#ffff00" stroke-width="1.1" shape-rendering="geometricPrecision"/><path d="M407.0,151.5h5" stroke="#ffff00"/><path d="M417.0,167.5h7" stroke="#ffff00"/><path d="M415.0,168.5h7" stroke="#ffd800"/><path d="M426.0,157.5h7" stroke="#ffff00"/><path d="M407.0,160.5h7M410.5,157.0v7" stroke="#ffff00"/><path d="M407.0,163.5h7" stroke="#ffff00"/><path d="M430.0,156.5h7" stroke="#ffd800"/><path d="M430.0,170.5h7M433.5,167.0v7" stroke="#ffff00"/><path d="M406.0,146.5h7M409.5,143.0v7" stroke="#ffff00"/><path d="M393.0,156.5h7" stroke="#ffff00"/><path d="M403.0,155.5h7M406.5,152.0v7" stroke="#ffff00"/><path d="M396.0,164.5h7" stroke="#ffff00"/><path d="M418.0,149.5h7" stroke="#ffd800"/><path d="M408.0,147.5h7" stroke="#ffff00"/><path d="M399.0,154.5h7" stroke="#ffff00"/><path d="M404.0,164.5h7" stroke="#ffff00"/><path d="M412.0,166.5h7" stroke="#ffff00"/><path d="M406.0,145.5h7" stroke="#ffff00"/><path d="M408.0,147.5h7" stroke="#ffff00"/><path d="M431.0,132.5h7" stroke="#ffff00"/><path d="M401.0,190.5h7" stroke="#ffff00"/><path d="M407.0,170.5h7" stroke="#ffd800"/><path d="M417.0,165.5h7M420.5,162.0v7" stroke="#ffff00"/><path d="M399.0,137.5h7" stroke="#ffff00"/><path d="M391.0,144.5h7" stroke="#ffff00"/><path d="M402.0,160.5h7M405.5,157.0v7" stroke="#ffff00"/><path d="M414.0,158.5h7" stroke="#ffff00"/><path d="M393.0,153.5h7" stroke="#ffff00"/><path d="M407.0,153.5h7" stroke="#ffff00"/><path d="M411.0,154.5h7M414.5,151.0v7" stroke="#ffff00"/><path d="M414.0,145.5h7" stroke="#ffff00"/><circle cx="419.5" cy="153.5" r="4.3" fill="none" stroke="#ffd800" stroke-width="1.1" shape-rendering="geometricPrecision"/><path d="M417.0,153.5h5" stroke="#ffd800"/><circle cx="400.5" cy="190.5" r="4.3" fill="none" stroke="#ffd800" stroke-width="1.1" shape-rendering="geometricPrecision"/><path d="M398.0,190.5h5" stroke="#ffd800"/><path d="M398.0,194.5h7M401.5,191.0v7" stroke="#ffff00"/><path d="M405.0,186.5h7" stroke="#ffd800"/><circle cx="409.5" cy="191.5" r="4.3" fill="none" stroke="#ffff00" stroke-width="1.1" shape-rendering="geometricPrecision"/><path d="M407.0,191.5h5" stroke="#ffff00"/><path d="M408.0,182.5h7" stroke="#ffd800"/><path d="M415.0,185.5h7" stroke="#ffff00"/><path d="M368.0,141.5h7" stroke="#ffb400"/><path d="M352.0,136.5h7" stroke="#ff9600"/><path d="M400.0,150.5h7" stroke="#ffd800"/><path d="M379.0,136.5h7" stroke="#ff9600"/><path d="M398.0,146.5h7" stroke="#ffd800"/><path d="M387.0,143.5h7" stroke="#ffd800"/><path d="M425.0,156.5h7" stroke="#ffd800"/><path d="M426.0,163.5h7" stroke="#ffd800"/><path d="M436.0,139.5h7" stroke="#ffd800"/><path d="M440.0,131.5h7" stroke="#ffd800"/><path d="M435.0,166.5h7" stroke="#ffff00"/><path d="M426.0,132.5h7" stroke="#ffff00"/><path d="M313.0,44.5h7M316.5,41.0v7" stroke="#ff5a00"/><path d="M309.0,58.5h7M312.5,55.0v7" stroke="#ff5a00"/><circle cx="339.5" cy="58.5" r="4.3" fill="none" stroke="#ff5a00" stroke-width="1.1" shape-rendering="geometricPrecision"/><path d="M337.0,58.5h5" stroke="#ff5a00"/><path d="M339.0,59.5h7" stroke="#ffd800"/><circle cx="337.5" cy="25.5" r="4.3" fill="none" stroke="#ffd800" stroke-width="1.1" shape-rendering="geometricPrecision"/><path d="M335.0,25.5h5M337.5,23.0v5" stroke="#ffd800"/><circle cx="381.5" cy="17.5" r="4.3" fill="none" stroke="#ffd800" stroke-width="1.1" shape-rendering="geometricPrecision"/><path d="M379.0,17.5h5M381.5,15.0v5" stroke="#ffd800"/><circle cx="350.5" cy="46.5" r="4.3" fill="none" stroke="#ff9600" stroke-width="1.1" shape-rendering="geometricPrecision"/><path d="M348.0,46.5h5M350.5,44.0v5" stroke="#ff9600"/><circle cx="364.5" cy="46.5" r="4.3" fill="none" stroke="#ffd800" stroke-width="1.1" shape-rendering="geometricPrecision"/><path d="M362.0,46.5h5" stroke="#ffd800"/><circle cx="383.5" cy="46.5" r="4.3" fill="none" stroke="#ffff00" stroke-width="1.1" shape-rendering="geometricPrecision"/><path d="M381.0,46.5h5" stroke="#ffff00"/><circle cx="383.5" cy="49.5" r="4.3" fill="none" stroke="#ffff00" stroke-width="1.1" shape-rendering="geometricPrecision"/><path d="M381.0,49.5h5" stroke="#ffff00"/><circle cx="364.5" cy="53.5" r="4.3" fill="none" stroke="#ffff00" stroke-width="1.1" shape-rendering="geometricPrecision"/><path d="M362.0,53.5h5" stroke="#ffff00"/><circle cx="365.5" cy="57.5" r="4.3" fill="none" stroke="#ffff00" stroke-width="1.1" shape-rendering="geometricPrecision"/><path d="M363.0,57.5h5" stroke="#ffff00"/><circle cx="365.5" cy="60.5" r="4.3" fill="none" stroke="#ffff00" stroke-width="1.1" shape-rendering="geometricPrecision"/><path d="M363.0,60.5h5" stroke="#ffff00"/><circle cx="353.5" cy="65.5" r="4.3" fill="none" stroke="#ffff00" stroke-width="1.1" shape-rendering="geometricPrecision"/><path d="M351.0,65.5h5" stroke="#ffff00"/><circle cx="380.5" cy="59.5" r="4.3" fill="none" stroke="#ffb400" stroke-width="1.1" shape-rendering="geometricPrecision"/><path d="M378.0,59.5h5M380.5,57.0v5" stroke="#ffb400"/><circle cx="385.5" cy="65.5" r="4.3" fill="none" stroke="#ffff00" stroke-width="1.1" shape-rendering="geometricPrecision"/><path d="M383.0,65.5h5M385.5,63.0v5" stroke="#ffff00"/><circle cx="375.5" cy="73.5" r="4.3" fill="none" stroke="#ffff00" stroke-width="1.1" shape-rendering="geometricPrecision"/><path d="M373.0,73.5h5M375.5,71.0v5" stroke="#ffff00"/><circle cx="343.5" cy="102.5" r="4.3" fill="none" stroke="#ffff00" stroke-width="1.1" shape-rendering="geometricPrecision"/><path d="M341.0,102.5h5M343.5,100.0v5" stroke="#ffff00"/><circle cx="355.5" cy="97.5" r="4.3" fill="none" stroke="#ffd800" stroke-width="1.1" shape-rendering="geometricPrecision"/><path d="M353.0,97.5h5" stroke="#ffd800"/><circle cx="346.5" cy="90.5" r="4.3" fill="none" stroke="#ffb400" stroke-width="1.1" shape-rendering="geometricPrecision"/><path d="M344.0,90.5h5" stroke="#ffb400"/><circle cx="370.5" cy="107.5" r="4.3" fill="none" stroke="#ffff00" stroke-width="1.1" shape-rendering="geometricPrecision"/><path d="M368.0,107.5h5" stroke="#ffff00"/><circle cx="369.5" cy="111.5" r="4.3" fill="none" stroke="#ffff00" stroke-width="1.1" shape-rendering="geometricPrecision"/><path d="M367.0,111.5h5" stroke="#ffff00"/><circle cx="371.5" cy="108.5" r="4.3" fill="none" stroke="#ffff00" stroke-width="1.1" shape-rendering="geometricPrecision"/><path d="M369.0,108.5h5" stroke="#ffff00"/><circle cx="388.5" cy="107.5" r="4.3" fill="none" stroke="#ffff00" stroke-width="1.1" shape-rendering="geometricPrecision"/><path d="M386.0,107.5h5" stroke="#ffff00"/><circle cx="387.5" cy="108.5" r="4.3" fill="none" stroke="#ffff00" stroke-width="1.1" shape-rendering="geometricPrecision"/><path d="M385.0,108.5h5" stroke="#ffff00"/><circle cx="409.5" cy="103.5" r="4.3" fill="none" stroke="#ff9600" stroke-width="1.1" shape-rendering="geometricPrecision"/><path d="M407.0,103.5h5M409.5,101.0v5" stroke="#ff9600"/><circle cx="406.5" cy="111.5" r="4.3" fill="none" stroke="#ffb400" stroke-width="1.1" shape-rendering="geometricPrecision"/><path d="M404.0,111.5h5" stroke="#ffb400"/><circle cx="397.5" cy="118.5" r="4.3" fill="none" stroke="#ff5a00" stroke-width="1.1" shape-rendering="geometricPrecision"/><path d="M395.0,118.5h5M397.5,116.0v5" stroke="#ff5a00"/><circle cx="413.5" cy="120.5" r="4.3" fill="none" stroke="#ff5a00" stroke-width="1.1" shape-rendering="geometricPrecision"/><path d="M411.0,120.5h5M413.5,118.0v5" stroke="#ff5a00"/><circle cx="438.5" cy="97.5" r="4.3" fill="none" stroke="#ff5a00" stroke-width="1.1" shape-rendering="geometricPrecision"/><path d="M436.0,97.5h5M438.5,95.0v5" stroke="#ff5a00"/><circle cx="423.5" cy="114.5" r="4.3" fill="none" stroke="#ffd800" stroke-width="1.1" shape-rendering="geometricPrecision"/><path d="M421.0,114.5h5M423.5,112.0v5" stroke="#ffd800"/><path d="M446.0,100.5h7" stroke="#ff7800"/><path d="M436.0,84.5h7" stroke="#ff9600"/><path d="M456.0,116.5h7" stroke="#ff9600"/><path d="M460.0,126.5h7" stroke="#ff7800"/><path d="M454.0,135.5h7" stroke="#ff9600"/><path d="M482.0,143.5h7" stroke="#ff9600"/><path d="M467.0,49.5h7" stroke="#ff7800"/><circle cx="403.5" cy="138.5" r="4.3" fill="none" stroke="#ffff00" stroke-width="1.1" shape-rendering="geometricPrecision"/><path d="M401.0,138.5h5" stroke="#ffff00"/><circle cx="401.5" cy="147.5" r="4.3" fill="none" stroke="#ffff00" stroke-width="1.1" shape-rendering="geometricPrecision"/><path d="M399.0,147.5h5" stroke="#ffff00"/><circle cx="409.5" cy="150.5" r="4.3" fill="none" stroke="#ffff00" stroke-width="1.1" shape-rendering="geometricPrecision"/><path d="M407.0,150.5h5" stroke="#ffff00"/><circle cx="415.5" cy="158.5" r="4.3" fill="none" stroke="#ffff00" stroke-width="1.1" shape-rendering="geometricPrecision"/><path d="M413.0,158.5h5" stroke="#ffff00"/><circle cx="414.5" cy="163.5" r="4.3" fill="none" stroke="#ffff00" stroke-width="1.1" shape-rendering="geometricPrecision"/><path d="M412.0,163.5h5" stroke="#ffff00"/><circle cx="414.5" cy="166.5" r="4.3" fill="none" stroke="#ffff00" stroke-width="1.1" shape-rendering="geometricPrecision"/><path d="M412.0,166.5h5" stroke="#ffff00"/><circle cx="404.5" cy="165.5" r="4.3" fill="none" stroke="#ffff00" stroke-width="1.1" shape-rendering="geometricPrecision"/><path d="M402.0,165.5h5" stroke="#ffff00"/><circle cx="403.5" cy="170.5" r="4.3" fill="none" stroke="#ffff00" stroke-width="1.1" shape-rendering="geometricPrecision"/><path d="M401.0,170.5h5" stroke="#ffff00"/><circle cx="387.5" cy="164.5" r="4.3" fill="none" stroke="#ffff00" stroke-width="1.1" shape-rendering="geometricPrecision"/><path d="M385.0,164.5h5M387.5,162.0v5" stroke="#ffff00"/><circle cx="425.5" cy="166.5" r="4.3" fill="none" stroke="#ffff00" stroke-width="1.1" shape-rendering="geometricPrecision"/><path d="M423.0,166.5h5M425.5,164.0v5" stroke="#ffff00"/><circle cx="429.5" cy="172.5" r="4.3" fill="none" stroke="#ffff00" stroke-width="1.1" shape-rendering="geometricPrecision"/><path d="M427.0,172.5h5M429.5,170.0v5" stroke="#ffff00"/><circle cx="444.5" cy="140.5" r="4.3" fill="none" stroke="#ffff00" stroke-width="1.1" shape-rendering="geometricPrecision"/><path d="M442.0,140.5h5" stroke="#ffff00"/><circle cx="448.5" cy="153.5" r="4.3" fill="none" stroke="#ffff00" stroke-width="1.1" shape-rendering="geometricPrecision"/><path d="M446.0,153.5h5" stroke="#ffff00"/><circle cx="379.5" cy="139.5" r="4.3" fill="none" stroke="#ff9600" stroke-width="1.1" shape-rendering="geometricPrecision"/><path d="M377.0,139.5h5" stroke="#ff9600"/><circle cx="403.5" cy="183.5" r="4.3" fill="none" stroke="#ffff00" stroke-width="1.1" shape-rendering="geometricPrecision"/><path d="M401.0,183.5h5" stroke="#ffff00"/><circle cx="404.5" cy="186.5" r="4.3" fill="none" stroke="#ffff00" stroke-width="1.1" shape-rendering="geometricPrecision"/><path d="M402.0,186.5h5" stroke="#ffff00"/><circle cx="403.5" cy="190.5" r="4.3" fill="none" stroke="#ffff00" stroke-width="1.1" shape-rendering="geometricPrecision"/><path d="M401.0,190.5h5" stroke="#ffff00"/><circle cx="501.5" cy="50.5" r="4.3" fill="none" stroke="#ffb400" stroke-width="1.1" shape-rendering="geometricPrecision"/><path d="M499.0,50.5h5M501.5,48.0v5" stroke="#ffb400"/><circle cx="526.5" cy="65.5" r="4.3" fill="none" stroke="#ffb400" stroke-width="1.1" shape-rendering="geometricPrecision"/><path d="M524.0,65.5h5" stroke="#ffb400"/><circle cx="504.5" cy="99.5" r="4.3" fill="none" stroke="#ff9600" stroke-width="1.1" shape-rendering="geometricPrecision"/><path d="M502.0,99.5h5M504.5,97.0v5" stroke="#ff9600"/><path d="M451.0,25.5h7" stroke="#00ffff"/><path d="M383.0,139.5h7" stroke="#00ffff"/><circle cx="360.5" cy="9.5" r="4.3" fill="none" stroke="#ff7800" stroke-width="1.1" shape-rendering="geometricPrecision"/><path d="M358.0,9.5h5M360.5,7.0v5" stroke="#ff7800"/><circle cx="349.5" cy="12.5" r="4.3" fill="none" stroke="#ff9600" stroke-width="1.1" shape-rendering="geometricPrecision"/><path d="M347.0,12.5h5" stroke="#ff9600"/><circle cx="658.5" cy="148.5" r="4.3" fill="none" stroke="#ff9600" stroke-width="1.1" shape-rendering="geometricPrecision"/><path d="M656.0,148.5h5M658.5,146.0v5" stroke="#ff9600"/><circle cx="677.5" cy="144.5" r="4.3" fill="none" stroke="#ff7800" stroke-width="1.1" shape-rendering="geometricPrecision"/><path d="M675.0,144.5h5" stroke="#ff7800"/><path d="M677.0,136.5h7" stroke="#ff9600"/><path d="M730.0,45.5h7" stroke="#ff7800"/><circle cx="721.5" cy="149.5" r="4.3" fill="none" stroke="#ffb400" stroke-width="1.1" shape-rendering="geometricPrecision"/><path d="M719.0,149.5h5M721.5,147.0v5" stroke="#ffb400"/><circle cx="713.5" cy="158.5" r="4.3" fill="none" stroke="#ff9600" stroke-width="1.1" shape-rendering="geometricPrecision"/><path d="M711.0,158.5h5M713.5,156.0v5" stroke="#ff9600"/><path d="M724.0,156.5h7M727.5,153.0v7" stroke="#ffb400"/><path d="M737.0,156.5h7" stroke="#ffb400"/><circle cx="723.5" cy="167.5" r="4.3" fill="none" stroke="#ffb400" stroke-width="1.1" shape-rendering="geometricPrecision"/><path d="M721.0,167.5h5M723.5,165.0v5" stroke="#ffb400"/><path d="M727.0,165.5h7M730.5,162.0v7" stroke="#ffb400"/><path d="M733.0,167.5h7M736.5,164.0v7" stroke="#ffb400"/><path d="M661.0,176.5h7M664.5,173.0v7" stroke="#ffb400"/><path d="M674.0,174.5h7M677.5,171.0v7" stroke="#ff9600"/><path d="M680.0,179.5h7" stroke="#ffb400"/><circle cx="699.5" cy="175.5" r="4.3" fill="none" stroke="#ffff00" stroke-width="1.1" shape-rendering="geometricPrecision"/><path d="M697.0,175.5h5" stroke="#ffff00"/><path d="M687.0,170.5h7" stroke="#ffd800"/><circle cx="686.5" cy="185.5" r="4.3" fill="none" stroke="#ffff00" stroke-width="1.1" shape-rendering="geometricPrecision"/><path d="M684.0,185.5h5M686.5,183.0v5" stroke="#ffff00"/><path d="M692.0,186.5h7M695.5,183.0v7" stroke="#ffd800"/><path d="M666.0,188.5h7" stroke="#ffb400"/><circle cx="704.5" cy="191.5" r="4.3" fill="none" stroke="#ffd800" stroke-width="1.1" shape-rendering="geometricPrecision"/><path d="M702.0,191.5h5M704.5,189.0v5" stroke="#ffd800"/><circle cx="727.5" cy="189.5" r="4.3" fill="none" stroke="#ff9600" stroke-width="1.1" shape-rendering="geometricPrecision"/><path d="M725.0,189.5h5" stroke="#ff9600"/><path d="M745.0,180.5h7" stroke="#ffb400"/><path d="M727.0,179.5h7" stroke="#ffb400"/><path d="M755.0,190.5h7M758.5,187.0v7" stroke="#ffb400"/><path d="M714.0,188.5h7" stroke="#ff9600"/><path d="M705.0,158.5h7" stroke="#ff9600"/><circle cx="704.5" cy="197.5" r="4.3" fill="none" stroke="#ffd800" stroke-width="1.1" shape-rendering="geometricPrecision"/><path d="M702.0,197.5h5" stroke="#ffd800"/><path d="M708.0,195.5h7" stroke="#ffd800"/><circle cx="710.5" cy="210.5" r="4.3" fill="none" stroke="#ffff00" stroke-width="1.1" shape-rendering="geometricPrecision"/><path d="M708.0,210.5h5M710.5,208.0v5" stroke="#ffff00"/><circle cx="721.5" cy="213.5" r="4.3" fill="none" stroke="#ffd800" stroke-width="1.1" shape-rendering="geometricPrecision"/><path d="M719.0,213.5h5M721.5,211.0v5" stroke="#ffd800"/><circle cx="739.5" cy="209.5" r="4.3" fill="none" stroke="#ff9600" stroke-width="1.1" shape-rendering="geometricPrecision"/><path d="M737.0,209.5h5" stroke="#ff9600"/><circle cx="728.5" cy="201.5" r="4.3" fill="none" stroke="#ff9600" stroke-width="1.1" shape-rendering="geometricPrecision"/><path d="M726.0,201.5h5" stroke="#ff9600"/><circle cx="723.5" cy="220.5" r="4.3" fill="none" stroke="#ffff00" stroke-width="1.1" shape-rendering="geometricPrecision"/><path d="M721.0,220.5h5M723.5,218.0v5" stroke="#ffff00"/><circle cx="726.5" cy="222.5" r="4.3" fill="none" stroke="#ffff00" stroke-width="1.1" shape-rendering="geometricPrecision"/><path d="M724.0,222.5h5" stroke="#ffff00"/><circle cx="719.5" cy="221.5" r="4.3" fill="none" stroke="#ff5a00" stroke-width="1.1" shape-rendering="geometricPrecision"/><path d="M717.0,221.5h5" stroke="#ff5a00"/><circle cx="724.5" cy="218.5" r="4.3" fill="none" stroke="#ffff00" stroke-width="1.1" shape-rendering="geometricPrecision"/><path d="M722.0,218.5h5" stroke="#ffff00"/><path d="M667.0,207.5h7" stroke="#ff9600"/><path d="M666.0,217.5h7" stroke="#ffb400"/><path d="M658.0,228.5h7" stroke="#ffb400"/><path d="M663.0,229.5h7" stroke="#ffb400"/><circle cx="675.5" cy="228.5" r="4.3" fill="none" stroke="#ffff00" stroke-width="1.1" shape-rendering="geometricPrecision"/><path d="M673.0,228.5h5" stroke="#ffff00"/><circle cx="705.5" cy="229.5" r="4.3" fill="none" stroke="#ff9600" stroke-width="1.1" shape-rendering="geometricPrecision"/><path d="M703.0,229.5h5M705.5,227.0v5" stroke="#ff9600"/><circle cx="700.5" cy="232.5" r="4.3" fill="none" stroke="#ff9600" stroke-width="1.1" shape-rendering="geometricPrecision"/><path d="M698.0,232.5h5" stroke="#ff9600"/><path d="M711.0,229.5h7" stroke="#ffd800"/><path d="M717.0,230.5h7" stroke="#ff7800"/><circle cx="676.5" cy="244.5" r="4.3" fill="none" stroke="#ffd800" stroke-width="1.1" shape-rendering="geometricPrecision"/><path d="M674.0,244.5h5" stroke="#ffd800"/><circle cx="676.5" cy="247.5" r="4.3" fill="none" stroke="#ffd800" stroke-width="1.1" shape-rendering="geometricPrecision"/><path d="M674.0,247.5h5" stroke="#ffd800"/><circle cx="682.5" cy="249.5" r="4.3" fill="none" stroke="#ffd800" stroke-width="1.1" shape-rendering="geometricPrecision"/><path d="M680.0,249.5h5" stroke="#ffd800"/><circle cx="686.5" cy="252.5" r="4.3" fill="none" stroke="#ffd800" stroke-width="1.1" shape-rendering="geometricPrecision"/><path d="M684.0,252.5h5" stroke="#ffd800"/><circle cx="692.5" cy="251.5" r="4.3" fill="none" stroke="#ffff00" stroke-width="1.1" shape-rendering="geometricPrecision"/><path d="M690.0,251.5h5" stroke="#ffff00"/><circle cx="684.5" cy="250.5" r="4.3" fill="none" stroke="#ffd800" stroke-width="1.1" shape-rendering="geometricPrecision"/><path d="M682.0,250.5h5" stroke="#ffd800"/><path d="M698.0,258.5h7" stroke="#ffb400"/><path d="M708.0,254.5h7" stroke="#ffb400"/><path d="M714.0,259.5h7" stroke="#ffb400"/><path d="M695.0,265.5h7" stroke="#ff7800"/><path d="M694.0,277.5h7" stroke="#ff5a00"/><path d="M694.0,279.5h7" stroke="#ff5a00"/><circle cx="712.5" cy="278.5" r="4.3" fill="none" stroke="#ff9600" stroke-width="1.1" shape-rendering="geometricPrecision"/><path d="M710.0,278.5h5" stroke="#ff9600"/><circle cx="734.5" cy="293.5" r="4.3" fill="none" stroke="#ff9600" stroke-width="1.1" shape-rendering="geometricPrecision"/><path d="M732.0,293.5h5" stroke="#ff9600"/><path d="M747.0,284.5h7" stroke="#ff7800"/><path d="M757.0,281.5h7M760.5,278.0v7" stroke="#ffb400"/><path d="M776.0,278.5h7M779.5,275.0v7" stroke="#ffb400"/><circle cx="732.5" cy="237.5" r="4.3" fill="none" stroke="#ff9600" stroke-width="1.1" shape-rendering="geometricPrecision"/><path d="M730.0,237.5h5" stroke="#ff9600"/><circle cx="732.5" cy="242.5" r="4.3" fill="none" stroke="#ffb400" stroke-width="1.1" shape-rendering="geometricPrecision"/><path d="M730.0,242.5h5M732.5,240.0v5" stroke="#ffb400"/><circle cx="752.5" cy="232.5" r="4.3" fill="none" stroke="#ffb400" stroke-width="1.1" shape-rendering="geometricPrecision"/><path d="M750.0,232.5h5" stroke="#ffb400"/><circle cx="753.5" cy="234.5" r="4.3" fill="none" stroke="#ffb400" stroke-width="1.1" shape-rendering="geometricPrecision"/><path d="M751.0,234.5h5" stroke="#ffb400"/><circle cx="750.5" cy="241.5" r="4.3" fill="none" stroke="#ff7800" stroke-width="1.1" shape-rendering="geometricPrecision"/><path d="M748.0,241.5h5M750.5,239.0v5" stroke="#ff7800"/><path d="M753.0,238.5h7" stroke="#ffb400"/><path d="M752.0,242.5h7" stroke="#ff9600"/><path d="M759.0,247.5h7" stroke="#ffb400"/><circle cx="746.5" cy="252.5" r="4.3" fill="none" stroke="#ffff00" stroke-width="1.1" shape-rendering="geometricPrecision"/><path d="M744.0,252.5h5M746.5,250.0v5" stroke="#ffff00"/><circle cx="768.5" cy="261.5" r="4.3" fill="none" stroke="#ffb400" stroke-width="1.1" shape-rendering="geometricPrecision"/><path d="M766.0,261.5h5M768.5,259.0v5" stroke="#ffb400"/><path d="M750.0,262.5h7" stroke="#ffb400"/><path d="M752.0,265.5h7" stroke="#ffb400"/><path d="M778.0,241.5h7M781.5,238.0v7" stroke="#ffb400"/><path d="M766.0,219.5h7" stroke="#ffb400"/><path d="M774.0,224.5h7" stroke="#ffb400"/><path d="M749.0,215.5h7" stroke="#ffb400"/><path d="M738.0,232.5h7" stroke="#ff9600"/><circle cx="803.5" cy="337.5" r="4.3" fill="none" stroke="#ff9600" stroke-width="1.1" shape-rendering="geometricPrecision"/><path d="M801.0,337.5h5M803.5,335.0v5" stroke="#ff9600"/><path d="M683.0,259.5h7" stroke="#ffd800"/><path d="M729.0,228.5h7" stroke="#ffd800"/><path d="M724.0,205.5h7" stroke="#ff9600"/><path d="M710.0,204.5h7" stroke="#ff9600"/><circle cx="766.5" cy="404.5" r="4.3" fill="none" stroke="#ff5a00" stroke-width="1.1" shape-rendering="geometricPrecision"/><path d="M764.0,404.5h5M766.5,402.0v5" stroke="#ff5a00"/><path d="M768.0,437.5h7" stroke="#ff5a00"/></g><rect x="395.6" y="3.5" width="20.7" height="8.5" fill="#5d504b"/><text x="406" y="11.2" class="mono" text-anchor="middle" fill="#ffff96" textLength="20.7" lengthAdjust="spacing">313</text><rect x="395.6" y="123.5" width="20.7" height="8.5" fill="#5d504b"/><text x="406" y="131.2" class="mono" text-anchor="middle" fill="#ffff96" textLength="20.7" lengthAdjust="spacing">219</text><rect x="395.6" y="243.5" width="20.7" height="8.5" fill="#5d504b"/><text x="406" y="251.2" class="mono" text-anchor="middle" fill="#ffff96" textLength="20.7" lengthAdjust="spacing">125</text><rect x="399.1" y="363.7" width="13.8" height="8.5" fill="#5d504b"/><text x="406" y="371.4" class="mono" text-anchor="middle" fill="#ffff96" textLength="13.8" lengthAdjust="spacing">31</text><text x="348.5" y="82.5" class="mono" fill="#ffffff">L-5062 7</text><text x="658" y="146.5" class="mono" fill="#ffffff">F-3669-1</text><path d="M391,79.5h6" stroke="#ff2020" stroke-width="1"/><path d="M699,142.5h4" stroke="#20e0e0" stroke-width="1"/><path d="M709,141l2.5,4l3-5" stroke="#ffff40" fill="none" stroke-width="1"/></svg>
<div class="legend"></div><svg class="txt" width="1138" height="812" viewBox="0 0 1138 812" fill="#fff"><text x="13.6" y="770.5" class="sm" fill="#dcdce4" textLength="35.5" lengthAdjust="spacingAndGlyphs">Symbols</text><text x="53" y="770.5" class="sm" fill="#dcdce4" textLength="17.5" lengthAdjust="spacingAndGlyphs">-CG</text><text x="77.8" y="770.5" class="sm" fill="#dcdce4" textLength="14.5" lengthAdjust="spacingAndGlyphs">-IC</text><text x="98.7" y="770.5" class="sm" fill="#dcdce4" textLength="21" lengthAdjust="spacingAndGlyphs">+CG</text><text x="123.5" y="770.5" class="sm" fill="#dcdce4" textLength="18" lengthAdjust="spacingAndGlyphs">+IC</text><text x="153.3" y="770.5" class="sm" fill="#dcdce4" textLength="90" lengthAdjust="spacingAndGlyphs">Strike age color codes</text><text x="13.6" y="783.5" class="sm" fill="#dcdce4" textLength="28.5" lengthAdjust="spacingAndGlyphs">Recent</text><text x="13.6" y="796.5" class="sm" fill="#dcdce4" textLength="14" lengthAdjust="spacingAndGlyphs">Old</text><text x="153.3" y="783.5" class="sm" fill="#ffd800" textLength="16.5" lengthAdjust="spacingAndGlyphs">15+</text><text x="153.3" y="796.5" class="sm" fill="#ff7800" textLength="16.5" lengthAdjust="spacingAndGlyphs">60+</text><text x="188.6" y="783.5" class="sm" fill="#ffb400" textLength="16.5" lengthAdjust="spacingAndGlyphs">30+</text><text x="188.6" y="796.5" class="sm" fill="#ff5a00" textLength="16.5" lengthAdjust="spacingAndGlyphs">75+</text><text x="223.3" y="783.5" class="sm" fill="#ff9600" textLength="16.5" lengthAdjust="spacingAndGlyphs">45+</text><text x="223.3" y="796.5" class="sm" fill="#ff2800" textLength="16.5" lengthAdjust="spacingAndGlyphs">90+</text><g fill="none" stroke-width="1" shape-rendering="crispEdges"><circle cx="60.5" cy="780.5" r="4.1" stroke="#00ffff" shape-rendering="geometricPrecision"/><path d="M58.5,780.5h4" stroke="#00ffff"/><path d="M82.5,780.5h6" stroke="#00ffff"/><circle cx="110.5" cy="780.5" r="4.1" stroke="#00ffff" shape-rendering="geometricPrecision"/><path d="M108.5,780.5h4M110.5,778.5v4" stroke="#00ffff"/><path d="M132.5,780.5h6M135.5,777.5v6" stroke="#00ffff"/><circle cx="60.5" cy="793.5" r="4.1" stroke="#ffff00" shape-rendering="geometricPrecision"/><path d="M58.5,793.5h4" stroke="#ffff00"/><path d="M82.5,793.5h6" stroke="#ffff00"/><circle cx="110.5" cy="793.5" r="4.1" stroke="#ffff00" shape-rendering="geometricPrecision"/><path d="M108.5,793.5h4M110.5,791.5v4" stroke="#ffff00"/><path d="M132.5,793.5h6M135.5,790.5v6" stroke="#ffff00"/></g><rect x="685" y="792" width="121" height="14" fill="#000"/><text x="688.8" y="802.4" class="sm" fill="#ffffff" textLength="113" lengthAdjust="spacingAndGlyphs">©2005 Astrogenic Systems</text></svg>
<div class="panel" style="left:812px;top:8px;width:318px;height:318px"></div>
<div class="panel" style="left:812px;top:333px;width:318px;height:113px"></div>
<div class="panel" style="left:812px;top:453px;width:318px;height:348px"></div>
<div class="box" style="left:819px;top:16px;width:56px;height:16px;background:#5a0000"></div>
<div class="box" style="left:883px;top:16px;width:56px;height:16px;background:#303030"></div>
<div class="box" style="left:994px;top:16px;width:126px;height:16px;background:#2c2c2c"></div>
<div class="box" style="left:821px;top:64px;width:80px;height:14px;background:#525252"></div>
<div class="box" style="left:931px;top:64px;width:80px;height:14px;background:#525252"></div>
<div class="box" style="left:1041px;top:64px;width:80px;height:14px;background:#525252"></div>
<div class="bar" style="left:925px;top:227px"><i style="width:8px;background:#ff0000"></i></div>
<div class="bar" style="left:1028px;top:227px"><i style="width:7px;background:#96d2ff"></i></div>
<div class="bar" style="left:925px;top:281px"><i style="width:6px;background:#ff69b4"></i></div>
<div class="bar" style="left:1028px;top:281px"><i style="width:28px;background:#00ff00"></i></div>
<div class="rule" style="left:821px;top:217px;width:303px"></div>
<div class="rule" style="left:821px;top:358px;width:303px"></div>
<svg class="txt" width="1138" height="812" viewBox="0 0 1138 812" fill="#fff"><text x="848" y="29.5" class="b" text-anchor="middle" textLength="48.5" lengthAdjust="spacingAndGlyphs" fill="#ecdcd6">STRIKE</text><text x="912" y="29.5" class="b" text-anchor="middle" textLength="43.5" lengthAdjust="spacingAndGlyphs" fill="#d0d0c6">NOISE</text><text x="998" y="29.5" class="b" textLength="62" lengthAdjust="spacingAndGlyphs" fill="#ffffff">Bng 355°</text><text x="1118" y="29.5" class="b" text-anchor="end" textLength="43" lengthAdjust="spacingAndGlyphs" fill="#00e400">209mi</text><text x="862" y="76" class="r" text-anchor="middle" textLength="66" lengthAdjust="spacingAndGlyphs">Strikes/min</text><text x="972" y="76" class="r" text-anchor="middle" textLength="57" lengthAdjust="spacingAndGlyphs">Close/min</text><text x="1082" y="76" class="r" text-anchor="middle" textLength="63" lengthAdjust="spacingAndGlyphs">Noises/min</text><text x="903.5" y="112" class="big" text-anchor="end" textLength="19.5" lengthAdjust="spacingAndGlyphs">2</text><text x="1013.5" y="112" class="big" text-anchor="end" textLength="19.5" lengthAdjust="spacingAndGlyphs">0</text><text x="1123.5" y="112" class="big" text-anchor="end" textLength="19.5" lengthAdjust="spacingAndGlyphs" fill="#b4b4b4">0</text><text x="903" y="143" class="r" text-anchor="end" textLength="76.5" lengthAdjust="spacingAndGlyphs">Total Strikes</text><text x="1013" y="143" class="r" text-anchor="end" textLength="69" lengthAdjust="spacingAndGlyphs">Total Close</text><text x="1123" y="143" class="r" text-anchor="end" textLength="75.5" lengthAdjust="spacingAndGlyphs" fill="#c8c8c8">Total Noises</text><text x="903" y="161" class="r" text-anchor="end" textLength="30.5" lengthAdjust="spacingAndGlyphs">1543</text><text x="1013" y="161" class="r" text-anchor="end">0</text><text x="1123" y="161" class="r" text-anchor="end" textLength="22.5" lengthAdjust="spacingAndGlyphs">104</text><text x="821" y="215" class="r" textLength="164.5" lengthAdjust="spacingAndGlyphs" fill="#c4c4c4">Lightning type distribution</text><text x="821" y="237" class="b" textLength="84.5" lengthAdjust="spacingAndGlyphs">Cloud-ground</text><text x="913" y="236.5" class="r" textLength="7.5" lengthAdjust="spacingAndGlyphs">+</text><text x="979.7" y="237" class="b" textLength="28.5" lengthAdjust="spacingAndGlyphs">17%</text><text x="1016" y="237" class="b" textLength="7.5" lengthAdjust="spacingAndGlyphs">−</text><text x="1082.3" y="237" class="b" textLength="28.5" lengthAdjust="spacingAndGlyphs">15%</text><text x="821" y="261" class="r" textLength="37.5" lengthAdjust="spacingAndGlyphs" fill="#c4c4c4">Count</text><text x="925" y="261" class="b" textLength="24" lengthAdjust="spacingAndGlyphs">258</text><text x="1028" y="261" class="b" textLength="24" lengthAdjust="spacingAndGlyphs">235</text><text x="821" y="291" class="b" textLength="64" lengthAdjust="spacingAndGlyphs">Intracloud</text><text x="913" y="290.5" class="r" textLength="7.5" lengthAdjust="spacingAndGlyphs">+</text><text x="979.7" y="291" class="b" textLength="28.5" lengthAdjust="spacingAndGlyphs">11%</text><text x="1016" y="291" class="b" textLength="7.5" lengthAdjust="spacingAndGlyphs">−</text><text x="1082.3" y="291" class="b" textLength="28.5" lengthAdjust="spacingAndGlyphs">57%</text><text x="821" y="315" class="r" textLength="37.5" lengthAdjust="spacingAndGlyphs" fill="#c4c4c4">Count</text><text x="925" y="315" class="b" textLength="24" lengthAdjust="spacingAndGlyphs">177</text><text x="1028" y="315" class="b" textLength="24" lengthAdjust="spacingAndGlyphs">873</text><text x="822" y="353" class="date" textLength="212" lengthAdjust="spacingAndGlyphs" fill="#00e400">12/13/2025 6:09:59 AM</text><text x="821" y="388" class="r" textLength="48" lengthAdjust="spacingAndGlyphs">Squelch</text><text x="909.5" y="388" class="r">0</text><text x="981" y="388" class="r" textLength="43.5" lengthAdjust="spacingAndGlyphs">Upload</text><text x="1061" y="388" class="r" textLength="53.5" lengthAdjust="spacingAndGlyphs" fill="#c4c4c4">Disabled</text><text x="821" y="408" class="r" textLength="72.5" lengthAdjust="spacingAndGlyphs">Persistence</text><text x="909.5" y="408" class="r" textLength="41.5" lengthAdjust="spacingAndGlyphs">90 min</text><text x="981" y="408" class="r" textLength="50.5" lengthAdjust="spacingAndGlyphs">Capture</text><text x="1061" y="408" class="r" textLength="36.5" lengthAdjust="spacingAndGlyphs" fill="#00e400">Active</text><text x="821" y="428" class="r" textLength="39.5" lengthAdjust="spacingAndGlyphs">Range</text><text x="909.5" y="428" class="r" textLength="41" lengthAdjust="spacingAndGlyphs">313 mi</text><text x="981" y="428" class="r" textLength="52" lengthAdjust="spacingAndGlyphs">Receiver</text><text x="1061" y="428" class="r" textLength="50.5" lengthAdjust="spacingAndGlyphs" fill="#00e400">Enabled</text><text x="821" y="475" class="r" textLength="43.5" lengthAdjust="spacingAndGlyphs" fill="#bcbcbc">Uptime</text><text x="909.5" y="475" class="r" textLength="44" lengthAdjust="spacingAndGlyphs">374:30</text><text x="981" y="475" class="r" textLength="61.5" lengthAdjust="spacingAndGlyphs" fill="#bcbcbc">Peak time</text><text x="1061" y="475" class="r" textLength="24" lengthAdjust="spacingAndGlyphs" fill="#bcbcbc">Plot</text><text x="821" y="498" class="r" textLength="60.5" lengthAdjust="spacingAndGlyphs" fill="#bcbcbc">Peak rate</text><text x="909.5" y="498" class="r" textLength="42" lengthAdjust="spacingAndGlyphs">17/min</text><text x="981" y="498" class="r" textLength="50.5" lengthAdjust="spacingAndGlyphs">3:02 AM</text><text x="1061" y="498" class="r" textLength="35.5" lengthAdjust="spacingAndGlyphs">Strike</text><text x="822.5" y="528" class="r" textLength="76" lengthAdjust="spacingAndGlyphs" fill="#bcbcbc">Trend graph</text><text x="908.5" y="528" class="r" textLength="41" lengthAdjust="spacingAndGlyphs">60 min</text><path d="M822.6,777.5 823.7,777.5 824.8,777.5 825.9,777.5 827.0,777.5 828.2,777.5 829.3,777.5 830.4,777.5 831.5,777.5 832.6,777.5 833.7,769.6 834.8,769.6 835.9,769.6 837.1,761.8 838.2,761.8 839.3,761.8 840.4,761.8 841.5,769.6 842.6,769.6 843.7,754.0 844.8,754.0 845.9,754.0 847.1,761.8 848.2,754.0 849.3,769.6 850.4,769.6 851.5,777.5 852.6,777.5 853.7,777.5 854.8,777.5 856.0,777.5 857.1,777.5 858.2,777.5 859.3,777.5 860.4,777.5 861.5,777.5 862.6,777.5 863.7,777.5 864.8,777.5 866.0,777.5 867.1,769.6 868.2,761.8 869.3,761.8 870.4,769.6 871.5,769.6 872.6,777.5 873.7,777.5 874.9,777.5 876.0,769.6 877.1,769.6 878.2,769.6 879.3,769.6 880.4,769.6 881.5,769.6 882.6,769.6 883.7,769.6 884.9,769.6 886.0,769.6 887.1,769.6 888.2,769.6 889.3,769.6 890.4,777.5 891.5,777.5 892.6,777.5 893.7,777.5 894.9,769.6 896.0,769.6 897.1,777.5 898.2,777.5 899.3,777.5 900.4,769.6 901.5,769.6 902.6,769.6 903.8,769.6 904.9,769.6 906.0,769.6 907.1,769.6 908.2,769.6 909.3,769.6 910.4,769.6 911.5,769.6 912.6,769.6 913.8,769.6 914.9,761.8 916.0,761.8 917.1,777.5 918.2,777.5 919.3,777.5 920.4,769.6 921.5,769.6 922.7,769.6 923.8,769.6 924.9,777.5 926.0,777.5 927.1,777.5 928.2,777.5 929.3,777.5 930.4,777.5 931.5,777.5 932.7,777.5 933.8,777.5 934.9,777.5 936.0,777.5 937.1,777.5 938.2,777.5 939.3,777.5 940.4,777.5 941.6,777.5 942.7,769.6 943.8,769.6 944.9,769.6 946.0,777.5 947.1,777.5 948.2,777.5 949.3,777.5 950.4,769.6 951.6,769.6 952.7,769.6 953.8,769.6 954.9,769.6 956.0,769.6 957.1,769.6 958.2,777.5 959.3,777.5 960.5,769.6 961.6,769.6 962.7,769.6 963.8,769.6 964.9,769.6 966.0,769.6 967.1,769.6 968.2,769.6 969.3,777.5 970.5,777.5 971.6,777.5 972.7,777.5 973.8,777.5 974.9,777.5 976.0,769.6 977.1,769.6 978.2,769.6 979.4,769.6 980.5,769.6 981.6,769.6 982.7,769.6 983.8,769.6 984.9,761.8 986.0,769.6 987.1,761.8 988.2,769.6 989.4,769.6 990.5,769.6 991.6,769.6 992.7,769.6 993.8,769.6 994.9,769.6 996.0,769.6 997.1,769.6 998.3,769.6 999.4,777.5 1000.5,777.5 1001.6,777.5 1002.7,769.6 1003.8,769.6 1004.9,769.6 1006.0,769.6 1007.1,777.5 1008.3,777.5 1009.4,777.5 1010.5,777.5 1011.6,777.5 1012.7,777.5 1013.8,777.5 1014.9,777.5 1016.0,777.5 1017.2,777.5 1018.3,777.5 1019.4,777.5 1020.5,777.5 1021.6,777.5 1022.7,769.6 1023.8,769.6 1024.9,769.6 1026.0,769.6 1027.2,777.5 1028.3,777.5 1029.4,777.5 1030.5,777.5 1031.6,777.5 1032.7,777.5 1033.8,777.5 1034.9,777.5 1036.0,777.5 1037.2,777.5 1038.3,777.5 1039.4,777.5 1040.5,777.5 1041.6,777.5 1042.7,777.5 1043.8,777.5 1044.9,777.5 1046.1,761.8 1047.2,761.8 1048.3,769.6 1049.4,761.8 1050.5,761.8 1051.6,761.8 1052.7,769.6 1053.8,769.6 1054.9,769.6 1056.1,769.6 1057.2,769.6 1058.3,777.5 1059.4,777.5 1060.5,777.5 1061.6,761.8 1062.7,761.8 1063.8,777.5 1065.0,777.5 1066.1,777.5 1067.2,777.5 1068.3,777.5 1069.4,769.6 1070.5,769.6 1071.6,777.5 1072.7,777.5 1073.8,777.5 1075.0,777.5 1076.1,777.5 1077.2,777.5 1078.3,777.5 1079.4,777.5 1080.5,777.5 1081.6,777.5 1082.7,769.6 1083.9,769.6 1085.0,769.6 1086.1,761.8 1087.2,761.8 1088.3,769.6" fill="none" stroke="#ff0000" stroke-width="1" stroke-linejoin="miter" shape-rendering="crispEdges"/><path d="M822.6,777.5 823.7,777.5 824.8,777.5 825.9,777.5 827.0,769.6 828.2,769.6 829.3,769.6 830.4,769.6 831.5,777.5 832.6,777.5 833.7,777.5 834.8,777.5 835.9,777.5 837.1,777.5 838.2,777.5 839.3,777.5 840.4,777.5 841.5,777.5 842.6,777.5 843.7,777.5 844.8,769.6 845.9,769.6 847.1,769.6 848.2,769.6 849.3,769.6 850.4,769.6 851.5,769.6 852.6,769.6 853.7,777.5 854.8,777.5 856.0,777.5 857.1,777.5 858.2,777.5 859.3,777.5 860.4,777.5 861.5,769.6 862.6,769.6 863.7,769.6 864.8,769.6 866.0,769.6 867.1,769.6 868.2,777.5 869.3,777.5 870.4,769.6 871.5,769.6 872.6,769.6 873.7,769.6 874.9,769.6 876.0,777.5 877.1,777.5 878.2,777.5 879.3,769.6 880.4,769.6 881.5,769.6 882.6,769.6 883.7,777.5 884.9,777.5 886.0,777.5 887.1,777.5 888.2,769.6 889.3,769.6 890.4,769.6 891.5,769.6 892.6,769.6 893.7,769.6 894.9,769.6 896.0,769.6 897.1,777.5 898.2,777.5 899.3,777.5 900.4,777.5 901.5,777.5 902.6,777.5 903.8,777.5 904.9,777.5 906.0,777.5 907.1,777.5 908.2,777.5 909.3,777.5 910.4,777.5 911.5,769.6 912.6,769.6 913.8,769.6 914.9,769.6 916.0,769.6 917.1,769.6 918.2,769.6 919.3,769.6 920.4,769.6 921.5,769.6 922.7,777.5 923.8,777.5 924.9,777.5 926.0,769.6 927.1,769.6 928.2,769.6 929.3,769.6 930.4,761.8 931.5,761.8 932.7,761.8 933.8,761.8 934.9,761.8 936.0,761.8 937.1,761.8 938.2,777.5 939.3,777.5 940.4,761.8 941.6,769.6 942.7,769.6 943.8,769.6 944.9,777.5 946.0,777.5 947.1,769.6 948.2,769.6 949.3,777.5 950.4,777.5 951.6,777.5 952.7,777.5 953.8,777.5 954.9,777.5 956.0,777.5 957.1,777.5 958.2,761.8 959.3,761.8 960.5,761.8 961.6,761.8 962.7,769.6 963.8,777.5 964.9,777.5 966.0,777.5 967.1,777.5 968.2,777.5 969.3,777.5 970.5,777.5 971.6,777.5 972.7,777.5 973.8,777.5 974.9,777.5 976.0,777.5 977.1,777.5 978.2,769.6 979.4,769.6 980.5,769.6 981.6,769.6 982.7,777.5 983.8,777.5 984.9,777.5 986.0,777.5 987.1,777.5 988.2,777.5 989.4,777.5 990.5,769.6 991.6,769.6 992.7,777.5 993.8,777.5 994.9,777.5 996.0,777.5 997.1,769.6 998.3,769.6 999.4,769.6 1000.5,777.5 1001.6,777.5 1002.7,777.5 1003.8,769.6 1004.9,769.6 1006.0,769.6 1007.1,777.5 1008.3,777.5 1009.4,777.5 1010.5,777.5 1011.6,777.5 1012.7,777.5 1013.8,777.5 1014.9,769.6 1016.0,769.6 1017.2,769.6 1018.3,777.5 1019.4,777.5 1020.5,777.5 1021.6,777.5 1022.7,777.5 1023.8,777.5 1024.9,777.5 1026.0,769.6 1027.2,769.6 1028.3,769.6 1029.4,769.6 1030.5,769.6 1031.6,761.8 1032.7,769.6 1033.8,761.8 1034.9,761.8 1036.0,769.6 1037.2,769.6 1038.3,777.5 1039.4,777.5 1040.5,777.5 1041.6,769.6 1042.7,769.6 1043.8,777.5 1044.9,777.5 1046.1,777.5 1047.2,777.5 1048.3,777.5 1049.4,777.5 1050.5,777.5 1051.6,777.5 1052.7,777.5 1053.8,761.8 1054.9,761.8 1056.1,761.8 1057.2,761.8 1058.3,769.6 1059.4,769.6 1060.5,769.6 1061.6,777.5 1062.7,777.5 1063.8,777.5 1065.0,777.5 1066.1,777.5 1067.2,777.5 1068.3,777.5 1069.4,769.6 1070.5,769.6 1071.6,769.6 1072.7,769.6 1073.8,777.5 1075.0,777.5 1076.1,777.5 1077.2,777.5 1078.3,777.5 1079.4,777.5 1080.5,777.5 1081.6,769.6 1082.7,761.8 1083.9,761.8 1085.0,777.5 1086.1,777.5 1087.2,777.5 1088.3,777.5" fill="none" stroke="#96d2ff" stroke-width="1" stroke-linejoin="miter" shape-rendering="crispEdges"/><path d="M822.6,777.5 823.7,777.5 824.8,777.5 825.9,777.5 827.0,777.5 828.2,777.5 829.3,777.5 830.4,777.5 831.5,769.6 832.6,769.6 833.7,769.6 834.8,769.6 835.9,777.5 837.1,777.5 838.2,777.5 839.3,777.5 840.4,777.5 841.5,777.5 842.6,777.5 843.7,777.5 844.8,777.5 845.9,777.5 847.1,761.8 848.2,761.8 849.3,761.8 850.4,761.8 851.5,769.6 852.6,761.8 853.7,761.8 854.8,777.5 856.0,777.5 857.1,777.5 858.2,761.8 859.3,761.8 860.4,777.5 861.5,777.5 862.6,777.5 863.7,777.5 864.8,777.5 866.0,777.5 867.1,777.5 868.2,777.5 869.3,777.5 870.4,777.5 871.5,777.5 872.6,777.5 873.7,777.5 874.9,777.5 876.0,777.5 877.1,769.6 878.2,769.6 879.3,769.6 880.4,769.6 881.5,777.5 882.6,777.5 883.7,769.6 884.9,769.6 886.0,769.6 887.1,769.6 888.2,769.6 889.3,777.5 890.4,777.5 891.5,777.5 892.6,777.5 893.7,777.5 894.9,777.5 896.0,777.5 897.1,777.5 898.2,777.5 899.3,777.5 900.4,769.6 901.5,769.6 902.6,769.6 903.8,769.6 904.9,769.6 906.0,769.6 907.1,769.6 908.2,769.6 909.3,769.6 910.4,769.6 911.5,769.6 912.6,769.6 913.8,769.6 914.9,769.6 916.0,769.6 917.1,769.6 918.2,769.6 919.3,769.6 920.4,769.6 921.5,769.6 922.7,769.6 923.8,769.6 924.9,777.5 926.0,777.5 927.1,761.8 928.2,761.8 929.3,769.6 930.4,769.6 931.5,769.6 932.7,769.6 933.8,777.5 934.9,777.5 936.0,777.5 937.1,769.6 938.2,769.6 939.3,769.6 940.4,769.6 941.6,769.6 942.7,769.6 943.8,769.6 944.9,777.5 946.0,777.5 947.1,769.6 948.2,769.6 949.3,769.6 950.4,769.6 951.6,769.6 952.7,769.6 953.8,769.6 954.9,769.6 956.0,769.6 957.1,769.6 958.2,769.6 959.3,769.6 960.5,769.6 961.6,777.5 962.7,777.5 963.8,777.5 964.9,777.5 966.0,777.5 967.1,777.5 968.2,777.5 969.3,769.6 970.5,769.6 971.6,777.5 972.7,777.5 973.8,769.6 974.9,769.6 976.0,769.6 977.1,769.6 978.2,761.8 979.4,761.8 980.5,761.8 981.6,761.8 982.7,777.5 983.8,777.5 984.9,777.5 986.0,769.6 987.1,769.6 988.2,769.6 989.4,769.6 990.5,769.6 991.6,769.6 992.7,769.6 993.8,769.6 994.9,769.6 996.0,769.6 997.1,769.6 998.3,769.6 999.4,777.5 1000.5,777.5 1001.6,777.5 1002.7,777.5 1003.8,777.5 1004.9,777.5 1006.0,777.5 1007.1,777.5 1008.3,761.8 1009.4,761.8 1010.5,761.8 1011.6,761.8 1012.7,769.6 1013.8,777.5 1014.9,777.5 1016.0,777.5 1017.2,769.6 1018.3,769.6 1019.4,769.6 1020.5,769.6 1021.6,777.5 1022.7,777.5 1023.8,777.5 1024.9,777.5 1026.0,769.6 1027.2,769.6 1028.3,769.6 1029.4,769.6 1030.5,769.6 1031.6,777.5 1032.7,777.5 1033.8,777.5 1034.9,777.5 1036.0,777.5 1037.2,777.5 1038.3,777.5 1039.4,777.5 1040.5,777.5 1041.6,777.5 1042.7,777.5 1043.8,777.5 1044.9,769.6 1046.1,769.6 1047.2,761.8 1048.3,769.6 1049.4,777.5 1050.5,777.5 1051.6,777.5 1052.7,777.5 1053.8,769.6 1054.9,769.6 1056.1,769.6 1057.2,769.6 1058.3,769.6 1059.4,769.6 1060.5,777.5 1061.6,777.5 1062.7,777.5 1063.8,777.5 1065.0,777.5 1066.1,769.6 1067.2,769.6 1068.3,777.5 1069.4,777.5 1070.5,777.5 1071.6,777.5 1072.7,777.5 1073.8,769.6 1075.0,769.6 1076.1,769.6 1077.2,769.6 1078.3,769.6 1079.4,777.5 1080.5,777.5 1081.6,769.6 1082.7,769.6 1083.9,769.6 1085.0,769.6 1086.1,769.6 1087.2,769.6 1088.3,769.6" fill="none" stroke="#ff69b4" stroke-width="1" stroke-linejoin="miter" shape-rendering="crispEdges"/><path d="M822.6,777.5 823.7,769.6 824.8,761.8 825.9,769.6 827.0,769.6 828.2,769.6 829.3,761.8 830.4,761.8 831.5,746.1 832.6,746.1 833.7,761.8 834.8,761.8 835.9,754.0 837.1,746.1 838.2,730.4 839.3,738.2 840.4,738.2 841.5,746.1 842.6,746.1 843.7,761.8 844.8,761.8 845.9,754.0 847.1,738.2 848.2,738.2 849.3,730.4 850.4,738.2 851.5,746.1 852.6,761.8 853.7,761.8 854.8,761.8 856.0,754.0 857.1,761.8 858.2,761.8 859.3,746.1 860.4,746.1 861.5,738.2 862.6,730.4 863.7,738.2 864.8,746.1 866.0,746.1 867.1,746.1 868.2,761.8 869.3,769.6 870.4,769.6 871.5,761.8 872.6,754.0 873.7,754.0 874.9,754.0 876.0,769.6 877.1,761.8 878.2,761.8 879.3,754.0 880.4,754.0 881.5,761.8 882.6,761.8 883.7,754.0 884.9,746.1 886.0,746.1 887.1,754.0 888.2,746.1 889.3,754.0 890.4,754.0 891.5,746.1 892.6,754.0 893.7,769.6 894.9,769.6 896.0,777.5 897.1,777.5 898.2,777.5 899.3,777.5 900.4,761.8 901.5,761.8 902.6,769.6 903.8,769.6 904.9,769.6 906.0,769.6 907.1,769.6 908.2,761.8 909.3,761.8 910.4,761.8 911.5,769.6 912.6,761.8 913.8,769.6 914.9,769.6 916.0,769.6 917.1,761.8 918.2,738.2 919.3,730.4 920.4,730.4 921.5,730.4 922.7,746.1 923.8,754.0 924.9,754.0 926.0,754.0 927.1,738.2 928.2,730.4 929.3,746.1 930.4,738.2 931.5,754.0 932.7,761.8 933.8,769.6 934.9,754.0 936.0,746.1 937.1,746.1 938.2,754.0 939.3,761.8 940.4,769.6 941.6,777.5 942.7,777.5 943.8,769.6 944.9,761.8 946.0,761.8 947.1,761.8 948.2,754.0 949.3,761.8 950.4,761.8 951.6,746.1 952.7,730.4 953.8,722.5 954.9,730.4 956.0,730.4 957.1,730.4 958.2,738.2 959.3,722.5 960.5,730.4 961.6,746.1 962.7,754.0 963.8,761.8 964.9,761.8 966.0,754.0 967.1,746.1 968.2,754.0 969.3,754.0 970.5,754.0 971.6,746.1 972.7,754.0 973.8,754.0 974.9,746.1 976.0,746.1 977.1,746.1 978.2,754.0 979.4,746.1 980.5,746.1 981.6,754.0 982.7,746.1 983.8,746.1 984.9,746.1 986.0,746.1 987.1,754.0 988.2,754.0 989.4,761.8 990.5,754.0 991.6,761.8 992.7,769.6 993.8,761.8 994.9,754.0 996.0,746.1 997.1,738.2 998.3,730.4 999.4,730.4 1000.5,746.1 1001.6,761.8 1002.7,761.8 1003.8,777.5 1004.9,761.8 1006.0,746.1 1007.1,738.2 1008.3,754.0 1009.4,754.0 1010.5,761.8 1011.6,769.6 1012.7,754.0 1013.8,754.0 1014.9,754.0 1016.0,761.8 1017.2,761.8 1018.3,761.8 1019.4,769.6 1020.5,769.6 1021.6,769.6 1022.7,761.8 1023.8,761.8 1024.9,761.8 1026.0,769.6 1027.2,769.6 1028.3,769.6 1029.4,761.8 1030.5,761.8 1031.6,769.6 1032.7,754.0 1033.8,761.8 1034.9,754.0 1036.0,754.0 1037.2,746.1 1038.3,746.1 1039.4,754.0 1040.5,754.0 1041.6,754.0 1042.7,761.8 1043.8,761.8 1044.9,754.0 1046.1,761.8 1047.2,754.0 1048.3,754.0 1049.4,769.6 1050.5,769.6 1051.6,754.0 1052.7,714.7 1053.8,699.0 1054.9,683.3 1056.1,691.1 1057.2,706.9 1058.3,730.4 1059.4,746.1 1060.5,754.0 1061.6,761.8 1062.7,761.8 1063.8,761.8 1065.0,738.2 1066.1,730.4 1067.2,738.2 1068.3,738.2 1069.4,746.1 1070.5,738.2 1071.6,746.1 1072.7,746.1 1073.8,754.0 1075.0,738.2 1076.1,754.0 1077.2,746.1 1078.3,754.0 1079.4,761.8 1080.5,769.6 1081.6,761.8 1082.7,761.8 1083.9,746.1 1085.0,746.1 1086.1,754.0 1087.2,754.0 1088.3,761.8" fill="none" stroke="#00ff00" stroke-width="1" stroke-linejoin="miter" shape-rendering="crispEdges"/><path d="M822.6,777.5 823.7,754.0 824.8,754.0 825.9,754.0 827.0,761.8 828.2,761.8 829.3,754.0 830.4,746.1 831.5,738.2 832.6,730.4 833.7,738.2 834.8,738.2 835.9,730.4 837.1,722.5 838.2,714.7 839.3,714.7 840.4,722.5 841.5,738.2 842.6,738.2 843.7,738.2 844.8,738.2 845.9,730.4 847.1,722.5 848.2,714.7 849.3,714.7 850.4,722.5 851.5,738.2 852.6,746.1 853.7,746.1 854.8,746.1 856.0,738.2 857.1,746.1 858.2,738.2 859.3,722.5 860.4,714.7 861.5,706.9 862.6,691.1 863.7,706.9 864.8,714.7 866.0,730.4 867.1,738.2 868.2,746.1 869.3,754.0 870.4,754.0 871.5,754.0 872.6,746.1 873.7,746.1 874.9,754.0 876.0,761.8 877.1,754.0 878.2,746.1 879.3,746.1 880.4,746.1 881.5,746.1 882.6,754.0 883.7,746.1 884.9,730.4 886.0,730.4 887.1,738.2 888.2,738.2 889.3,730.4 890.4,730.4 891.5,738.2 892.6,746.1 893.7,754.0 894.9,761.8 896.0,769.6 897.1,777.5 898.2,777.5 899.3,777.5 900.4,761.8 901.5,761.8 902.6,761.8 903.8,761.8 904.9,769.6 906.0,754.0 907.1,754.0 908.2,754.0 909.3,754.0 910.4,761.8 911.5,761.8 912.6,754.0 913.8,754.0 914.9,754.0 916.0,754.0 917.1,738.2 918.2,706.9 919.3,699.0 920.4,699.0 921.5,706.9 922.7,722.5 923.8,730.4 924.9,738.2 926.0,746.1 927.1,714.7 928.2,699.0 929.3,714.7 930.4,722.5 931.5,738.2 932.7,746.1 933.8,754.0 934.9,738.2 936.0,722.5 937.1,730.4 938.2,738.2 939.3,746.1 940.4,754.0 941.6,769.6 942.7,769.6 943.8,761.8 944.9,754.0 946.0,746.1 947.1,754.0 948.2,754.0 949.3,746.1 950.4,746.1 951.6,730.4 952.7,714.7 953.8,691.1 954.9,706.9 956.0,699.0 957.1,706.9 958.2,706.9 959.3,699.0 960.5,714.7 961.6,730.4 962.7,746.1 963.8,746.1 964.9,746.1 966.0,738.2 967.1,738.2 968.2,730.4 969.3,730.4 970.5,738.2 971.6,738.2 972.7,738.2 973.8,746.1 974.9,738.2 976.0,730.4 977.1,738.2 978.2,730.4 979.4,730.4 980.5,730.4 981.6,730.4 982.7,722.5 983.8,722.5 984.9,730.4 986.0,738.2 987.1,738.2 988.2,746.1 989.4,746.1 990.5,746.1 991.6,754.0 992.7,754.0 993.8,754.0 994.9,738.2 996.0,722.5 997.1,706.9 998.3,706.9 999.4,714.7 1000.5,730.4 1001.6,746.1 1002.7,761.8 1003.8,761.8 1004.9,746.1 1006.0,730.4 1007.1,714.7 1008.3,730.4 1009.4,738.2 1010.5,746.1 1011.6,754.0 1012.7,754.0 1013.8,754.0 1014.9,746.1 1016.0,754.0 1017.2,754.0 1018.3,761.8 1019.4,761.8 1020.5,769.6 1021.6,761.8 1022.7,754.0 1023.8,746.1 1024.9,754.0 1026.0,761.8 1027.2,761.8 1028.3,761.8 1029.4,754.0 1030.5,754.0 1031.6,754.0 1032.7,754.0 1033.8,746.1 1034.9,738.2 1036.0,730.4 1037.2,730.4 1038.3,730.4 1039.4,730.4 1040.5,746.1 1041.6,738.2 1042.7,746.1 1043.8,754.0 1044.9,746.1 1046.1,746.1 1047.2,738.2 1048.3,746.1 1049.4,754.0 1050.5,754.0 1051.6,738.2 1052.7,706.9 1053.8,683.3 1054.9,667.6 1056.1,675.5 1057.2,691.1 1058.3,714.7 1059.4,730.4 1060.5,738.2 1061.6,746.1 1062.7,746.1 1063.8,738.2 1065.0,714.7 1066.1,699.0 1067.2,706.9 1068.3,706.9 1069.4,714.7 1070.5,706.9 1071.6,722.5 1072.7,730.4 1073.8,730.4 1075.0,722.5 1076.1,730.4 1077.2,722.5 1078.3,730.4 1079.4,746.1 1080.5,754.0 1081.6,754.0 1082.7,738.2 1083.9,722.5 1085.0,722.5 1086.1,730.4 1087.2,738.2 1088.3,746.1" fill="none" stroke="#ffffff" stroke-width="1" stroke-linejoin="miter" shape-rendering="crispEdges"/><path d="M822.5,773 V777.5 H1088.5 M1088.5,542.5 V777.5" fill="none" stroke="#d0d0d0" stroke-width="1" shape-rendering="crispEdges"/><path d="M1086.5,738.2 H1090.5 M1084.5,699.0 H1089 M1086.5,659.8 H1090.5 M1084.5,620.5 H1089 M1086.5,581.2 H1090.5 M1084.5,542.0 H1089 M1088.7,777.5 V780.5 M1044.2,777.5 V780.5 M999.8,777.5 V780.5 M955.4,777.5 V780.5 M910.9,777.5 V780.5 M866.5,777.5 V780.5 M822.0,777.5 V780.5" fill="none" stroke="#d0d0d0" stroke-width="1" shape-rendering="crispEdges"/><text x="1092.5" y="703.5" class="r" fill="#c4ccd4" textLength="14" lengthAdjust="spacingAndGlyphs">10</text><text x="1092.5" y="625.0" class="r" fill="#c4ccd4" textLength="14" lengthAdjust="spacingAndGlyphs">20</text><text x="1092.5" y="546.5" class="r" fill="#c4ccd4" textLength="14" lengthAdjust="spacingAndGlyphs">30</text><text x="1087.7" y="793" class="r" fill="#c4ccd4" textLength="7" lengthAdjust="spacingAndGlyphs">0</text><text x="1042.2" y="793" class="r" fill="#c4ccd4" textLength="14" lengthAdjust="spacingAndGlyphs">10</text><text x="997.8" y="793" class="r" fill="#c4ccd4" textLength="14" lengthAdjust="spacingAndGlyphs">20</text><text x="953.4" y="793" class="r" fill="#c4ccd4" textLength="14" lengthAdjust="spacingAndGlyphs">30</text><text x="908.9" y="793" class="r" fill="#c4ccd4" textLength="14" lengthAdjust="spacingAndGlyphs">40</text><text x="864.5" y="793" class="r" fill="#c4ccd4" textLength="14" lengthAdjust="spacingAndGlyphs">50</text><text x="820.0" y="793" class="r" fill="#c4ccd4" textLength="14" lengthAdjust="spacingAndGlyphs">60</text><text x="1100" y="793" class="r" fill="#c4ccd4" textLength="19" lengthAdjust="spacingAndGlyphs">min</text></svg>
</body></html>
